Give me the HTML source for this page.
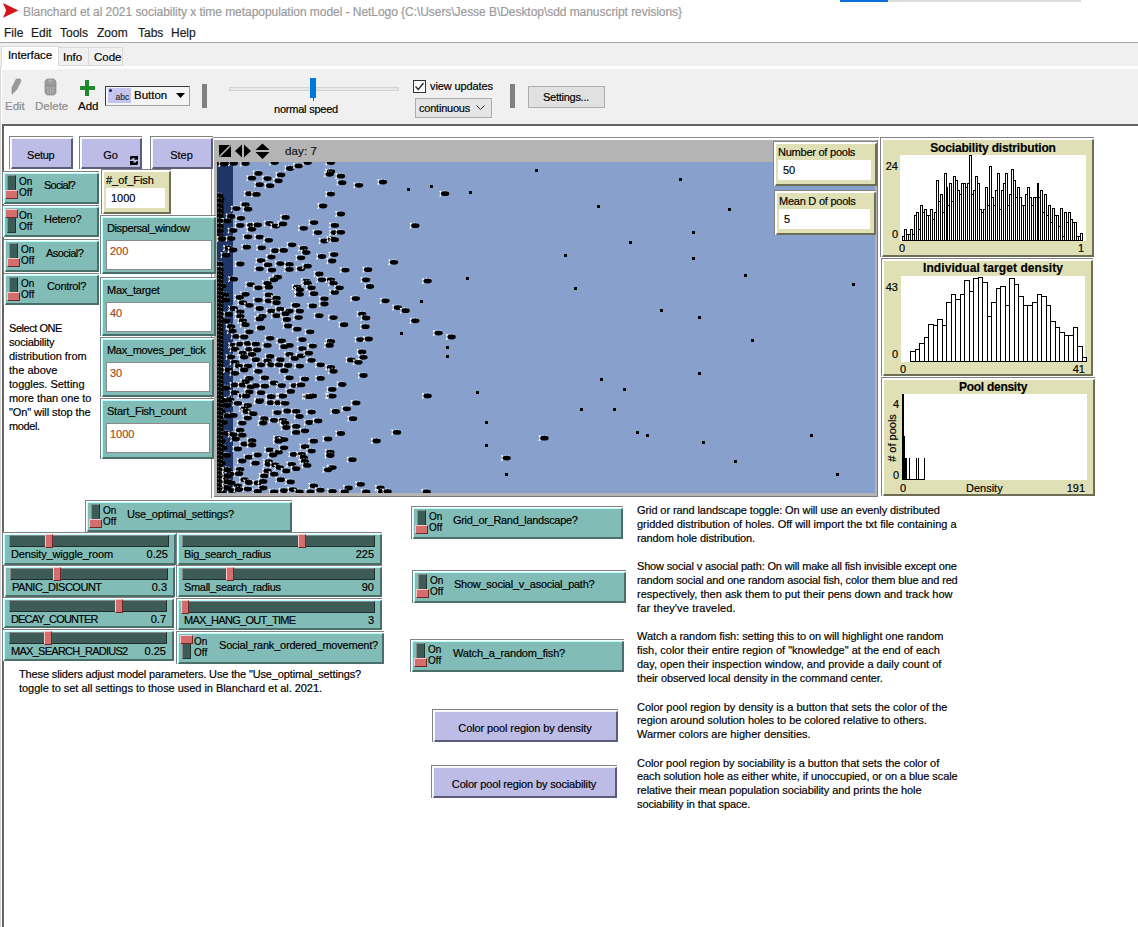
<!DOCTYPE html><html><head><meta charset="utf-8"><style>
*{box-sizing:border-box;margin:0;padding:0}
html,body{width:1138px;height:927px;overflow:hidden;background:#fff;font-family:"Liberation Sans",sans-serif;color:#000}
.a{position:absolute}
.t{position:absolute;white-space:nowrap;line-height:1;-webkit-text-stroke:0.18px currentColor}
.fr{position:absolute;border-top:1px solid #828282;border-left:1px solid #828282;background:#fff}
.fi{position:absolute;left:1px;top:1px;right:0;bottom:0;border-top:1px solid;border-left:1px solid;border-right:2px solid;border-bottom:2px solid}
.lav{background:#bcbce6;border-top-color:#f4f4ff;border-left-color:#f4f4ff;border-right-color:#5c5c7a;border-bottom-color:#5c5c7a}
.tea{background:#82bcb6;border-top-color:#b8ffff;border-left-color:#b8ffff;border-right-color:#4a6e69;border-bottom-color:#4a6e69}
.bei{background:#e0e0b6;border-top-color:#ffffff;border-left-color:#ffffff;border-right-color:#6e6e56;border-bottom-color:#6e6e56}
.f11{font-size:11px}
.fld{position:absolute;background:#fff;border:1px solid #8a8a8a}
.trk{position:absolute;background:#3e5c57;border-top:1px solid #8a8a8a;border-left:1px solid #8a8a8a;border-bottom:1px solid #1e2e2b;border-right:1px solid #1e2e2b}
.thm{position:absolute;background:#d46e6e;border-top:1px solid #ffc8c8;border-left:1px solid #ffc8c8;border-right:1px solid #6e2a2a;border-bottom:1px solid #6e2a2a}
.swt{position:absolute;background:#3e5c57;border:1px solid #8a8a8a;border-right-color:#203430;border-bottom-color:#203430}
</style></head><body><svg class="a" style="left:2px;top:2px" width="18" height="18" viewBox="0 0 18 18"><path d="M1 1 L16.4 8.4 L1 15.8 L4.2 8.4 Z" fill="#d4141c"/></svg><div class="t" id="q1" style="left:23px;top:6.04px;font-size:12px;color:#9a9a9a;font-weight:normal;letter-spacing:-0.049px;">Blanchard et al 2021 sociability x time metapopulation model - NetLogo {C:\Users\Jesse B\Desktop\sdd manuscript revisions}</div><div class="a" style="left:840px;top:0;width:48px;height:2px;background:#0a6ed8"></div><div class="a" style="left:888px;top:0;width:193px;height:2px;background:#dcdcdc"></div><div class="t" style="left:4px;top:26.94px;font-size:12px;color:#1a1a1a;font-weight:normal;">File</div><div class="t" style="left:31px;top:26.94px;font-size:12px;color:#1a1a1a;font-weight:normal;">Edit</div><div class="t" style="left:60px;top:26.94px;font-size:12px;color:#1a1a1a;font-weight:normal;">Tools</div><div class="t" style="left:97px;top:26.94px;font-size:12px;color:#1a1a1a;font-weight:normal;">Zoom</div><div class="t" style="left:138px;top:26.94px;font-size:12px;color:#1a1a1a;font-weight:normal;">Tabs</div><div class="t" style="left:171px;top:26.94px;font-size:12px;color:#1a1a1a;font-weight:normal;">Help</div><div class="a" style="left:0;top:42px;width:1138px;height:1px;background:#a6a6a6"></div><div class="a" style="left:0;top:43px;width:1138px;height:81px;background:#f0f0f0"></div><div class="a" style="left:1px;top:46px;width:58px;height:24px;background:#fff;border:1px solid #d9d9d9;border-bottom:none"></div><div class="a" style="left:58px;top:47px;width:31px;height:19px;background:#f0f0f0;border:1px solid #d9d9d9"></div><div class="a" style="left:88px;top:47px;width:35px;height:19px;background:#f0f0f0;border:1px solid #d9d9d9"></div><div class="t" id="q2" style="left:8px;top:50.07px;font-size:11.5px;color:#000;font-weight:normal;letter-spacing:-0.083px;">Interface</div><div class="t" style="left:63px;top:52.07px;font-size:11.5px;color:#000;font-weight:normal;">Info</div><div class="t" style="left:94px;top:52.07px;font-size:11.5px;color:#000;font-weight:normal;">Code</div><div class="a" style="left:1px;top:66px;width:1137px;height:3px;background:#fff"></div><div class="a" style="left:1px;top:66px;width:1px;height:60px;background:#fff"></div><svg class="a" style="left:0;top:70px" width="70" height="30" viewBox="0 70 70 30"><path d="M16.3 79 L20.3 79 L21 81 L16.6 89.8 L12 94.2 L12 87.4 Z" fill="#9a9a9a" stroke="#888" stroke-width="0.6"/><path d="M45 81 L47 79 L54 79 L56 81 L56 93 L54 95 L47 95 L45 93 Z" fill="#9c9c9c" stroke="#8a8a8a" stroke-width="0.7"/><path d="M45.5 85 Q50.5 86.5 55.5 85" stroke="#888" stroke-width="0.8" fill="none"/><ellipse cx="50.3" cy="80.8" rx="2" ry="1.3" fill="#b0b0b0"/><path d="M48 87 V93.5 M50.5 87 V94 M53 87 V93.5" stroke="#b6b6b6" stroke-width="0.8"/></svg><div class="t" style="left:5px;top:101.07px;font-size:11.5px;color:#8c8c8c;font-weight:normal;">Edit</div><div class="t" style="left:35px;top:101.07px;font-size:11.5px;color:#8c8c8c;font-weight:normal;">Delete</div><div class="a" style="left:80px;top:86px;width:15px;height:4px;background:#1e8a28"></div><div class="a" style="left:85px;top:80px;width:4px;height:16px;background:#1e8a28"></div><div class="t" style="left:78px;top:101.07px;font-size:11.5px;color:#000;font-weight:normal;">Add</div><div class="a" style="left:105px;top:86px;width:85px;height:20px;background:#f4f4f4;border:1px solid #3a3a3a;border-right-color:#a0a0a0;border-bottom-color:#a0a0a0"></div><div class="a" style="left:108px;top:88px;width:23px;height:15px;background:#c4c4ee"></div><div class="t" style="left:115.5px;top:93.1px;font-size:8.5px;color:#333;font-weight:normal;">abc</div><div class="a" style="left:109px;top:89px;width:3px;height:3px;background:#202060;border-radius:50%"></div><div class="t" style="left:134px;top:90.07px;font-size:11.5px;color:#000;font-weight:normal;">Button</div><svg class="a" style="left:176px;top:93px" width="10" height="6"><path d="M0 0 H9 L4.5 5 Z" fill="#000"/></svg><div class="a" style="left:202px;top:84px;width:5px;height:24px;background:#808080"></div><div class="a" style="left:229px;top:87px;width:170px;height:4px;background:#e7e7e7;border:1px solid #d4d4d4"></div><div class="a" style="left:310px;top:78px;width:6px;height:20px;background:#0078d7"></div><div class="a" style="left:313px;top:98px;width:1px;height:3px;background:#555"></div><div class="t" id="q3" style="left:274px;top:104.49px;font-size:11px;color:#000;font-weight:normal;letter-spacing:-0.221px;">normal speed</div><div class="a" style="left:413px;top:80px;width:13px;height:13px;background:#fff;border:1px solid #333"></div><svg class="a" style="left:414px;top:81px" width="11" height="11"><path d="M1.5 5.5 L4.3 8.5 L9.5 2" stroke="#222" stroke-width="1.3" fill="none"/></svg><div class="t" id="q4" style="left:430px;top:81.49px;font-size:11px;color:#000;font-weight:normal;letter-spacing:-0.102px;">view updates</div><div class="a" style="left:415px;top:98px;width:77px;height:20px;background:#e5e5e5;border:1px solid #adadad"></div><div class="t" id="q5" style="left:419px;top:103.49px;font-size:11px;color:#000;font-weight:normal;letter-spacing:-0.222px;">continuous</div><svg class="a" style="left:476px;top:105px" width="10" height="6"><path d="M0.5 0.5 L4.5 4.5 L8.5 0.5" stroke="#333" stroke-width="1" fill="none"/></svg><div class="a" style="left:510px;top:84px;width:5px;height:24px;background:#808080"></div><div class="a" style="left:528px;top:86px;width:77px;height:22px;background:#e1e1e1;border:1px solid #adadad"></div><div class="t" id="q6" style="left:543px;top:91.99px;font-size:11px;color:#000;font-weight:normal;letter-spacing:-0.266px;">Settings...</div><div class="a" style="left:0;top:66px;width:1px;height:861px;background:#d8d8d8"></div><div class="a" style="left:2px;top:124px;width:1136px;height:2px;background:#646464"></div><div class="a" style="left:2px;top:124px;width:2px;height:803px;background:#646464"></div><div class="a" style="left:211px;top:137px;width:668px;height:361px;border-top:1px solid #8e8e8e;border-left:1px solid #8e8e8e;background:#fff"></div><div class="a" style="left:214px;top:140px;width:664px;height:357px;background:#b4b4b4;border-right:1px solid #7a7a7a;border-bottom:1px solid #7a7a7a"></div><svg class="a" style="left:218px;top:143px" width="56" height="17" viewBox="0 0 56 17"><rect x="1" y="2" width="12" height="12" fill="#000"/><path d="M1.5 13.5 L12.5 2.5" stroke="#b4b4b4" stroke-width="1.6"/><path d="M24 1.5 L24 14.5 L17 8 Z M26 1.5 L26 14.5 L33 8 Z" fill="#000"/><path d="M44.5 0.5 L51.5 7 L37.5 7 Z M37.5 9 L51.5 9 L44.5 16 Z" fill="#000"/></svg><div class="t" id="q59" style="left:285px;top:146.07px;font-size:11.5px;color:#111;font-weight:normal;letter-spacing:0.112px;">day: 7</div><svg class="a" style="left:217px;top:162px" width="658" height="331" viewBox="217 162 658 331"><rect x="217" y="162" width="658" height="331" fill="#87a0cc"/><rect x="217" y="162" width="16" height="331" fill="#1e3566"/><path d="M219.4 160.5 L221.4 163.0 L219.4 166.1" stroke="#fff" stroke-width="1.2" fill="none"/><ellipse cx="223.9" cy="162.6" rx="4.2" ry="2.4" fill="none" stroke="#fff" stroke-width="0.7" stroke-dasharray="1.3 1.6"/><ellipse cx="224.8" cy="163.3" rx="4.2" ry="2.4" fill="#000"/><path d="M228.4 160.5 L230.4 163.0 L228.4 166.1" stroke="#fff" stroke-width="1.2" fill="none"/><ellipse cx="232.9" cy="162.6" rx="4.2" ry="2.4" fill="none" stroke="#fff" stroke-width="0.7" stroke-dasharray="1.3 1.6"/><ellipse cx="233.8" cy="163.3" rx="4.2" ry="2.4" fill="#000"/><path d="M240.1 160.8 L242.1 163.3 L240.1 166.4" stroke="#fff" stroke-width="1.2" fill="none"/><ellipse cx="244.6" cy="162.9" rx="4.2" ry="2.4" fill="none" stroke="#fff" stroke-width="0.7" stroke-dasharray="1.3 1.6"/><ellipse cx="245.5" cy="163.6" rx="4.2" ry="2.4" fill="#000"/><path d="M269.2 159.8 L271.2 162.3 L269.2 165.4" stroke="#fff" stroke-width="1.2" fill="none"/><ellipse cx="273.7" cy="161.9" rx="4.2" ry="2.4" fill="none" stroke="#fff" stroke-width="0.7" stroke-dasharray="1.3 1.6"/><ellipse cx="274.6" cy="162.6" rx="4.2" ry="2.4" fill="#000"/><path d="M302.2 159.8 L304.2 162.3 L302.2 165.4" stroke="#fff" stroke-width="1.2" fill="none"/><ellipse cx="306.7" cy="161.9" rx="4.2" ry="2.4" fill="none" stroke="#fff" stroke-width="0.7" stroke-dasharray="1.3 1.6"/><ellipse cx="307.6" cy="162.6" rx="4.2" ry="2.4" fill="#000"/><path d="M325.5 159.8 L327.5 162.3 L325.5 165.4" stroke="#fff" stroke-width="1.2" fill="none"/><ellipse cx="330.0" cy="161.9" rx="4.2" ry="2.4" fill="none" stroke="#fff" stroke-width="0.7" stroke-dasharray="1.3 1.6"/><ellipse cx="330.9" cy="162.6" rx="4.2" ry="2.4" fill="#000"/><path d="M284.7 165.7 L286.7 168.2 L284.7 171.3" stroke="#fff" stroke-width="1.2" fill="none"/><ellipse cx="289.2" cy="167.8" rx="4.2" ry="2.4" fill="none" stroke="#fff" stroke-width="0.7" stroke-dasharray="1.3 1.6"/><ellipse cx="290.1" cy="168.5" rx="4.2" ry="2.4" fill="#000"/><path d="M293.2 163.1 L295.2 165.6 L293.2 168.7" stroke="#fff" stroke-width="1.2" fill="none"/><ellipse cx="297.7" cy="165.2" rx="4.2" ry="2.4" fill="none" stroke="#fff" stroke-width="0.7" stroke-dasharray="1.3 1.6"/><ellipse cx="298.6" cy="165.9" rx="4.2" ry="2.4" fill="#000"/><path d="M253.0 170.6 L255.0 173.1 L253.0 176.2" stroke="#fff" stroke-width="1.2" fill="none"/><ellipse cx="257.5" cy="172.7" rx="4.2" ry="2.4" fill="none" stroke="#fff" stroke-width="0.7" stroke-dasharray="1.3 1.6"/><ellipse cx="258.4" cy="173.4" rx="4.2" ry="2.4" fill="#000"/><path d="M275.7 172.1 L277.7 174.6 L275.7 177.7" stroke="#fff" stroke-width="1.2" fill="none"/><ellipse cx="280.2" cy="174.2" rx="4.2" ry="2.4" fill="none" stroke="#fff" stroke-width="0.7" stroke-dasharray="1.3 1.6"/><ellipse cx="281.1" cy="174.9" rx="4.2" ry="2.4" fill="#000"/><path d="M246.6 175.4 L248.6 177.9 L246.6 181.0" stroke="#fff" stroke-width="1.2" fill="none"/><ellipse cx="251.1" cy="177.5" rx="4.2" ry="2.4" fill="none" stroke="#fff" stroke-width="0.7" stroke-dasharray="1.3 1.6"/><ellipse cx="252.0" cy="178.2" rx="4.2" ry="2.4" fill="#000"/><path d="M262.1 175.8 L264.1 178.3 L262.1 181.4" stroke="#fff" stroke-width="1.2" fill="none"/><ellipse cx="266.6" cy="177.9" rx="4.2" ry="2.4" fill="none" stroke="#fff" stroke-width="0.7" stroke-dasharray="1.3 1.6"/><ellipse cx="267.5" cy="178.6" rx="4.2" ry="2.4" fill="#000"/><path d="M273.1 178.0 L275.1 180.5 L273.1 183.6" stroke="#fff" stroke-width="1.2" fill="none"/><ellipse cx="277.6" cy="180.1" rx="4.2" ry="2.4" fill="none" stroke="#fff" stroke-width="0.7" stroke-dasharray="1.3 1.6"/><ellipse cx="278.5" cy="180.8" rx="4.2" ry="2.4" fill="#000"/><path d="M325.5 168.9 L327.5 171.4 L325.5 174.5" stroke="#fff" stroke-width="1.2" fill="none"/><ellipse cx="330.0" cy="171.0" rx="4.2" ry="2.4" fill="none" stroke="#fff" stroke-width="0.7" stroke-dasharray="1.3 1.6"/><ellipse cx="330.9" cy="171.7" rx="4.2" ry="2.4" fill="#000"/><path d="M324.2 171.5 L326.2 174.0 L324.2 177.1" stroke="#fff" stroke-width="1.2" fill="none"/><ellipse cx="328.7" cy="173.6" rx="4.2" ry="2.4" fill="none" stroke="#fff" stroke-width="0.7" stroke-dasharray="1.3 1.6"/><ellipse cx="329.6" cy="174.3" rx="4.2" ry="2.4" fill="#000"/><path d="M254.3 181.9 L256.3 184.4 L254.3 187.5" stroke="#fff" stroke-width="1.2" fill="none"/><ellipse cx="258.8" cy="184.0" rx="4.2" ry="2.4" fill="none" stroke="#fff" stroke-width="0.7" stroke-dasharray="1.3 1.6"/><ellipse cx="259.7" cy="184.7" rx="4.2" ry="2.4" fill="#000"/><path d="M264.7 182.9 L266.7 185.4 L264.7 188.5" stroke="#fff" stroke-width="1.2" fill="none"/><ellipse cx="269.2" cy="185.0" rx="4.2" ry="2.4" fill="none" stroke="#fff" stroke-width="0.7" stroke-dasharray="1.3 1.6"/><ellipse cx="270.1" cy="185.7" rx="4.2" ry="2.4" fill="#000"/><path d="M244.0 190.9 L246.0 193.4 L244.0 196.5" stroke="#fff" stroke-width="1.2" fill="none"/><ellipse cx="248.5" cy="193.0" rx="4.2" ry="2.4" fill="none" stroke="#fff" stroke-width="0.7" stroke-dasharray="1.3 1.6"/><ellipse cx="249.4" cy="193.7" rx="4.2" ry="2.4" fill="#000"/><path d="M251.1 191.6 L253.1 194.1 L251.1 197.2" stroke="#fff" stroke-width="1.2" fill="none"/><ellipse cx="255.6" cy="193.7" rx="4.2" ry="2.4" fill="none" stroke="#fff" stroke-width="0.7" stroke-dasharray="1.3 1.6"/><ellipse cx="256.5" cy="194.4" rx="4.2" ry="2.4" fill="#000"/><path d="M325.5 191.3 L327.5 193.8 L325.5 196.9" stroke="#fff" stroke-width="1.2" fill="none"/><ellipse cx="330.0" cy="193.4" rx="4.2" ry="2.4" fill="none" stroke="#fff" stroke-width="0.7" stroke-dasharray="1.3 1.6"/><ellipse cx="330.9" cy="194.1" rx="4.2" ry="2.4" fill="#000"/><path d="M214.8 196.7 L216.8 199.2 L214.8 202.3" stroke="#fff" stroke-width="1.2" fill="none"/><ellipse cx="219.3" cy="198.8" rx="4.2" ry="2.4" fill="none" stroke="#fff" stroke-width="0.7" stroke-dasharray="1.3 1.6"/><ellipse cx="220.2" cy="199.5" rx="4.2" ry="2.4" fill="#000"/><path d="M214.2 199.3 L216.2 201.8 L214.2 204.9" stroke="#fff" stroke-width="1.2" fill="none"/><ellipse cx="218.7" cy="201.4" rx="4.2" ry="2.4" fill="none" stroke="#fff" stroke-width="0.7" stroke-dasharray="1.3 1.6"/><ellipse cx="219.6" cy="202.1" rx="4.2" ry="2.4" fill="#000"/><path d="M240.1 201.9 L242.1 204.4 L240.1 207.5" stroke="#fff" stroke-width="1.2" fill="none"/><ellipse cx="244.6" cy="204.0" rx="4.2" ry="2.4" fill="none" stroke="#fff" stroke-width="0.7" stroke-dasharray="1.3 1.6"/><ellipse cx="245.5" cy="204.7" rx="4.2" ry="2.4" fill="#000"/><path d="M231.0 205.8 L233.0 208.3 L231.0 211.4" stroke="#fff" stroke-width="1.2" fill="none"/><ellipse cx="235.5" cy="207.9" rx="4.2" ry="2.4" fill="none" stroke="#fff" stroke-width="0.7" stroke-dasharray="1.3 1.6"/><ellipse cx="236.4" cy="208.6" rx="4.2" ry="2.4" fill="#000"/><path d="M242.7 206.4 L244.7 208.9 L242.7 212.0" stroke="#fff" stroke-width="1.2" fill="none"/><ellipse cx="247.2" cy="208.5" rx="4.2" ry="2.4" fill="none" stroke="#fff" stroke-width="0.7" stroke-dasharray="1.3 1.6"/><ellipse cx="248.1" cy="209.2" rx="4.2" ry="2.4" fill="#000"/><path d="M317.7 203.2 L319.7 205.7 L317.7 208.8" stroke="#fff" stroke-width="1.2" fill="none"/><ellipse cx="322.2" cy="205.3" rx="4.2" ry="2.4" fill="none" stroke="#fff" stroke-width="0.7" stroke-dasharray="1.3 1.6"/><ellipse cx="323.1" cy="206.0" rx="4.2" ry="2.4" fill="#000"/><path d="M214.2 205.2 L216.2 207.7 L214.2 210.8" stroke="#fff" stroke-width="1.2" fill="none"/><ellipse cx="218.7" cy="207.3" rx="4.2" ry="2.4" fill="none" stroke="#fff" stroke-width="0.7" stroke-dasharray="1.3 1.6"/><ellipse cx="219.6" cy="208.0" rx="4.2" ry="2.4" fill="#000"/><path d="M214.2 209.7 L216.2 212.2 L214.2 215.3" stroke="#fff" stroke-width="1.2" fill="none"/><ellipse cx="218.7" cy="211.8" rx="4.2" ry="2.4" fill="none" stroke="#fff" stroke-width="0.7" stroke-dasharray="1.3 1.6"/><ellipse cx="219.6" cy="212.5" rx="4.2" ry="2.4" fill="#000"/><path d="M225.8 213.6 L227.8 216.1 L225.8 219.2" stroke="#fff" stroke-width="1.2" fill="none"/><ellipse cx="230.3" cy="215.7" rx="4.2" ry="2.4" fill="none" stroke="#fff" stroke-width="0.7" stroke-dasharray="1.3 1.6"/><ellipse cx="231.2" cy="216.4" rx="4.2" ry="2.4" fill="#000"/><path d="M235.5 215.5 L237.5 218.0 L235.5 221.1" stroke="#fff" stroke-width="1.2" fill="none"/><ellipse cx="240.0" cy="217.6" rx="4.2" ry="2.4" fill="none" stroke="#fff" stroke-width="0.7" stroke-dasharray="1.3 1.6"/><ellipse cx="240.9" cy="218.3" rx="4.2" ry="2.4" fill="#000"/><path d="M280.2 214.6 L282.2 217.1 L280.2 220.2" stroke="#fff" stroke-width="1.2" fill="none"/><ellipse cx="284.7" cy="216.7" rx="4.2" ry="2.4" fill="none" stroke="#fff" stroke-width="0.7" stroke-dasharray="1.3 1.6"/><ellipse cx="285.6" cy="217.4" rx="4.2" ry="2.4" fill="#000"/><path d="M222.0 218.1 L224.0 220.6 L222.0 223.7" stroke="#fff" stroke-width="1.2" fill="none"/><ellipse cx="226.5" cy="220.2" rx="4.2" ry="2.4" fill="none" stroke="#fff" stroke-width="0.7" stroke-dasharray="1.3 1.6"/><ellipse cx="227.4" cy="220.9" rx="4.2" ry="2.4" fill="#000"/><path d="M234.9 222.6 L236.9 225.1 L234.9 228.2" stroke="#fff" stroke-width="1.2" fill="none"/><ellipse cx="239.4" cy="224.7" rx="4.2" ry="2.4" fill="none" stroke="#fff" stroke-width="0.7" stroke-dasharray="1.3 1.6"/><ellipse cx="240.3" cy="225.4" rx="4.2" ry="2.4" fill="#000"/><path d="M245.9 222.6 L247.9 225.1 L245.9 228.2" stroke="#fff" stroke-width="1.2" fill="none"/><ellipse cx="250.4" cy="224.7" rx="4.2" ry="2.4" fill="none" stroke="#fff" stroke-width="0.7" stroke-dasharray="1.3 1.6"/><ellipse cx="251.3" cy="225.4" rx="4.2" ry="2.4" fill="#000"/><path d="M252.4 222.2 L254.4 224.7 L252.4 227.8" stroke="#fff" stroke-width="1.2" fill="none"/><ellipse cx="256.9" cy="224.3" rx="4.2" ry="2.4" fill="none" stroke="#fff" stroke-width="0.7" stroke-dasharray="1.3 1.6"/><ellipse cx="257.8" cy="225.0" rx="4.2" ry="2.4" fill="#000"/><path d="M264.0 220.7 L266.0 223.2 L264.0 226.3" stroke="#fff" stroke-width="1.2" fill="none"/><ellipse cx="268.5" cy="222.8" rx="4.2" ry="2.4" fill="none" stroke="#fff" stroke-width="0.7" stroke-dasharray="1.3 1.6"/><ellipse cx="269.4" cy="223.5" rx="4.2" ry="2.4" fill="#000"/><path d="M270.5 223.3 L272.5 225.8 L270.5 228.9" stroke="#fff" stroke-width="1.2" fill="none"/><ellipse cx="275.0" cy="225.4" rx="4.2" ry="2.4" fill="none" stroke="#fff" stroke-width="0.7" stroke-dasharray="1.3 1.6"/><ellipse cx="275.9" cy="226.1" rx="4.2" ry="2.4" fill="#000"/><path d="M277.6 221.1 L279.6 223.6 L277.6 226.7" stroke="#fff" stroke-width="1.2" fill="none"/><ellipse cx="282.1" cy="223.2" rx="4.2" ry="2.4" fill="none" stroke="#fff" stroke-width="0.7" stroke-dasharray="1.3 1.6"/><ellipse cx="283.0" cy="223.9" rx="4.2" ry="2.4" fill="#000"/><path d="M308.7 219.8 L310.7 222.3 L308.7 225.4" stroke="#fff" stroke-width="1.2" fill="none"/><ellipse cx="313.2" cy="221.9" rx="4.2" ry="2.4" fill="none" stroke="#fff" stroke-width="0.7" stroke-dasharray="1.3 1.6"/><ellipse cx="314.1" cy="222.6" rx="4.2" ry="2.4" fill="#000"/><path d="M329.4 222.6 L331.4 225.1 L329.4 228.2" stroke="#fff" stroke-width="1.2" fill="none"/><ellipse cx="333.9" cy="224.7" rx="4.2" ry="2.4" fill="none" stroke="#fff" stroke-width="0.7" stroke-dasharray="1.3 1.6"/><ellipse cx="334.8" cy="225.4" rx="4.2" ry="2.4" fill="#000"/><path d="M246.6 226.5 L248.6 229.0 L246.6 232.1" stroke="#fff" stroke-width="1.2" fill="none"/><ellipse cx="251.1" cy="228.6" rx="4.2" ry="2.4" fill="none" stroke="#fff" stroke-width="0.7" stroke-dasharray="1.3 1.6"/><ellipse cx="252.0" cy="229.3" rx="4.2" ry="2.4" fill="#000"/><path d="M227.8 227.8 L229.8 230.3 L227.8 233.4" stroke="#fff" stroke-width="1.2" fill="none"/><ellipse cx="232.3" cy="229.9" rx="4.2" ry="2.4" fill="none" stroke="#fff" stroke-width="0.7" stroke-dasharray="1.3 1.6"/><ellipse cx="233.2" cy="230.6" rx="4.2" ry="2.4" fill="#000"/><path d="M298.3 225.5 L300.3 228.0 L298.3 231.1" stroke="#fff" stroke-width="1.2" fill="none"/><ellipse cx="302.8" cy="227.6" rx="4.2" ry="2.4" fill="none" stroke="#fff" stroke-width="0.7" stroke-dasharray="1.3 1.6"/><ellipse cx="303.7" cy="228.3" rx="4.2" ry="2.4" fill="#000"/><path d="M312.6 229.8 L314.6 232.3 L312.6 235.4" stroke="#fff" stroke-width="1.2" fill="none"/><ellipse cx="317.1" cy="231.9" rx="4.2" ry="2.4" fill="none" stroke="#fff" stroke-width="0.7" stroke-dasharray="1.3 1.6"/><ellipse cx="318.0" cy="232.6" rx="4.2" ry="2.4" fill="#000"/><path d="M329.4 229.8 L331.4 232.3 L329.4 235.4" stroke="#fff" stroke-width="1.2" fill="none"/><ellipse cx="333.9" cy="231.9" rx="4.2" ry="2.4" fill="none" stroke="#fff" stroke-width="0.7" stroke-dasharray="1.3 1.6"/><ellipse cx="334.8" cy="232.6" rx="4.2" ry="2.4" fill="#000"/><path d="M214.2 223.9 L216.2 226.4 L214.2 229.5" stroke="#fff" stroke-width="1.2" fill="none"/><ellipse cx="218.7" cy="226.0" rx="4.2" ry="2.4" fill="none" stroke="#fff" stroke-width="0.7" stroke-dasharray="1.3 1.6"/><ellipse cx="219.6" cy="226.7" rx="4.2" ry="2.4" fill="#000"/><path d="M214.2 227.8 L216.2 230.3 L214.2 233.4" stroke="#fff" stroke-width="1.2" fill="none"/><ellipse cx="218.7" cy="229.9" rx="4.2" ry="2.4" fill="none" stroke="#fff" stroke-width="0.7" stroke-dasharray="1.3 1.6"/><ellipse cx="219.6" cy="230.6" rx="4.2" ry="2.4" fill="#000"/><path d="M214.2 233.0 L216.2 235.5 L214.2 238.6" stroke="#fff" stroke-width="1.2" fill="none"/><ellipse cx="218.7" cy="235.1" rx="4.2" ry="2.4" fill="none" stroke="#fff" stroke-width="0.7" stroke-dasharray="1.3 1.6"/><ellipse cx="219.6" cy="235.8" rx="4.2" ry="2.4" fill="#000"/><path d="M216.8 236.2 L218.8 238.7 L216.8 241.8" stroke="#fff" stroke-width="1.2" fill="none"/><ellipse cx="221.3" cy="238.3" rx="4.2" ry="2.4" fill="none" stroke="#fff" stroke-width="0.7" stroke-dasharray="1.3 1.6"/><ellipse cx="222.2" cy="239.0" rx="4.2" ry="2.4" fill="#000"/><path d="M242.7 234.0 L244.7 236.5 L242.7 239.6" stroke="#fff" stroke-width="1.2" fill="none"/><ellipse cx="247.2" cy="236.1" rx="4.2" ry="2.4" fill="none" stroke="#fff" stroke-width="0.7" stroke-dasharray="1.3 1.6"/><ellipse cx="248.1" cy="236.8" rx="4.2" ry="2.4" fill="#000"/><path d="M254.3 234.3 L256.3 236.8 L254.3 239.9" stroke="#fff" stroke-width="1.2" fill="none"/><ellipse cx="258.8" cy="236.4" rx="4.2" ry="2.4" fill="none" stroke="#fff" stroke-width="0.7" stroke-dasharray="1.3 1.6"/><ellipse cx="259.7" cy="237.1" rx="4.2" ry="2.4" fill="#000"/><path d="M263.4 237.5 L265.4 240.0 L263.4 243.1" stroke="#fff" stroke-width="1.2" fill="none"/><ellipse cx="267.9" cy="239.6" rx="4.2" ry="2.4" fill="none" stroke="#fff" stroke-width="0.7" stroke-dasharray="1.3 1.6"/><ellipse cx="268.8" cy="240.3" rx="4.2" ry="2.4" fill="#000"/><path d="M225.8 235.8 L227.8 238.3 L225.8 241.4" stroke="#fff" stroke-width="1.2" fill="none"/><ellipse cx="230.3" cy="237.9" rx="4.2" ry="2.4" fill="none" stroke="#fff" stroke-width="0.7" stroke-dasharray="1.3 1.6"/><ellipse cx="231.2" cy="238.6" rx="4.2" ry="2.4" fill="#000"/><path d="M319.0 238.2 L321.0 240.7 L319.0 243.8" stroke="#fff" stroke-width="1.2" fill="none"/><ellipse cx="323.5" cy="240.3" rx="4.2" ry="2.4" fill="none" stroke="#fff" stroke-width="0.7" stroke-dasharray="1.3 1.6"/><ellipse cx="324.4" cy="241.0" rx="4.2" ry="2.4" fill="#000"/><path d="M326.8 236.2 L328.8 238.7 L326.8 241.8" stroke="#fff" stroke-width="1.2" fill="none"/><ellipse cx="331.3" cy="238.3" rx="4.2" ry="2.4" fill="none" stroke="#fff" stroke-width="0.7" stroke-dasharray="1.3 1.6"/><ellipse cx="332.2" cy="239.0" rx="4.2" ry="2.4" fill="#000"/><path d="M241.4 244.4 L243.4 246.9 L241.4 250.0" stroke="#fff" stroke-width="1.2" fill="none"/><ellipse cx="245.9" cy="246.5" rx="4.2" ry="2.4" fill="none" stroke="#fff" stroke-width="0.7" stroke-dasharray="1.3 1.6"/><ellipse cx="246.8" cy="247.2" rx="4.2" ry="2.4" fill="#000"/><path d="M256.3 245.0 L258.3 247.5 L256.3 250.6" stroke="#fff" stroke-width="1.2" fill="none"/><ellipse cx="260.8" cy="247.1" rx="4.2" ry="2.4" fill="none" stroke="#fff" stroke-width="0.7" stroke-dasharray="1.3 1.6"/><ellipse cx="261.7" cy="247.8" rx="4.2" ry="2.4" fill="#000"/><path d="M286.7 242.0 L288.7 244.5 L286.7 247.6" stroke="#fff" stroke-width="1.2" fill="none"/><ellipse cx="291.2" cy="244.1" rx="4.2" ry="2.4" fill="none" stroke="#fff" stroke-width="0.7" stroke-dasharray="1.3 1.6"/><ellipse cx="292.1" cy="244.8" rx="4.2" ry="2.4" fill="#000"/><path d="M298.3 245.7 L300.3 248.2 L298.3 251.3" stroke="#fff" stroke-width="1.2" fill="none"/><ellipse cx="302.8" cy="247.8" rx="4.2" ry="2.4" fill="none" stroke="#fff" stroke-width="0.7" stroke-dasharray="1.3 1.6"/><ellipse cx="303.7" cy="248.5" rx="4.2" ry="2.4" fill="#000"/><path d="M223.3 245.3 L225.3 247.8 L223.3 250.9" stroke="#fff" stroke-width="1.2" fill="none"/><ellipse cx="227.8" cy="247.4" rx="4.2" ry="2.4" fill="none" stroke="#fff" stroke-width="0.7" stroke-dasharray="1.3 1.6"/><ellipse cx="228.7" cy="248.1" rx="4.2" ry="2.4" fill="#000"/><path d="M227.8 247.2 L229.8 249.7 L227.8 252.8" stroke="#fff" stroke-width="1.2" fill="none"/><ellipse cx="232.3" cy="249.3" rx="4.2" ry="2.4" fill="none" stroke="#fff" stroke-width="0.7" stroke-dasharray="1.3 1.6"/><ellipse cx="233.2" cy="250.0" rx="4.2" ry="2.4" fill="#000"/><path d="M220.7 252.4 L222.7 254.9 L220.7 258.0" stroke="#fff" stroke-width="1.2" fill="none"/><ellipse cx="225.2" cy="254.5" rx="4.2" ry="2.4" fill="none" stroke="#fff" stroke-width="0.7" stroke-dasharray="1.3 1.6"/><ellipse cx="226.1" cy="255.2" rx="4.2" ry="2.4" fill="#000"/><path d="M329.4 236.9 L331.4 239.4 L329.4 242.5" stroke="#fff" stroke-width="1.2" fill="none"/><ellipse cx="333.9" cy="239.0" rx="4.2" ry="2.4" fill="none" stroke="#fff" stroke-width="0.7" stroke-dasharray="1.3 1.6"/><ellipse cx="334.8" cy="239.7" rx="4.2" ry="2.4" fill="#000"/><path d="M269.9 247.9 L271.9 250.4 L269.9 253.5" stroke="#fff" stroke-width="1.2" fill="none"/><ellipse cx="274.4" cy="250.0" rx="4.2" ry="2.4" fill="none" stroke="#fff" stroke-width="0.7" stroke-dasharray="1.3 1.6"/><ellipse cx="275.3" cy="250.7" rx="4.2" ry="2.4" fill="#000"/><path d="M278.3 247.6 L280.3 250.1 L278.3 253.2" stroke="#fff" stroke-width="1.2" fill="none"/><ellipse cx="282.8" cy="249.7" rx="4.2" ry="2.4" fill="none" stroke="#fff" stroke-width="0.7" stroke-dasharray="1.3 1.6"/><ellipse cx="283.7" cy="250.4" rx="4.2" ry="2.4" fill="#000"/><path d="M300.9 249.8 L302.9 252.3 L300.9 255.4" stroke="#fff" stroke-width="1.2" fill="none"/><ellipse cx="305.4" cy="251.9" rx="4.2" ry="2.4" fill="none" stroke="#fff" stroke-width="0.7" stroke-dasharray="1.3 1.6"/><ellipse cx="306.3" cy="252.6" rx="4.2" ry="2.4" fill="#000"/><path d="M295.7 255.0 L297.7 257.5 L295.7 260.6" stroke="#fff" stroke-width="1.2" fill="none"/><ellipse cx="300.2" cy="257.1" rx="4.2" ry="2.4" fill="none" stroke="#fff" stroke-width="0.7" stroke-dasharray="1.3 1.6"/><ellipse cx="301.1" cy="257.8" rx="4.2" ry="2.4" fill="#000"/><path d="M266.0 254.3 L268.0 256.8 L266.0 259.9" stroke="#fff" stroke-width="1.2" fill="none"/><ellipse cx="270.5" cy="256.4" rx="4.2" ry="2.4" fill="none" stroke="#fff" stroke-width="0.7" stroke-dasharray="1.3 1.6"/><ellipse cx="271.4" cy="257.1" rx="4.2" ry="2.4" fill="#000"/><path d="M316.5 253.7 L318.5 256.2 L316.5 259.3" stroke="#fff" stroke-width="1.2" fill="none"/><ellipse cx="321.0" cy="255.8" rx="4.2" ry="2.4" fill="none" stroke="#fff" stroke-width="0.7" stroke-dasharray="1.3 1.6"/><ellipse cx="321.9" cy="256.5" rx="4.2" ry="2.4" fill="#000"/><path d="M328.8 251.8 L330.8 254.3 L328.8 257.4" stroke="#fff" stroke-width="1.2" fill="none"/><ellipse cx="333.3" cy="253.9" rx="4.2" ry="2.4" fill="none" stroke="#fff" stroke-width="0.7" stroke-dasharray="1.3 1.6"/><ellipse cx="334.2" cy="254.6" rx="4.2" ry="2.4" fill="#000"/><path d="M326.8 258.2 L328.8 260.7 L326.8 263.8" stroke="#fff" stroke-width="1.2" fill="none"/><ellipse cx="331.3" cy="260.3" rx="4.2" ry="2.4" fill="none" stroke="#fff" stroke-width="0.7" stroke-dasharray="1.3 1.6"/><ellipse cx="332.2" cy="261.0" rx="4.2" ry="2.4" fill="#000"/><path d="M234.9 261.2 L236.9 263.7 L234.9 266.8" stroke="#fff" stroke-width="1.2" fill="none"/><ellipse cx="239.4" cy="263.3" rx="4.2" ry="2.4" fill="none" stroke="#fff" stroke-width="0.7" stroke-dasharray="1.3 1.6"/><ellipse cx="240.3" cy="264.0" rx="4.2" ry="2.4" fill="#000"/><path d="M255.6 257.8 L257.6 260.3 L255.6 263.4" stroke="#fff" stroke-width="1.2" fill="none"/><ellipse cx="260.1" cy="259.9" rx="4.2" ry="2.4" fill="none" stroke="#fff" stroke-width="0.7" stroke-dasharray="1.3 1.6"/><ellipse cx="261.0" cy="260.6" rx="4.2" ry="2.4" fill="#000"/><path d="M262.7 262.1 L264.7 264.6 L262.7 267.7" stroke="#fff" stroke-width="1.2" fill="none"/><ellipse cx="267.2" cy="264.2" rx="4.2" ry="2.4" fill="none" stroke="#fff" stroke-width="0.7" stroke-dasharray="1.3 1.6"/><ellipse cx="268.1" cy="264.9" rx="4.2" ry="2.4" fill="#000"/><path d="M275.0 260.8 L277.0 263.3 L275.0 266.4" stroke="#fff" stroke-width="1.2" fill="none"/><ellipse cx="279.5" cy="262.9" rx="4.2" ry="2.4" fill="none" stroke="#fff" stroke-width="0.7" stroke-dasharray="1.3 1.6"/><ellipse cx="280.4" cy="263.6" rx="4.2" ry="2.4" fill="#000"/><path d="M284.1 261.5 L286.1 264.0 L284.1 267.1" stroke="#fff" stroke-width="1.2" fill="none"/><ellipse cx="288.6" cy="263.6" rx="4.2" ry="2.4" fill="none" stroke="#fff" stroke-width="0.7" stroke-dasharray="1.3 1.6"/><ellipse cx="289.5" cy="264.3" rx="4.2" ry="2.4" fill="#000"/><path d="M254.3 266.0 L256.3 268.5 L254.3 271.6" stroke="#fff" stroke-width="1.2" fill="none"/><ellipse cx="258.8" cy="268.1" rx="4.2" ry="2.4" fill="none" stroke="#fff" stroke-width="0.7" stroke-dasharray="1.3 1.6"/><ellipse cx="259.7" cy="268.8" rx="4.2" ry="2.4" fill="#000"/><path d="M284.1 266.6 L286.1 269.1 L284.1 272.2" stroke="#fff" stroke-width="1.2" fill="none"/><ellipse cx="288.6" cy="268.7" rx="4.2" ry="2.4" fill="none" stroke="#fff" stroke-width="0.7" stroke-dasharray="1.3 1.6"/><ellipse cx="289.5" cy="269.4" rx="4.2" ry="2.4" fill="#000"/><path d="M295.7 266.0 L297.7 268.5 L295.7 271.6" stroke="#fff" stroke-width="1.2" fill="none"/><ellipse cx="300.2" cy="268.1" rx="4.2" ry="2.4" fill="none" stroke="#fff" stroke-width="0.7" stroke-dasharray="1.3 1.6"/><ellipse cx="301.1" cy="268.8" rx="4.2" ry="2.4" fill="#000"/><path d="M302.2 263.4 L304.2 265.9 L302.2 269.0" stroke="#fff" stroke-width="1.2" fill="none"/><ellipse cx="306.7" cy="265.5" rx="4.2" ry="2.4" fill="none" stroke="#fff" stroke-width="0.7" stroke-dasharray="1.3 1.6"/><ellipse cx="307.6" cy="266.2" rx="4.2" ry="2.4" fill="#000"/><path d="M266.6 267.3 L268.6 269.8 L266.6 272.9" stroke="#fff" stroke-width="1.2" fill="none"/><ellipse cx="271.1" cy="269.4" rx="4.2" ry="2.4" fill="none" stroke="#fff" stroke-width="0.7" stroke-dasharray="1.3 1.6"/><ellipse cx="272.0" cy="270.1" rx="4.2" ry="2.4" fill="#000"/><path d="M313.9 271.2 L315.9 273.7 L313.9 276.8" stroke="#fff" stroke-width="1.2" fill="none"/><ellipse cx="318.4" cy="273.3" rx="4.2" ry="2.4" fill="none" stroke="#fff" stroke-width="0.7" stroke-dasharray="1.3 1.6"/><ellipse cx="319.3" cy="274.0" rx="4.2" ry="2.4" fill="#000"/><path d="M214.2 261.5 L216.2 264.0 L214.2 267.1" stroke="#fff" stroke-width="1.2" fill="none"/><ellipse cx="218.7" cy="263.6" rx="4.2" ry="2.4" fill="none" stroke="#fff" stroke-width="0.7" stroke-dasharray="1.3 1.6"/><ellipse cx="219.6" cy="264.3" rx="4.2" ry="2.4" fill="#000"/><path d="M214.2 266.6 L216.2 269.1 L214.2 272.2" stroke="#fff" stroke-width="1.2" fill="none"/><ellipse cx="218.7" cy="268.7" rx="4.2" ry="2.4" fill="none" stroke="#fff" stroke-width="0.7" stroke-dasharray="1.3 1.6"/><ellipse cx="219.6" cy="269.4" rx="4.2" ry="2.4" fill="#000"/><path d="M214.2 271.8 L216.2 274.3 L214.2 277.4" stroke="#fff" stroke-width="1.2" fill="none"/><ellipse cx="218.7" cy="273.9" rx="4.2" ry="2.4" fill="none" stroke="#fff" stroke-width="0.7" stroke-dasharray="1.3 1.6"/><ellipse cx="219.6" cy="274.6" rx="4.2" ry="2.4" fill="#000"/><path d="M228.4 276.4 L230.4 278.9 L228.4 282.0" stroke="#fff" stroke-width="1.2" fill="none"/><ellipse cx="232.9" cy="278.5" rx="4.2" ry="2.4" fill="none" stroke="#fff" stroke-width="0.7" stroke-dasharray="1.3 1.6"/><ellipse cx="233.8" cy="279.2" rx="4.2" ry="2.4" fill="#000"/><path d="M272.4 274.4 L274.4 276.9 L272.4 280.0" stroke="#fff" stroke-width="1.2" fill="none"/><ellipse cx="276.9" cy="276.5" rx="4.2" ry="2.4" fill="none" stroke="#fff" stroke-width="0.7" stroke-dasharray="1.3 1.6"/><ellipse cx="277.8" cy="277.2" rx="4.2" ry="2.4" fill="#000"/><path d="M268.6 277.0 L270.6 279.5 L268.6 282.6" stroke="#fff" stroke-width="1.2" fill="none"/><ellipse cx="273.1" cy="279.1" rx="4.2" ry="2.4" fill="none" stroke="#fff" stroke-width="0.7" stroke-dasharray="1.3 1.6"/><ellipse cx="274.0" cy="279.8" rx="4.2" ry="2.4" fill="#000"/><path d="M300.9 278.3 L302.9 280.8 L300.9 283.9" stroke="#fff" stroke-width="1.2" fill="none"/><ellipse cx="305.4" cy="280.4" rx="4.2" ry="2.4" fill="none" stroke="#fff" stroke-width="0.7" stroke-dasharray="1.3 1.6"/><ellipse cx="306.3" cy="281.1" rx="4.2" ry="2.4" fill="#000"/><path d="M325.5 277.0 L327.5 279.5 L325.5 282.6" stroke="#fff" stroke-width="1.2" fill="none"/><ellipse cx="330.0" cy="279.1" rx="4.2" ry="2.4" fill="none" stroke="#fff" stroke-width="0.7" stroke-dasharray="1.3 1.6"/><ellipse cx="330.9" cy="279.8" rx="4.2" ry="2.4" fill="#000"/><path d="M316.5 277.0 L318.5 279.5 L316.5 282.6" stroke="#fff" stroke-width="1.2" fill="none"/><ellipse cx="321.0" cy="279.1" rx="4.2" ry="2.4" fill="none" stroke="#fff" stroke-width="0.7" stroke-dasharray="1.3 1.6"/><ellipse cx="321.9" cy="279.8" rx="4.2" ry="2.4" fill="#000"/><path d="M335.5 173.4 L337.5 175.9 L335.5 179.0" stroke="#fff" stroke-width="1.2" fill="none"/><ellipse cx="340.0" cy="175.5" rx="4.2" ry="2.4" fill="none" stroke="#fff" stroke-width="0.7" stroke-dasharray="1.3 1.6"/><ellipse cx="340.9" cy="176.2" rx="4.2" ry="2.4" fill="#000"/><path d="M336.8 179.9 L338.8 182.4 L336.8 185.5" stroke="#fff" stroke-width="1.2" fill="none"/><ellipse cx="341.3" cy="182.0" rx="4.2" ry="2.4" fill="none" stroke="#fff" stroke-width="0.7" stroke-dasharray="1.3 1.6"/><ellipse cx="342.2" cy="182.7" rx="4.2" ry="2.4" fill="#000"/><path d="M353.6 182.5 L355.6 185.0 L353.6 188.1" stroke="#fff" stroke-width="1.2" fill="none"/><ellipse cx="358.1" cy="184.6" rx="4.2" ry="2.4" fill="none" stroke="#fff" stroke-width="0.7" stroke-dasharray="1.3 1.6"/><ellipse cx="359.0" cy="185.3" rx="4.2" ry="2.4" fill="#000"/><path d="M377.6 179.3 L379.6 181.8 L377.6 184.9" stroke="#fff" stroke-width="1.2" fill="none"/><ellipse cx="382.1" cy="181.4" rx="4.2" ry="2.4" fill="none" stroke="#fff" stroke-width="0.7" stroke-dasharray="1.3 1.6"/><ellipse cx="383.0" cy="182.1" rx="4.2" ry="2.4" fill="#000"/><path d="M439.7 190.9 L441.7 193.4 L439.7 196.5" stroke="#fff" stroke-width="1.2" fill="none"/><ellipse cx="444.2" cy="193.0" rx="4.2" ry="2.4" fill="none" stroke="#fff" stroke-width="0.7" stroke-dasharray="1.3 1.6"/><ellipse cx="445.1" cy="193.7" rx="4.2" ry="2.4" fill="#000"/><path d="M335.5 211.2 L337.5 213.7 L335.5 216.8" stroke="#fff" stroke-width="1.2" fill="none"/><ellipse cx="340.0" cy="213.3" rx="4.2" ry="2.4" fill="none" stroke="#fff" stroke-width="0.7" stroke-dasharray="1.3 1.6"/><ellipse cx="340.9" cy="214.0" rx="4.2" ry="2.4" fill="#000"/><path d="M335.5 229.5 L337.5 232.0 L335.5 235.1" stroke="#fff" stroke-width="1.2" fill="none"/><ellipse cx="340.0" cy="231.6" rx="4.2" ry="2.4" fill="none" stroke="#fff" stroke-width="0.7" stroke-dasharray="1.3 1.6"/><ellipse cx="340.9" cy="232.3" rx="4.2" ry="2.4" fill="#000"/><path d="M409.9 222.9 L411.9 225.4 L409.9 228.5" stroke="#fff" stroke-width="1.2" fill="none"/><ellipse cx="414.4" cy="225.0" rx="4.2" ry="2.4" fill="none" stroke="#fff" stroke-width="0.7" stroke-dasharray="1.3 1.6"/><ellipse cx="415.3" cy="225.7" rx="4.2" ry="2.4" fill="#000"/><path d="M388.6 259.5 L390.6 262.0 L388.6 265.1" stroke="#fff" stroke-width="1.2" fill="none"/><ellipse cx="393.1" cy="261.6" rx="4.2" ry="2.4" fill="none" stroke="#fff" stroke-width="0.7" stroke-dasharray="1.3 1.6"/><ellipse cx="394.0" cy="262.3" rx="4.2" ry="2.4" fill="#000"/><path d="M340.0 267.3 L342.0 269.8 L340.0 272.9" stroke="#fff" stroke-width="1.2" fill="none"/><ellipse cx="344.5" cy="269.4" rx="4.2" ry="2.4" fill="none" stroke="#fff" stroke-width="0.7" stroke-dasharray="1.3 1.6"/><ellipse cx="345.4" cy="270.1" rx="4.2" ry="2.4" fill="#000"/><path d="M362.7 266.9 L364.7 269.4 L362.7 272.5" stroke="#fff" stroke-width="1.2" fill="none"/><ellipse cx="367.2" cy="269.0" rx="4.2" ry="2.4" fill="none" stroke="#fff" stroke-width="0.7" stroke-dasharray="1.3 1.6"/><ellipse cx="368.1" cy="269.7" rx="4.2" ry="2.4" fill="#000"/><path d="M360.7 277.0 L362.7 279.5 L360.7 282.6" stroke="#fff" stroke-width="1.2" fill="none"/><ellipse cx="365.2" cy="279.1" rx="4.2" ry="2.4" fill="none" stroke="#fff" stroke-width="0.7" stroke-dasharray="1.3 1.6"/><ellipse cx="366.1" cy="279.8" rx="4.2" ry="2.4" fill="#000"/><path d="M422.2 278.3 L424.2 280.8 L422.2 283.9" stroke="#fff" stroke-width="1.2" fill="none"/><ellipse cx="426.7" cy="280.4" rx="4.2" ry="2.4" fill="none" stroke="#fff" stroke-width="0.7" stroke-dasharray="1.3 1.6"/><ellipse cx="427.6" cy="281.1" rx="4.2" ry="2.4" fill="#000"/><path d="M216.8 283.1 L218.8 285.6 L216.8 288.7" stroke="#fff" stroke-width="1.2" fill="none"/><ellipse cx="221.3" cy="285.2" rx="4.2" ry="2.4" fill="none" stroke="#fff" stroke-width="0.7" stroke-dasharray="1.3 1.6"/><ellipse cx="222.2" cy="285.9" rx="4.2" ry="2.4" fill="#000"/><path d="M245.3 281.8 L247.3 284.3 L245.3 287.4" stroke="#fff" stroke-width="1.2" fill="none"/><ellipse cx="249.8" cy="283.9" rx="4.2" ry="2.4" fill="none" stroke="#fff" stroke-width="0.7" stroke-dasharray="1.3 1.6"/><ellipse cx="250.7" cy="284.6" rx="4.2" ry="2.4" fill="#000"/><path d="M253.0 285.0 L255.0 287.5 L253.0 290.6" stroke="#fff" stroke-width="1.2" fill="none"/><ellipse cx="257.5" cy="287.1" rx="4.2" ry="2.4" fill="none" stroke="#fff" stroke-width="0.7" stroke-dasharray="1.3 1.6"/><ellipse cx="258.4" cy="287.8" rx="4.2" ry="2.4" fill="#000"/><path d="M263.4 284.4 L265.4 286.9 L263.4 290.0" stroke="#fff" stroke-width="1.2" fill="none"/><ellipse cx="267.9" cy="286.5" rx="4.2" ry="2.4" fill="none" stroke="#fff" stroke-width="0.7" stroke-dasharray="1.3 1.6"/><ellipse cx="268.8" cy="287.2" rx="4.2" ry="2.4" fill="#000"/><path d="M262.1 280.5 L264.1 283.0 L262.1 286.1" stroke="#fff" stroke-width="1.2" fill="none"/><ellipse cx="266.6" cy="282.6" rx="4.2" ry="2.4" fill="none" stroke="#fff" stroke-width="0.7" stroke-dasharray="1.3 1.6"/><ellipse cx="267.5" cy="283.3" rx="4.2" ry="2.4" fill="#000"/><path d="M291.9 284.4 L293.9 286.9 L291.9 290.0" stroke="#fff" stroke-width="1.2" fill="none"/><ellipse cx="296.4" cy="286.5" rx="4.2" ry="2.4" fill="none" stroke="#fff" stroke-width="0.7" stroke-dasharray="1.3 1.6"/><ellipse cx="297.3" cy="287.2" rx="4.2" ry="2.4" fill="#000"/><path d="M302.2 280.5 L304.2 283.0 L302.2 286.1" stroke="#fff" stroke-width="1.2" fill="none"/><ellipse cx="306.7" cy="282.6" rx="4.2" ry="2.4" fill="none" stroke="#fff" stroke-width="0.7" stroke-dasharray="1.3 1.6"/><ellipse cx="307.6" cy="283.3" rx="4.2" ry="2.4" fill="#000"/><path d="M306.1 285.0 L308.1 287.5 L306.1 290.6" stroke="#fff" stroke-width="1.2" fill="none"/><ellipse cx="310.6" cy="287.1" rx="4.2" ry="2.4" fill="none" stroke="#fff" stroke-width="0.7" stroke-dasharray="1.3 1.6"/><ellipse cx="311.5" cy="287.8" rx="4.2" ry="2.4" fill="#000"/><path d="M328.1 280.5 L330.1 283.0 L328.1 286.1" stroke="#fff" stroke-width="1.2" fill="none"/><ellipse cx="332.6" cy="282.6" rx="4.2" ry="2.4" fill="none" stroke="#fff" stroke-width="0.7" stroke-dasharray="1.3 1.6"/><ellipse cx="333.5" cy="283.3" rx="4.2" ry="2.4" fill="#000"/><path d="M329.4 289.6 L331.4 292.1 L329.4 295.2" stroke="#fff" stroke-width="1.2" fill="none"/><ellipse cx="333.9" cy="291.7" rx="4.2" ry="2.4" fill="none" stroke="#fff" stroke-width="0.7" stroke-dasharray="1.3 1.6"/><ellipse cx="334.8" cy="292.4" rx="4.2" ry="2.4" fill="#000"/><path d="M240.1 291.5 L242.1 294.0 L240.1 297.1" stroke="#fff" stroke-width="1.2" fill="none"/><ellipse cx="244.6" cy="293.6" rx="4.2" ry="2.4" fill="none" stroke="#fff" stroke-width="0.7" stroke-dasharray="1.3 1.6"/><ellipse cx="245.5" cy="294.3" rx="4.2" ry="2.4" fill="#000"/><path d="M234.3 294.7 L236.3 297.2 L234.3 300.3" stroke="#fff" stroke-width="1.2" fill="none"/><ellipse cx="238.8" cy="296.8" rx="4.2" ry="2.4" fill="none" stroke="#fff" stroke-width="0.7" stroke-dasharray="1.3 1.6"/><ellipse cx="239.7" cy="297.5" rx="4.2" ry="2.4" fill="#000"/><path d="M263.4 292.1 L265.4 294.6 L263.4 297.7" stroke="#fff" stroke-width="1.2" fill="none"/><ellipse cx="267.9" cy="294.2" rx="4.2" ry="2.4" fill="none" stroke="#fff" stroke-width="0.7" stroke-dasharray="1.3 1.6"/><ellipse cx="268.8" cy="294.9" rx="4.2" ry="2.4" fill="#000"/><path d="M253.0 297.3 L255.0 299.8 L253.0 302.9" stroke="#fff" stroke-width="1.2" fill="none"/><ellipse cx="257.5" cy="299.4" rx="4.2" ry="2.4" fill="none" stroke="#fff" stroke-width="0.7" stroke-dasharray="1.3 1.6"/><ellipse cx="258.4" cy="300.1" rx="4.2" ry="2.4" fill="#000"/><path d="M271.1 295.4 L273.1 297.9 L271.1 301.0" stroke="#fff" stroke-width="1.2" fill="none"/><ellipse cx="275.6" cy="297.5" rx="4.2" ry="2.4" fill="none" stroke="#fff" stroke-width="0.7" stroke-dasharray="1.3 1.6"/><ellipse cx="276.5" cy="298.2" rx="4.2" ry="2.4" fill="#000"/><path d="M294.4 291.5 L296.4 294.0 L294.4 297.1" stroke="#fff" stroke-width="1.2" fill="none"/><ellipse cx="298.9" cy="293.6" rx="4.2" ry="2.4" fill="none" stroke="#fff" stroke-width="0.7" stroke-dasharray="1.3 1.6"/><ellipse cx="299.8" cy="294.3" rx="4.2" ry="2.4" fill="#000"/><path d="M294.4 287.0 L296.4 289.5 L294.4 292.6" stroke="#fff" stroke-width="1.2" fill="none"/><ellipse cx="298.9" cy="289.1" rx="4.2" ry="2.4" fill="none" stroke="#fff" stroke-width="0.7" stroke-dasharray="1.3 1.6"/><ellipse cx="299.8" cy="289.8" rx="4.2" ry="2.4" fill="#000"/><path d="M308.7 290.9 L310.7 293.4 L308.7 296.5" stroke="#fff" stroke-width="1.2" fill="none"/><ellipse cx="313.2" cy="293.0" rx="4.2" ry="2.4" fill="none" stroke="#fff" stroke-width="0.7" stroke-dasharray="1.3 1.6"/><ellipse cx="314.1" cy="293.7" rx="4.2" ry="2.4" fill="#000"/><path d="M319.0 296.0 L321.0 298.5 L319.0 301.6" stroke="#fff" stroke-width="1.2" fill="none"/><ellipse cx="323.5" cy="298.1" rx="4.2" ry="2.4" fill="none" stroke="#fff" stroke-width="0.7" stroke-dasharray="1.3 1.6"/><ellipse cx="324.4" cy="298.8" rx="4.2" ry="2.4" fill="#000"/><path d="M219.4 292.1 L221.4 294.6 L219.4 297.7" stroke="#fff" stroke-width="1.2" fill="none"/><ellipse cx="223.9" cy="294.2" rx="4.2" ry="2.4" fill="none" stroke="#fff" stroke-width="0.7" stroke-dasharray="1.3 1.6"/><ellipse cx="224.8" cy="294.9" rx="4.2" ry="2.4" fill="#000"/><path d="M220.7 297.3 L222.7 299.8 L220.7 302.9" stroke="#fff" stroke-width="1.2" fill="none"/><ellipse cx="225.2" cy="299.4" rx="4.2" ry="2.4" fill="none" stroke="#fff" stroke-width="0.7" stroke-dasharray="1.3 1.6"/><ellipse cx="226.1" cy="300.1" rx="4.2" ry="2.4" fill="#000"/><path d="M237.5 299.9 L239.5 302.4 L237.5 305.5" stroke="#fff" stroke-width="1.2" fill="none"/><ellipse cx="242.0" cy="302.0" rx="4.2" ry="2.4" fill="none" stroke="#fff" stroke-width="0.7" stroke-dasharray="1.3 1.6"/><ellipse cx="242.9" cy="302.7" rx="4.2" ry="2.4" fill="#000"/><path d="M244.0 302.5 L246.0 305.0 L244.0 308.1" stroke="#fff" stroke-width="1.2" fill="none"/><ellipse cx="248.5" cy="304.6" rx="4.2" ry="2.4" fill="none" stroke="#fff" stroke-width="0.7" stroke-dasharray="1.3 1.6"/><ellipse cx="249.4" cy="305.3" rx="4.2" ry="2.4" fill="#000"/><path d="M263.4 298.0 L265.4 300.5 L263.4 303.6" stroke="#fff" stroke-width="1.2" fill="none"/><ellipse cx="267.9" cy="300.1" rx="4.2" ry="2.4" fill="none" stroke="#fff" stroke-width="0.7" stroke-dasharray="1.3 1.6"/><ellipse cx="268.8" cy="300.8" rx="4.2" ry="2.4" fill="#000"/><path d="M271.1 299.9 L273.1 302.4 L271.1 305.5" stroke="#fff" stroke-width="1.2" fill="none"/><ellipse cx="275.6" cy="302.0" rx="4.2" ry="2.4" fill="none" stroke="#fff" stroke-width="0.7" stroke-dasharray="1.3 1.6"/><ellipse cx="276.5" cy="302.7" rx="4.2" ry="2.4" fill="#000"/><path d="M290.6 302.5 L292.6 305.0 L290.6 308.1" stroke="#fff" stroke-width="1.2" fill="none"/><ellipse cx="295.1" cy="304.6" rx="4.2" ry="2.4" fill="none" stroke="#fff" stroke-width="0.7" stroke-dasharray="1.3 1.6"/><ellipse cx="296.0" cy="305.3" rx="4.2" ry="2.4" fill="#000"/><path d="M307.4 303.1 L309.4 305.6 L307.4 308.7" stroke="#fff" stroke-width="1.2" fill="none"/><ellipse cx="311.9" cy="305.2" rx="4.2" ry="2.4" fill="none" stroke="#fff" stroke-width="0.7" stroke-dasharray="1.3 1.6"/><ellipse cx="312.8" cy="305.9" rx="4.2" ry="2.4" fill="#000"/><path d="M319.0 301.2 L321.0 303.7 L319.0 306.8" stroke="#fff" stroke-width="1.2" fill="none"/><ellipse cx="323.5" cy="303.3" rx="4.2" ry="2.4" fill="none" stroke="#fff" stroke-width="0.7" stroke-dasharray="1.3 1.6"/><ellipse cx="324.4" cy="304.0" rx="4.2" ry="2.4" fill="#000"/><path d="M228.4 305.7 L230.4 308.2 L228.4 311.3" stroke="#fff" stroke-width="1.2" fill="none"/><ellipse cx="232.9" cy="307.8" rx="4.2" ry="2.4" fill="none" stroke="#fff" stroke-width="0.7" stroke-dasharray="1.3 1.6"/><ellipse cx="233.8" cy="308.5" rx="4.2" ry="2.4" fill="#000"/><path d="M254.3 305.7 L256.3 308.2 L254.3 311.3" stroke="#fff" stroke-width="1.2" fill="none"/><ellipse cx="258.8" cy="307.8" rx="4.2" ry="2.4" fill="none" stroke="#fff" stroke-width="0.7" stroke-dasharray="1.3 1.6"/><ellipse cx="259.7" cy="308.5" rx="4.2" ry="2.4" fill="#000"/><path d="M266.0 308.3 L268.0 310.8 L266.0 313.9" stroke="#fff" stroke-width="1.2" fill="none"/><ellipse cx="270.5" cy="310.4" rx="4.2" ry="2.4" fill="none" stroke="#fff" stroke-width="0.7" stroke-dasharray="1.3 1.6"/><ellipse cx="271.4" cy="311.1" rx="4.2" ry="2.4" fill="#000"/><path d="M275.0 306.4 L277.0 308.9 L275.0 312.0" stroke="#fff" stroke-width="1.2" fill="none"/><ellipse cx="279.5" cy="308.5" rx="4.2" ry="2.4" fill="none" stroke="#fff" stroke-width="0.7" stroke-dasharray="1.3 1.6"/><ellipse cx="280.4" cy="309.2" rx="4.2" ry="2.4" fill="#000"/><path d="M284.1 308.3 L286.1 310.8 L284.1 313.9" stroke="#fff" stroke-width="1.2" fill="none"/><ellipse cx="288.6" cy="310.4" rx="4.2" ry="2.4" fill="none" stroke="#fff" stroke-width="0.7" stroke-dasharray="1.3 1.6"/><ellipse cx="289.5" cy="311.1" rx="4.2" ry="2.4" fill="#000"/><path d="M294.4 308.3 L296.4 310.8 L294.4 313.9" stroke="#fff" stroke-width="1.2" fill="none"/><ellipse cx="298.9" cy="310.4" rx="4.2" ry="2.4" fill="none" stroke="#fff" stroke-width="0.7" stroke-dasharray="1.3 1.6"/><ellipse cx="299.8" cy="311.1" rx="4.2" ry="2.4" fill="#000"/><path d="M234.9 309.0 L236.9 311.5 L234.9 314.6" stroke="#fff" stroke-width="1.2" fill="none"/><ellipse cx="239.4" cy="311.1" rx="4.2" ry="2.4" fill="none" stroke="#fff" stroke-width="0.7" stroke-dasharray="1.3 1.6"/><ellipse cx="240.3" cy="311.8" rx="4.2" ry="2.4" fill="#000"/><path d="M223.3 311.6 L225.3 314.1 L223.3 317.2" stroke="#fff" stroke-width="1.2" fill="none"/><ellipse cx="227.8" cy="313.7" rx="4.2" ry="2.4" fill="none" stroke="#fff" stroke-width="0.7" stroke-dasharray="1.3 1.6"/><ellipse cx="228.7" cy="314.4" rx="4.2" ry="2.4" fill="#000"/><path d="M234.9 313.5 L236.9 316.0 L234.9 319.1" stroke="#fff" stroke-width="1.2" fill="none"/><ellipse cx="239.4" cy="315.6" rx="4.2" ry="2.4" fill="none" stroke="#fff" stroke-width="0.7" stroke-dasharray="1.3 1.6"/><ellipse cx="240.3" cy="316.3" rx="4.2" ry="2.4" fill="#000"/><path d="M256.9 313.5 L258.9 316.0 L256.9 319.1" stroke="#fff" stroke-width="1.2" fill="none"/><ellipse cx="261.4" cy="315.6" rx="4.2" ry="2.4" fill="none" stroke="#fff" stroke-width="0.7" stroke-dasharray="1.3 1.6"/><ellipse cx="262.3" cy="316.3" rx="4.2" ry="2.4" fill="#000"/><path d="M271.1 312.9 L273.1 315.4 L271.1 318.5" stroke="#fff" stroke-width="1.2" fill="none"/><ellipse cx="275.6" cy="315.0" rx="4.2" ry="2.4" fill="none" stroke="#fff" stroke-width="0.7" stroke-dasharray="1.3 1.6"/><ellipse cx="276.5" cy="315.7" rx="4.2" ry="2.4" fill="#000"/><path d="M280.2 310.9 L282.2 313.4 L280.2 316.5" stroke="#fff" stroke-width="1.2" fill="none"/><ellipse cx="284.7" cy="313.0" rx="4.2" ry="2.4" fill="none" stroke="#fff" stroke-width="0.7" stroke-dasharray="1.3 1.6"/><ellipse cx="285.6" cy="313.7" rx="4.2" ry="2.4" fill="#000"/><path d="M313.9 312.9 L315.9 315.4 L313.9 318.5" stroke="#fff" stroke-width="1.2" fill="none"/><ellipse cx="318.4" cy="315.0" rx="4.2" ry="2.4" fill="none" stroke="#fff" stroke-width="0.7" stroke-dasharray="1.3 1.6"/><ellipse cx="319.3" cy="315.7" rx="4.2" ry="2.4" fill="#000"/><path d="M293.2 314.8 L295.2 317.3 L293.2 320.4" stroke="#fff" stroke-width="1.2" fill="none"/><ellipse cx="297.7" cy="316.9" rx="4.2" ry="2.4" fill="none" stroke="#fff" stroke-width="0.7" stroke-dasharray="1.3 1.6"/><ellipse cx="298.6" cy="317.6" rx="4.2" ry="2.4" fill="#000"/><path d="M328.1 314.8 L330.1 317.3 L328.1 320.4" stroke="#fff" stroke-width="1.2" fill="none"/><ellipse cx="332.6" cy="316.9" rx="4.2" ry="2.4" fill="none" stroke="#fff" stroke-width="0.7" stroke-dasharray="1.3 1.6"/><ellipse cx="333.5" cy="317.6" rx="4.2" ry="2.4" fill="#000"/><path d="M220.7 318.0 L222.7 320.5 L220.7 323.6" stroke="#fff" stroke-width="1.2" fill="none"/><ellipse cx="225.2" cy="320.1" rx="4.2" ry="2.4" fill="none" stroke="#fff" stroke-width="0.7" stroke-dasharray="1.3 1.6"/><ellipse cx="226.1" cy="320.8" rx="4.2" ry="2.4" fill="#000"/><path d="M237.5 318.0 L239.5 320.5 L237.5 323.6" stroke="#fff" stroke-width="1.2" fill="none"/><ellipse cx="242.0" cy="320.1" rx="4.2" ry="2.4" fill="none" stroke="#fff" stroke-width="0.7" stroke-dasharray="1.3 1.6"/><ellipse cx="242.9" cy="320.8" rx="4.2" ry="2.4" fill="#000"/><path d="M240.1 321.9 L242.1 324.4 L240.1 327.5" stroke="#fff" stroke-width="1.2" fill="none"/><ellipse cx="244.6" cy="324.0" rx="4.2" ry="2.4" fill="none" stroke="#fff" stroke-width="0.7" stroke-dasharray="1.3 1.6"/><ellipse cx="245.5" cy="324.7" rx="4.2" ry="2.4" fill="#000"/><path d="M254.3 316.1 L256.3 318.6 L254.3 321.7" stroke="#fff" stroke-width="1.2" fill="none"/><ellipse cx="258.8" cy="318.2" rx="4.2" ry="2.4" fill="none" stroke="#fff" stroke-width="0.7" stroke-dasharray="1.3 1.6"/><ellipse cx="259.7" cy="318.9" rx="4.2" ry="2.4" fill="#000"/><path d="M281.5 316.7 L283.5 319.2 L281.5 322.3" stroke="#fff" stroke-width="1.2" fill="none"/><ellipse cx="286.0" cy="318.8" rx="4.2" ry="2.4" fill="none" stroke="#fff" stroke-width="0.7" stroke-dasharray="1.3 1.6"/><ellipse cx="286.9" cy="319.5" rx="4.2" ry="2.4" fill="#000"/><path d="M282.8 323.2 L284.8 325.7 L282.8 328.8" stroke="#fff" stroke-width="1.2" fill="none"/><ellipse cx="287.3" cy="325.3" rx="4.2" ry="2.4" fill="none" stroke="#fff" stroke-width="0.7" stroke-dasharray="1.3 1.6"/><ellipse cx="288.2" cy="326.0" rx="4.2" ry="2.4" fill="#000"/><path d="M225.8 323.9 L227.8 326.4 L225.8 329.5" stroke="#fff" stroke-width="1.2" fill="none"/><ellipse cx="230.3" cy="326.0" rx="4.2" ry="2.4" fill="none" stroke="#fff" stroke-width="0.7" stroke-dasharray="1.3 1.6"/><ellipse cx="231.2" cy="326.7" rx="4.2" ry="2.4" fill="#000"/><path d="M255.6 325.2 L257.6 327.7 L255.6 330.8" stroke="#fff" stroke-width="1.2" fill="none"/><ellipse cx="260.1" cy="327.3" rx="4.2" ry="2.4" fill="none" stroke="#fff" stroke-width="0.7" stroke-dasharray="1.3 1.6"/><ellipse cx="261.0" cy="328.0" rx="4.2" ry="2.4" fill="#000"/><path d="M291.9 326.4 L293.9 328.9 L291.9 332.0" stroke="#fff" stroke-width="1.2" fill="none"/><ellipse cx="296.4" cy="328.5" rx="4.2" ry="2.4" fill="none" stroke="#fff" stroke-width="0.7" stroke-dasharray="1.3 1.6"/><ellipse cx="297.3" cy="329.2" rx="4.2" ry="2.4" fill="#000"/><path d="M304.8 329.0 L306.8 331.5 L304.8 334.6" stroke="#fff" stroke-width="1.2" fill="none"/><ellipse cx="309.3" cy="331.1" rx="4.2" ry="2.4" fill="none" stroke="#fff" stroke-width="0.7" stroke-dasharray="1.3 1.6"/><ellipse cx="310.2" cy="331.8" rx="4.2" ry="2.4" fill="#000"/><path d="M227.1 328.4 L229.1 330.9 L227.1 334.0" stroke="#fff" stroke-width="1.2" fill="none"/><ellipse cx="231.6" cy="330.5" rx="4.2" ry="2.4" fill="none" stroke="#fff" stroke-width="0.7" stroke-dasharray="1.3 1.6"/><ellipse cx="232.5" cy="331.2" rx="4.2" ry="2.4" fill="#000"/><path d="M244.0 329.0 L246.0 331.5 L244.0 334.6" stroke="#fff" stroke-width="1.2" fill="none"/><ellipse cx="248.5" cy="331.1" rx="4.2" ry="2.4" fill="none" stroke="#fff" stroke-width="0.7" stroke-dasharray="1.3 1.6"/><ellipse cx="249.4" cy="331.8" rx="4.2" ry="2.4" fill="#000"/><path d="M231.0 333.6 L233.0 336.1 L231.0 339.2" stroke="#fff" stroke-width="1.2" fill="none"/><ellipse cx="235.5" cy="335.7" rx="4.2" ry="2.4" fill="none" stroke="#fff" stroke-width="0.7" stroke-dasharray="1.3 1.6"/><ellipse cx="236.4" cy="336.4" rx="4.2" ry="2.4" fill="#000"/><path d="M238.8 334.2 L240.8 336.7 L238.8 339.8" stroke="#fff" stroke-width="1.2" fill="none"/><ellipse cx="243.3" cy="336.3" rx="4.2" ry="2.4" fill="none" stroke="#fff" stroke-width="0.7" stroke-dasharray="1.3 1.6"/><ellipse cx="244.2" cy="337.0" rx="4.2" ry="2.4" fill="#000"/><path d="M264.7 335.5 L266.7 338.0 L264.7 341.1" stroke="#fff" stroke-width="1.2" fill="none"/><ellipse cx="269.2" cy="337.6" rx="4.2" ry="2.4" fill="none" stroke="#fff" stroke-width="0.7" stroke-dasharray="1.3 1.6"/><ellipse cx="270.1" cy="338.3" rx="4.2" ry="2.4" fill="#000"/><path d="M276.3 338.1 L278.3 340.6 L276.3 343.7" stroke="#fff" stroke-width="1.2" fill="none"/><ellipse cx="280.8" cy="340.2" rx="4.2" ry="2.4" fill="none" stroke="#fff" stroke-width="0.7" stroke-dasharray="1.3 1.6"/><ellipse cx="281.7" cy="340.9" rx="4.2" ry="2.4" fill="#000"/><path d="M297.0 336.8 L299.0 339.3 L297.0 342.4" stroke="#fff" stroke-width="1.2" fill="none"/><ellipse cx="301.5" cy="338.9" rx="4.2" ry="2.4" fill="none" stroke="#fff" stroke-width="0.7" stroke-dasharray="1.3 1.6"/><ellipse cx="302.4" cy="339.6" rx="4.2" ry="2.4" fill="#000"/><path d="M325.5 338.7 L327.5 341.2 L325.5 344.3" stroke="#fff" stroke-width="1.2" fill="none"/><ellipse cx="330.0" cy="340.8" rx="4.2" ry="2.4" fill="none" stroke="#fff" stroke-width="0.7" stroke-dasharray="1.3 1.6"/><ellipse cx="330.9" cy="341.5" rx="4.2" ry="2.4" fill="#000"/><path d="M228.4 342.6 L230.4 345.1 L228.4 348.2" stroke="#fff" stroke-width="1.2" fill="none"/><ellipse cx="232.9" cy="344.7" rx="4.2" ry="2.4" fill="none" stroke="#fff" stroke-width="0.7" stroke-dasharray="1.3 1.6"/><ellipse cx="233.8" cy="345.4" rx="4.2" ry="2.4" fill="#000"/><path d="M234.9 341.3 L236.9 343.8 L234.9 346.9" stroke="#fff" stroke-width="1.2" fill="none"/><ellipse cx="239.4" cy="343.4" rx="4.2" ry="2.4" fill="none" stroke="#fff" stroke-width="0.7" stroke-dasharray="1.3 1.6"/><ellipse cx="240.3" cy="344.1" rx="4.2" ry="2.4" fill="#000"/><path d="M242.7 340.7 L244.7 343.2 L242.7 346.3" stroke="#fff" stroke-width="1.2" fill="none"/><ellipse cx="247.2" cy="342.8" rx="4.2" ry="2.4" fill="none" stroke="#fff" stroke-width="0.7" stroke-dasharray="1.3 1.6"/><ellipse cx="248.1" cy="343.5" rx="4.2" ry="2.4" fill="#000"/><path d="M250.4 341.3 L252.4 343.8 L250.4 346.9" stroke="#fff" stroke-width="1.2" fill="none"/><ellipse cx="254.9" cy="343.4" rx="4.2" ry="2.4" fill="none" stroke="#fff" stroke-width="0.7" stroke-dasharray="1.3 1.6"/><ellipse cx="255.8" cy="344.1" rx="4.2" ry="2.4" fill="#000"/><path d="M262.1 342.6 L264.1 345.1 L262.1 348.2" stroke="#fff" stroke-width="1.2" fill="none"/><ellipse cx="266.6" cy="344.7" rx="4.2" ry="2.4" fill="none" stroke="#fff" stroke-width="0.7" stroke-dasharray="1.3 1.6"/><ellipse cx="267.5" cy="345.4" rx="4.2" ry="2.4" fill="#000"/><path d="M284.1 342.6 L286.1 345.1 L284.1 348.2" stroke="#fff" stroke-width="1.2" fill="none"/><ellipse cx="288.6" cy="344.7" rx="4.2" ry="2.4" fill="none" stroke="#fff" stroke-width="0.7" stroke-dasharray="1.3 1.6"/><ellipse cx="289.5" cy="345.4" rx="4.2" ry="2.4" fill="#000"/><path d="M297.0 345.9 L299.0 348.4 L297.0 351.5" stroke="#fff" stroke-width="1.2" fill="none"/><ellipse cx="301.5" cy="348.0" rx="4.2" ry="2.4" fill="none" stroke="#fff" stroke-width="0.7" stroke-dasharray="1.3 1.6"/><ellipse cx="302.4" cy="348.7" rx="4.2" ry="2.4" fill="#000"/><path d="M307.4 343.3 L309.4 345.8 L307.4 348.9" stroke="#fff" stroke-width="1.2" fill="none"/><ellipse cx="311.9" cy="345.4" rx="4.2" ry="2.4" fill="none" stroke="#fff" stroke-width="0.7" stroke-dasharray="1.3 1.6"/><ellipse cx="312.8" cy="346.1" rx="4.2" ry="2.4" fill="#000"/><path d="M324.2 342.6 L326.2 345.1 L324.2 348.2" stroke="#fff" stroke-width="1.2" fill="none"/><ellipse cx="328.7" cy="344.7" rx="4.2" ry="2.4" fill="none" stroke="#fff" stroke-width="0.7" stroke-dasharray="1.3 1.6"/><ellipse cx="329.6" cy="345.4" rx="4.2" ry="2.4" fill="#000"/><path d="M229.7 346.5 L231.7 349.0 L229.7 352.1" stroke="#fff" stroke-width="1.2" fill="none"/><ellipse cx="234.2" cy="348.6" rx="4.2" ry="2.4" fill="none" stroke="#fff" stroke-width="0.7" stroke-dasharray="1.3 1.6"/><ellipse cx="235.1" cy="349.3" rx="4.2" ry="2.4" fill="#000"/><path d="M244.0 346.5 L246.0 349.0 L244.0 352.1" stroke="#fff" stroke-width="1.2" fill="none"/><ellipse cx="248.5" cy="348.6" rx="4.2" ry="2.4" fill="none" stroke="#fff" stroke-width="0.7" stroke-dasharray="1.3 1.6"/><ellipse cx="249.4" cy="349.3" rx="4.2" ry="2.4" fill="#000"/><path d="M251.7 347.2 L253.7 349.7 L251.7 352.8" stroke="#fff" stroke-width="1.2" fill="none"/><ellipse cx="256.2" cy="349.3" rx="4.2" ry="2.4" fill="none" stroke="#fff" stroke-width="0.7" stroke-dasharray="1.3 1.6"/><ellipse cx="257.1" cy="350.0" rx="4.2" ry="2.4" fill="#000"/><path d="M278.9 343.9 L280.9 346.4 L278.9 349.5" stroke="#fff" stroke-width="1.2" fill="none"/><ellipse cx="283.4" cy="346.0" rx="4.2" ry="2.4" fill="none" stroke="#fff" stroke-width="0.7" stroke-dasharray="1.3 1.6"/><ellipse cx="284.3" cy="346.7" rx="4.2" ry="2.4" fill="#000"/><path d="M237.5 350.4 L239.5 352.9 L237.5 356.0" stroke="#fff" stroke-width="1.2" fill="none"/><ellipse cx="242.0" cy="352.5" rx="4.2" ry="2.4" fill="none" stroke="#fff" stroke-width="0.7" stroke-dasharray="1.3 1.6"/><ellipse cx="242.9" cy="353.2" rx="4.2" ry="2.4" fill="#000"/><path d="M246.6 351.7 L248.6 354.2 L246.6 357.3" stroke="#fff" stroke-width="1.2" fill="none"/><ellipse cx="251.1" cy="353.8" rx="4.2" ry="2.4" fill="none" stroke="#fff" stroke-width="0.7" stroke-dasharray="1.3 1.6"/><ellipse cx="252.0" cy="354.5" rx="4.2" ry="2.4" fill="#000"/><path d="M264.7 353.6 L266.7 356.1 L264.7 359.2" stroke="#fff" stroke-width="1.2" fill="none"/><ellipse cx="269.2" cy="355.7" rx="4.2" ry="2.4" fill="none" stroke="#fff" stroke-width="0.7" stroke-dasharray="1.3 1.6"/><ellipse cx="270.1" cy="356.4" rx="4.2" ry="2.4" fill="#000"/><path d="M284.1 351.7 L286.1 354.2 L284.1 357.3" stroke="#fff" stroke-width="1.2" fill="none"/><ellipse cx="288.6" cy="353.8" rx="4.2" ry="2.4" fill="none" stroke="#fff" stroke-width="0.7" stroke-dasharray="1.3 1.6"/><ellipse cx="289.5" cy="354.5" rx="4.2" ry="2.4" fill="#000"/><path d="M295.7 353.0 L297.7 355.5 L295.7 358.6" stroke="#fff" stroke-width="1.2" fill="none"/><ellipse cx="300.2" cy="355.1" rx="4.2" ry="2.4" fill="none" stroke="#fff" stroke-width="0.7" stroke-dasharray="1.3 1.6"/><ellipse cx="301.1" cy="355.8" rx="4.2" ry="2.4" fill="#000"/><path d="M303.5 350.4 L305.5 352.9 L303.5 356.0" stroke="#fff" stroke-width="1.2" fill="none"/><ellipse cx="308.0" cy="352.5" rx="4.2" ry="2.4" fill="none" stroke="#fff" stroke-width="0.7" stroke-dasharray="1.3 1.6"/><ellipse cx="308.9" cy="353.2" rx="4.2" ry="2.4" fill="#000"/><path d="M225.8 354.3 L227.8 356.8 L225.8 359.9" stroke="#fff" stroke-width="1.2" fill="none"/><ellipse cx="230.3" cy="356.4" rx="4.2" ry="2.4" fill="none" stroke="#fff" stroke-width="0.7" stroke-dasharray="1.3 1.6"/><ellipse cx="231.2" cy="357.1" rx="4.2" ry="2.4" fill="#000"/><path d="M238.8 354.3 L240.8 356.8 L238.8 359.9" stroke="#fff" stroke-width="1.2" fill="none"/><ellipse cx="243.3" cy="356.4" rx="4.2" ry="2.4" fill="none" stroke="#fff" stroke-width="0.7" stroke-dasharray="1.3 1.6"/><ellipse cx="244.2" cy="357.1" rx="4.2" ry="2.4" fill="#000"/><path d="M250.4 356.9 L252.4 359.4 L250.4 362.5" stroke="#fff" stroke-width="1.2" fill="none"/><ellipse cx="254.9" cy="359.0" rx="4.2" ry="2.4" fill="none" stroke="#fff" stroke-width="0.7" stroke-dasharray="1.3 1.6"/><ellipse cx="255.8" cy="359.7" rx="4.2" ry="2.4" fill="#000"/><path d="M262.1 358.2 L264.1 360.7 L262.1 363.8" stroke="#fff" stroke-width="1.2" fill="none"/><ellipse cx="266.6" cy="360.3" rx="4.2" ry="2.4" fill="none" stroke="#fff" stroke-width="0.7" stroke-dasharray="1.3 1.6"/><ellipse cx="267.5" cy="361.0" rx="4.2" ry="2.4" fill="#000"/><path d="M275.0 356.9 L277.0 359.4 L275.0 362.5" stroke="#fff" stroke-width="1.2" fill="none"/><ellipse cx="279.5" cy="359.0" rx="4.2" ry="2.4" fill="none" stroke="#fff" stroke-width="0.7" stroke-dasharray="1.3 1.6"/><ellipse cx="280.4" cy="359.7" rx="4.2" ry="2.4" fill="#000"/><path d="M289.3 355.6 L291.3 358.1 L289.3 361.2" stroke="#fff" stroke-width="1.2" fill="none"/><ellipse cx="293.8" cy="357.7" rx="4.2" ry="2.4" fill="none" stroke="#fff" stroke-width="0.7" stroke-dasharray="1.3 1.6"/><ellipse cx="294.7" cy="358.4" rx="4.2" ry="2.4" fill="#000"/><path d="M306.1 357.5 L308.1 360.0 L306.1 363.1" stroke="#fff" stroke-width="1.2" fill="none"/><ellipse cx="310.6" cy="359.6" rx="4.2" ry="2.4" fill="none" stroke="#fff" stroke-width="0.7" stroke-dasharray="1.3 1.6"/><ellipse cx="311.5" cy="360.3" rx="4.2" ry="2.4" fill="#000"/><path d="M229.7 359.5 L231.7 362.0 L229.7 365.1" stroke="#fff" stroke-width="1.2" fill="none"/><ellipse cx="234.2" cy="361.6" rx="4.2" ry="2.4" fill="none" stroke="#fff" stroke-width="0.7" stroke-dasharray="1.3 1.6"/><ellipse cx="235.1" cy="362.3" rx="4.2" ry="2.4" fill="#000"/><path d="M233.6 363.3 L235.6 365.8 L233.6 368.9" stroke="#fff" stroke-width="1.2" fill="none"/><ellipse cx="238.1" cy="365.4" rx="4.2" ry="2.4" fill="none" stroke="#fff" stroke-width="0.7" stroke-dasharray="1.3 1.6"/><ellipse cx="239.0" cy="366.1" rx="4.2" ry="2.4" fill="#000"/><path d="M242.7 363.3 L244.7 365.8 L242.7 368.9" stroke="#fff" stroke-width="1.2" fill="none"/><ellipse cx="247.2" cy="365.4" rx="4.2" ry="2.4" fill="none" stroke="#fff" stroke-width="0.7" stroke-dasharray="1.3 1.6"/><ellipse cx="248.1" cy="366.1" rx="4.2" ry="2.4" fill="#000"/><path d="M255.6 362.0 L257.6 364.5 L255.6 367.6" stroke="#fff" stroke-width="1.2" fill="none"/><ellipse cx="260.1" cy="364.1" rx="4.2" ry="2.4" fill="none" stroke="#fff" stroke-width="0.7" stroke-dasharray="1.3 1.6"/><ellipse cx="261.0" cy="364.8" rx="4.2" ry="2.4" fill="#000"/><path d="M266.0 362.0 L268.0 364.5 L266.0 367.6" stroke="#fff" stroke-width="1.2" fill="none"/><ellipse cx="270.5" cy="364.1" rx="4.2" ry="2.4" fill="none" stroke="#fff" stroke-width="0.7" stroke-dasharray="1.3 1.6"/><ellipse cx="271.4" cy="364.8" rx="4.2" ry="2.4" fill="#000"/><path d="M273.7 362.0 L275.7 364.5 L273.7 367.6" stroke="#fff" stroke-width="1.2" fill="none"/><ellipse cx="278.2" cy="364.1" rx="4.2" ry="2.4" fill="none" stroke="#fff" stroke-width="0.7" stroke-dasharray="1.3 1.6"/><ellipse cx="279.1" cy="364.8" rx="4.2" ry="2.4" fill="#000"/><path d="M282.8 362.7 L284.8 365.2 L282.8 368.3" stroke="#fff" stroke-width="1.2" fill="none"/><ellipse cx="287.3" cy="364.8" rx="4.2" ry="2.4" fill="none" stroke="#fff" stroke-width="0.7" stroke-dasharray="1.3 1.6"/><ellipse cx="288.2" cy="365.5" rx="4.2" ry="2.4" fill="#000"/><path d="M294.4 363.3 L296.4 365.8 L294.4 368.9" stroke="#fff" stroke-width="1.2" fill="none"/><ellipse cx="298.9" cy="365.4" rx="4.2" ry="2.4" fill="none" stroke="#fff" stroke-width="0.7" stroke-dasharray="1.3 1.6"/><ellipse cx="299.8" cy="366.1" rx="4.2" ry="2.4" fill="#000"/><path d="M315.2 362.0 L317.2 364.5 L315.2 367.6" stroke="#fff" stroke-width="1.2" fill="none"/><ellipse cx="319.7" cy="364.1" rx="4.2" ry="2.4" fill="none" stroke="#fff" stroke-width="0.7" stroke-dasharray="1.3 1.6"/><ellipse cx="320.6" cy="364.8" rx="4.2" ry="2.4" fill="#000"/><path d="M325.5 364.6 L327.5 367.1 L325.5 370.2" stroke="#fff" stroke-width="1.2" fill="none"/><ellipse cx="330.0" cy="366.7" rx="4.2" ry="2.4" fill="none" stroke="#fff" stroke-width="0.7" stroke-dasharray="1.3 1.6"/><ellipse cx="330.9" cy="367.4" rx="4.2" ry="2.4" fill="#000"/><path d="M223.3 367.2 L225.3 369.7 L223.3 372.8" stroke="#fff" stroke-width="1.2" fill="none"/><ellipse cx="227.8" cy="369.3" rx="4.2" ry="2.4" fill="none" stroke="#fff" stroke-width="0.7" stroke-dasharray="1.3 1.6"/><ellipse cx="228.7" cy="370.0" rx="4.2" ry="2.4" fill="#000"/><path d="M238.8 367.2 L240.8 369.7 L238.8 372.8" stroke="#fff" stroke-width="1.2" fill="none"/><ellipse cx="243.3" cy="369.3" rx="4.2" ry="2.4" fill="none" stroke="#fff" stroke-width="0.7" stroke-dasharray="1.3 1.6"/><ellipse cx="244.2" cy="370.0" rx="4.2" ry="2.4" fill="#000"/><path d="M253.0 368.5 L255.0 371.0 L253.0 374.1" stroke="#fff" stroke-width="1.2" fill="none"/><ellipse cx="257.5" cy="370.6" rx="4.2" ry="2.4" fill="none" stroke="#fff" stroke-width="0.7" stroke-dasharray="1.3 1.6"/><ellipse cx="258.4" cy="371.3" rx="4.2" ry="2.4" fill="#000"/><path d="M278.9 367.9 L280.9 370.4 L278.9 373.5" stroke="#fff" stroke-width="1.2" fill="none"/><ellipse cx="283.4" cy="370.0" rx="4.2" ry="2.4" fill="none" stroke="#fff" stroke-width="0.7" stroke-dasharray="1.3 1.6"/><ellipse cx="284.3" cy="370.7" rx="4.2" ry="2.4" fill="#000"/><path d="M328.1 368.5 L330.1 371.0 L328.1 374.1" stroke="#fff" stroke-width="1.2" fill="none"/><ellipse cx="332.6" cy="370.6" rx="4.2" ry="2.4" fill="none" stroke="#fff" stroke-width="0.7" stroke-dasharray="1.3 1.6"/><ellipse cx="333.5" cy="371.3" rx="4.2" ry="2.4" fill="#000"/><path d="M229.7 370.5 L231.7 373.0 L229.7 376.1" stroke="#fff" stroke-width="1.2" fill="none"/><ellipse cx="234.2" cy="372.6" rx="4.2" ry="2.4" fill="none" stroke="#fff" stroke-width="0.7" stroke-dasharray="1.3 1.6"/><ellipse cx="235.1" cy="373.3" rx="4.2" ry="2.4" fill="#000"/><path d="M244.0 375.6 L246.0 378.1 L244.0 381.2" stroke="#fff" stroke-width="1.2" fill="none"/><ellipse cx="248.5" cy="377.7" rx="4.2" ry="2.4" fill="none" stroke="#fff" stroke-width="0.7" stroke-dasharray="1.3 1.6"/><ellipse cx="249.4" cy="378.4" rx="4.2" ry="2.4" fill="#000"/><path d="M259.5 375.0 L261.5 377.5 L259.5 380.6" stroke="#fff" stroke-width="1.2" fill="none"/><ellipse cx="264.0" cy="377.1" rx="4.2" ry="2.4" fill="none" stroke="#fff" stroke-width="0.7" stroke-dasharray="1.3 1.6"/><ellipse cx="264.9" cy="377.8" rx="4.2" ry="2.4" fill="#000"/><path d="M284.1 375.0 L286.1 377.5 L284.1 380.6" stroke="#fff" stroke-width="1.2" fill="none"/><ellipse cx="288.6" cy="377.1" rx="4.2" ry="2.4" fill="none" stroke="#fff" stroke-width="0.7" stroke-dasharray="1.3 1.6"/><ellipse cx="289.5" cy="377.8" rx="4.2" ry="2.4" fill="#000"/><path d="M299.6 376.3 L301.6 378.8 L299.6 381.9" stroke="#fff" stroke-width="1.2" fill="none"/><ellipse cx="304.1" cy="378.4" rx="4.2" ry="2.4" fill="none" stroke="#fff" stroke-width="0.7" stroke-dasharray="1.3 1.6"/><ellipse cx="305.0" cy="379.1" rx="4.2" ry="2.4" fill="#000"/><path d="M315.2 375.6 L317.2 378.1 L315.2 381.2" stroke="#fff" stroke-width="1.2" fill="none"/><ellipse cx="319.7" cy="377.7" rx="4.2" ry="2.4" fill="none" stroke="#fff" stroke-width="0.7" stroke-dasharray="1.3 1.6"/><ellipse cx="320.6" cy="378.4" rx="4.2" ry="2.4" fill="#000"/><path d="M240.1 378.9 L242.1 381.4 L240.1 384.5" stroke="#fff" stroke-width="1.2" fill="none"/><ellipse cx="244.6" cy="381.0" rx="4.2" ry="2.4" fill="none" stroke="#fff" stroke-width="0.7" stroke-dasharray="1.3 1.6"/><ellipse cx="245.5" cy="381.7" rx="4.2" ry="2.4" fill="#000"/><path d="M268.6 380.2 L270.6 382.7 L268.6 385.8" stroke="#fff" stroke-width="1.2" fill="none"/><ellipse cx="273.1" cy="382.3" rx="4.2" ry="2.4" fill="none" stroke="#fff" stroke-width="0.7" stroke-dasharray="1.3 1.6"/><ellipse cx="274.0" cy="383.0" rx="4.2" ry="2.4" fill="#000"/><path d="M229.7 382.1 L231.7 384.6 L229.7 387.7" stroke="#fff" stroke-width="1.2" fill="none"/><ellipse cx="234.2" cy="384.2" rx="4.2" ry="2.4" fill="none" stroke="#fff" stroke-width="0.7" stroke-dasharray="1.3 1.6"/><ellipse cx="235.1" cy="384.9" rx="4.2" ry="2.4" fill="#000"/><path d="M250.4 382.8 L252.4 385.3 L250.4 388.4" stroke="#fff" stroke-width="1.2" fill="none"/><ellipse cx="254.9" cy="384.9" rx="4.2" ry="2.4" fill="none" stroke="#fff" stroke-width="0.7" stroke-dasharray="1.3 1.6"/><ellipse cx="255.8" cy="385.6" rx="4.2" ry="2.4" fill="#000"/><path d="M237.5 382.1 L239.5 384.6 L237.5 387.7" stroke="#fff" stroke-width="1.2" fill="none"/><ellipse cx="242.0" cy="384.2" rx="4.2" ry="2.4" fill="none" stroke="#fff" stroke-width="0.7" stroke-dasharray="1.3 1.6"/><ellipse cx="242.9" cy="384.9" rx="4.2" ry="2.4" fill="#000"/><path d="M289.3 382.8 L291.3 385.3 L289.3 388.4" stroke="#fff" stroke-width="1.2" fill="none"/><ellipse cx="293.8" cy="384.9" rx="4.2" ry="2.4" fill="none" stroke="#fff" stroke-width="0.7" stroke-dasharray="1.3 1.6"/><ellipse cx="294.7" cy="385.6" rx="4.2" ry="2.4" fill="#000"/><path d="M295.7 382.1 L297.7 384.6 L295.7 387.7" stroke="#fff" stroke-width="1.2" fill="none"/><ellipse cx="300.2" cy="384.2" rx="4.2" ry="2.4" fill="none" stroke="#fff" stroke-width="0.7" stroke-dasharray="1.3 1.6"/><ellipse cx="301.1" cy="384.9" rx="4.2" ry="2.4" fill="#000"/><path d="M245.3 384.1 L247.3 386.6 L245.3 389.7" stroke="#fff" stroke-width="1.2" fill="none"/><ellipse cx="249.8" cy="386.2" rx="4.2" ry="2.4" fill="none" stroke="#fff" stroke-width="0.7" stroke-dasharray="1.3 1.6"/><ellipse cx="250.7" cy="386.9" rx="4.2" ry="2.4" fill="#000"/><path d="M259.5 383.4 L261.5 385.9 L259.5 389.0" stroke="#fff" stroke-width="1.2" fill="none"/><ellipse cx="264.0" cy="385.5" rx="4.2" ry="2.4" fill="none" stroke="#fff" stroke-width="0.7" stroke-dasharray="1.3 1.6"/><ellipse cx="264.9" cy="386.2" rx="4.2" ry="2.4" fill="#000"/><path d="M220.7 385.3 L222.7 387.8 L220.7 390.9" stroke="#fff" stroke-width="1.2" fill="none"/><ellipse cx="225.2" cy="387.4" rx="4.2" ry="2.4" fill="none" stroke="#fff" stroke-width="0.7" stroke-dasharray="1.3 1.6"/><ellipse cx="226.1" cy="388.1" rx="4.2" ry="2.4" fill="#000"/><path d="M276.3 382.8 L278.3 385.3 L276.3 388.4" stroke="#fff" stroke-width="1.2" fill="none"/><ellipse cx="280.8" cy="384.9" rx="4.2" ry="2.4" fill="none" stroke="#fff" stroke-width="0.7" stroke-dasharray="1.3 1.6"/><ellipse cx="281.7" cy="385.6" rx="4.2" ry="2.4" fill="#000"/><path d="M229.7 389.9 L231.7 392.4 L229.7 395.5" stroke="#fff" stroke-width="1.2" fill="none"/><ellipse cx="234.2" cy="392.0" rx="4.2" ry="2.4" fill="none" stroke="#fff" stroke-width="0.7" stroke-dasharray="1.3 1.6"/><ellipse cx="235.1" cy="392.7" rx="4.2" ry="2.4" fill="#000"/><path d="M244.0 389.2 L246.0 391.7 L244.0 394.8" stroke="#fff" stroke-width="1.2" fill="none"/><ellipse cx="248.5" cy="391.3" rx="4.2" ry="2.4" fill="none" stroke="#fff" stroke-width="0.7" stroke-dasharray="1.3 1.6"/><ellipse cx="249.4" cy="392.0" rx="4.2" ry="2.4" fill="#000"/><path d="M255.6 389.9 L257.6 392.4 L255.6 395.5" stroke="#fff" stroke-width="1.2" fill="none"/><ellipse cx="260.1" cy="392.0" rx="4.2" ry="2.4" fill="none" stroke="#fff" stroke-width="0.7" stroke-dasharray="1.3 1.6"/><ellipse cx="261.0" cy="392.7" rx="4.2" ry="2.4" fill="#000"/><path d="M285.4 388.6 L287.4 391.1 L285.4 394.2" stroke="#fff" stroke-width="1.2" fill="none"/><ellipse cx="289.9" cy="390.7" rx="4.2" ry="2.4" fill="none" stroke="#fff" stroke-width="0.7" stroke-dasharray="1.3 1.6"/><ellipse cx="290.8" cy="391.4" rx="4.2" ry="2.4" fill="#000"/><path d="M326.8 386.6 L328.8 389.1 L326.8 392.2" stroke="#fff" stroke-width="1.2" fill="none"/><ellipse cx="331.3" cy="388.7" rx="4.2" ry="2.4" fill="none" stroke="#fff" stroke-width="0.7" stroke-dasharray="1.3 1.6"/><ellipse cx="332.2" cy="389.4" rx="4.2" ry="2.4" fill="#000"/><path d="M237.5 393.1 L239.5 395.6 L237.5 398.7" stroke="#fff" stroke-width="1.2" fill="none"/><ellipse cx="242.0" cy="395.2" rx="4.2" ry="2.4" fill="none" stroke="#fff" stroke-width="0.7" stroke-dasharray="1.3 1.6"/><ellipse cx="242.9" cy="395.9" rx="4.2" ry="2.4" fill="#000"/><path d="M266.0 393.8 L268.0 396.3 L266.0 399.4" stroke="#fff" stroke-width="1.2" fill="none"/><ellipse cx="270.5" cy="395.9" rx="4.2" ry="2.4" fill="none" stroke="#fff" stroke-width="0.7" stroke-dasharray="1.3 1.6"/><ellipse cx="271.4" cy="396.6" rx="4.2" ry="2.4" fill="#000"/><path d="M276.3 393.1 L278.3 395.6 L276.3 398.7" stroke="#fff" stroke-width="1.2" fill="none"/><ellipse cx="280.8" cy="395.2" rx="4.2" ry="2.4" fill="none" stroke="#fff" stroke-width="0.7" stroke-dasharray="1.3 1.6"/><ellipse cx="281.7" cy="395.9" rx="4.2" ry="2.4" fill="#000"/><path d="M302.2 393.8 L304.2 396.3 L302.2 399.4" stroke="#fff" stroke-width="1.2" fill="none"/><ellipse cx="306.7" cy="395.9" rx="4.2" ry="2.4" fill="none" stroke="#fff" stroke-width="0.7" stroke-dasharray="1.3 1.6"/><ellipse cx="307.6" cy="396.6" rx="4.2" ry="2.4" fill="#000"/><path d="M307.4 393.1 L309.4 395.6 L307.4 398.7" stroke="#fff" stroke-width="1.2" fill="none"/><ellipse cx="311.9" cy="395.2" rx="4.2" ry="2.4" fill="none" stroke="#fff" stroke-width="0.7" stroke-dasharray="1.3 1.6"/><ellipse cx="312.8" cy="395.9" rx="4.2" ry="2.4" fill="#000"/><path d="M325.5 393.1 L327.5 395.6 L325.5 398.7" stroke="#fff" stroke-width="1.2" fill="none"/><ellipse cx="330.0" cy="395.2" rx="4.2" ry="2.4" fill="none" stroke="#fff" stroke-width="0.7" stroke-dasharray="1.3 1.6"/><ellipse cx="330.9" cy="395.9" rx="4.2" ry="2.4" fill="#000"/><path d="M224.5 397.0 L226.5 399.5 L224.5 402.6" stroke="#fff" stroke-width="1.2" fill="none"/><ellipse cx="229.0" cy="399.1" rx="4.2" ry="2.4" fill="none" stroke="#fff" stroke-width="0.7" stroke-dasharray="1.3 1.6"/><ellipse cx="229.9" cy="399.8" rx="4.2" ry="2.4" fill="#000"/><path d="M254.3 397.6 L256.3 400.1 L254.3 403.2" stroke="#fff" stroke-width="1.2" fill="none"/><ellipse cx="258.8" cy="399.7" rx="4.2" ry="2.4" fill="none" stroke="#fff" stroke-width="0.7" stroke-dasharray="1.3 1.6"/><ellipse cx="259.7" cy="400.4" rx="4.2" ry="2.4" fill="#000"/><path d="M334.2 285.0 L336.2 287.5 L334.2 290.6" stroke="#fff" stroke-width="1.2" fill="none"/><ellipse cx="338.7" cy="287.1" rx="4.2" ry="2.4" fill="none" stroke="#fff" stroke-width="0.7" stroke-dasharray="1.3 1.6"/><ellipse cx="339.6" cy="287.8" rx="4.2" ry="2.4" fill="#000"/><path d="M364.6 283.7 L366.6 286.2 L364.6 289.3" stroke="#fff" stroke-width="1.2" fill="none"/><ellipse cx="369.1" cy="285.8" rx="4.2" ry="2.4" fill="none" stroke="#fff" stroke-width="0.7" stroke-dasharray="1.3 1.6"/><ellipse cx="370.0" cy="286.5" rx="4.2" ry="2.4" fill="#000"/><path d="M350.4 295.8 L352.4 298.3 L350.4 301.4" stroke="#fff" stroke-width="1.2" fill="none"/><ellipse cx="354.9" cy="297.9" rx="4.2" ry="2.4" fill="none" stroke="#fff" stroke-width="0.7" stroke-dasharray="1.3 1.6"/><ellipse cx="355.8" cy="298.6" rx="4.2" ry="2.4" fill="#000"/><path d="M380.1 298.0 L382.1 300.5 L380.1 303.6" stroke="#fff" stroke-width="1.2" fill="none"/><ellipse cx="384.6" cy="300.1" rx="4.2" ry="2.4" fill="none" stroke="#fff" stroke-width="0.7" stroke-dasharray="1.3 1.6"/><ellipse cx="385.5" cy="300.8" rx="4.2" ry="2.4" fill="#000"/><path d="M392.4 304.8 L394.4 307.3 L392.4 310.4" stroke="#fff" stroke-width="1.2" fill="none"/><ellipse cx="396.9" cy="306.9" rx="4.2" ry="2.4" fill="none" stroke="#fff" stroke-width="0.7" stroke-dasharray="1.3 1.6"/><ellipse cx="397.8" cy="307.6" rx="4.2" ry="2.4" fill="#000"/><path d="M400.2 307.9 L402.2 310.4 L400.2 313.5" stroke="#fff" stroke-width="1.2" fill="none"/><ellipse cx="404.7" cy="310.0" rx="4.2" ry="2.4" fill="none" stroke="#fff" stroke-width="0.7" stroke-dasharray="1.3 1.6"/><ellipse cx="405.6" cy="310.7" rx="4.2" ry="2.4" fill="#000"/><path d="M409.9 318.0 L411.9 320.5 L409.9 323.6" stroke="#fff" stroke-width="1.2" fill="none"/><ellipse cx="414.4" cy="320.1" rx="4.2" ry="2.4" fill="none" stroke="#fff" stroke-width="0.7" stroke-dasharray="1.3 1.6"/><ellipse cx="415.3" cy="320.8" rx="4.2" ry="2.4" fill="#000"/><path d="M356.8 311.3 L358.8 313.8 L356.8 316.9" stroke="#fff" stroke-width="1.2" fill="none"/><ellipse cx="361.3" cy="313.4" rx="4.2" ry="2.4" fill="none" stroke="#fff" stroke-width="0.7" stroke-dasharray="1.3 1.6"/><ellipse cx="362.2" cy="314.1" rx="4.2" ry="2.4" fill="#000"/><path d="M360.7 315.2 L362.7 317.7 L360.7 320.8" stroke="#fff" stroke-width="1.2" fill="none"/><ellipse cx="365.2" cy="317.3" rx="4.2" ry="2.4" fill="none" stroke="#fff" stroke-width="0.7" stroke-dasharray="1.3 1.6"/><ellipse cx="366.1" cy="318.0" rx="4.2" ry="2.4" fill="#000"/><path d="M338.7 321.9 L340.7 324.4 L338.7 327.5" stroke="#fff" stroke-width="1.2" fill="none"/><ellipse cx="343.2" cy="324.0" rx="4.2" ry="2.4" fill="none" stroke="#fff" stroke-width="0.7" stroke-dasharray="1.3 1.6"/><ellipse cx="344.1" cy="324.7" rx="4.2" ry="2.4" fill="#000"/><path d="M360.1 323.9 L362.1 326.4 L360.1 329.5" stroke="#fff" stroke-width="1.2" fill="none"/><ellipse cx="364.6" cy="326.0" rx="4.2" ry="2.4" fill="none" stroke="#fff" stroke-width="0.7" stroke-dasharray="1.3 1.6"/><ellipse cx="365.5" cy="326.7" rx="4.2" ry="2.4" fill="#000"/><path d="M433.2 330.3 L435.2 332.8 L433.2 335.9" stroke="#fff" stroke-width="1.2" fill="none"/><ellipse cx="437.7" cy="332.4" rx="4.2" ry="2.4" fill="none" stroke="#fff" stroke-width="0.7" stroke-dasharray="1.3 1.6"/><ellipse cx="438.6" cy="333.1" rx="4.2" ry="2.4" fill="#000"/><path d="M446.2 334.2 L448.2 336.7 L446.2 339.8" stroke="#fff" stroke-width="1.2" fill="none"/><ellipse cx="450.7" cy="336.3" rx="4.2" ry="2.4" fill="none" stroke="#fff" stroke-width="0.7" stroke-dasharray="1.3 1.6"/><ellipse cx="451.6" cy="337.0" rx="4.2" ry="2.4" fill="#000"/><path d="M354.9 336.8 L356.9 339.3 L354.9 342.4" stroke="#fff" stroke-width="1.2" fill="none"/><ellipse cx="359.4" cy="338.9" rx="4.2" ry="2.4" fill="none" stroke="#fff" stroke-width="0.7" stroke-dasharray="1.3 1.6"/><ellipse cx="360.3" cy="339.6" rx="4.2" ry="2.4" fill="#000"/><path d="M363.3 336.2 L365.3 338.7 L363.3 341.8" stroke="#fff" stroke-width="1.2" fill="none"/><ellipse cx="367.8" cy="338.3" rx="4.2" ry="2.4" fill="none" stroke="#fff" stroke-width="0.7" stroke-dasharray="1.3 1.6"/><ellipse cx="368.7" cy="339.0" rx="4.2" ry="2.4" fill="#000"/><path d="M356.8 349.1 L358.8 351.6 L356.8 354.7" stroke="#fff" stroke-width="1.2" fill="none"/><ellipse cx="361.3" cy="351.2" rx="4.2" ry="2.4" fill="none" stroke="#fff" stroke-width="0.7" stroke-dasharray="1.3 1.6"/><ellipse cx="362.2" cy="351.9" rx="4.2" ry="2.4" fill="#000"/><path d="M358.1 354.5 L360.1 357.0 L358.1 360.1" stroke="#fff" stroke-width="1.2" fill="none"/><ellipse cx="362.6" cy="356.6" rx="4.2" ry="2.4" fill="none" stroke="#fff" stroke-width="0.7" stroke-dasharray="1.3 1.6"/><ellipse cx="363.5" cy="357.3" rx="4.2" ry="2.4" fill="#000"/><path d="M345.8 357.1 L347.8 359.6 L345.8 362.7" stroke="#fff" stroke-width="1.2" fill="none"/><ellipse cx="350.3" cy="359.2" rx="4.2" ry="2.4" fill="none" stroke="#fff" stroke-width="0.7" stroke-dasharray="1.3 1.6"/><ellipse cx="351.2" cy="359.9" rx="4.2" ry="2.4" fill="#000"/><path d="M353.0 359.5 L355.0 362.0 L353.0 365.1" stroke="#fff" stroke-width="1.2" fill="none"/><ellipse cx="357.5" cy="361.6" rx="4.2" ry="2.4" fill="none" stroke="#fff" stroke-width="0.7" stroke-dasharray="1.3 1.6"/><ellipse cx="358.4" cy="362.3" rx="4.2" ry="2.4" fill="#000"/><path d="M358.1 372.7 L360.1 375.2 L358.1 378.3" stroke="#fff" stroke-width="1.2" fill="none"/><ellipse cx="362.6" cy="374.8" rx="4.2" ry="2.4" fill="none" stroke="#fff" stroke-width="0.7" stroke-dasharray="1.3 1.6"/><ellipse cx="363.5" cy="375.5" rx="4.2" ry="2.4" fill="#000"/><path d="M336.8 381.7 L338.8 384.2 L336.8 387.3" stroke="#fff" stroke-width="1.2" fill="none"/><ellipse cx="341.3" cy="383.8" rx="4.2" ry="2.4" fill="none" stroke="#fff" stroke-width="0.7" stroke-dasharray="1.3 1.6"/><ellipse cx="342.2" cy="384.5" rx="4.2" ry="2.4" fill="#000"/><path d="M422.2 393.1 L424.2 395.6 L422.2 398.7" stroke="#fff" stroke-width="1.2" fill="none"/><ellipse cx="426.7" cy="395.2" rx="4.2" ry="2.4" fill="none" stroke="#fff" stroke-width="0.7" stroke-dasharray="1.3 1.6"/><ellipse cx="427.6" cy="395.9" rx="4.2" ry="2.4" fill="#000"/><path d="M240.8 393.3 L242.8 395.8 L240.8 398.9" stroke="#fff" stroke-width="1.2" fill="none"/><ellipse cx="245.3" cy="395.4" rx="4.2" ry="2.4" fill="none" stroke="#fff" stroke-width="0.7" stroke-dasharray="1.3 1.6"/><ellipse cx="246.2" cy="396.1" rx="4.2" ry="2.4" fill="#000"/><path d="M265.5 393.9 L267.5 396.4 L265.5 399.5" stroke="#fff" stroke-width="1.2" fill="none"/><ellipse cx="270.0" cy="396.0" rx="4.2" ry="2.4" fill="none" stroke="#fff" stroke-width="0.7" stroke-dasharray="1.3 1.6"/><ellipse cx="270.9" cy="396.7" rx="4.2" ry="2.4" fill="#000"/><path d="M277.6 393.3 L279.6 395.8 L277.6 398.9" stroke="#fff" stroke-width="1.2" fill="none"/><ellipse cx="282.1" cy="395.4" rx="4.2" ry="2.4" fill="none" stroke="#fff" stroke-width="0.7" stroke-dasharray="1.3 1.6"/><ellipse cx="283.0" cy="396.1" rx="4.2" ry="2.4" fill="#000"/><path d="M304.0 393.9 L306.0 396.4 L304.0 399.5" stroke="#fff" stroke-width="1.2" fill="none"/><ellipse cx="308.5" cy="396.0" rx="4.2" ry="2.4" fill="none" stroke="#fff" stroke-width="0.7" stroke-dasharray="1.3 1.6"/><ellipse cx="309.4" cy="396.7" rx="4.2" ry="2.4" fill="#000"/><path d="M327.1 393.3 L329.1 395.8 L327.1 398.9" stroke="#fff" stroke-width="1.2" fill="none"/><ellipse cx="331.6" cy="395.4" rx="4.2" ry="2.4" fill="none" stroke="#fff" stroke-width="0.7" stroke-dasharray="1.3 1.6"/><ellipse cx="332.5" cy="396.1" rx="4.2" ry="2.4" fill="#000"/><path d="M224.8 397.2 L226.8 399.7 L224.8 402.8" stroke="#fff" stroke-width="1.2" fill="none"/><ellipse cx="229.3" cy="399.3" rx="4.2" ry="2.4" fill="none" stroke="#fff" stroke-width="0.7" stroke-dasharray="1.3 1.6"/><ellipse cx="230.2" cy="400.0" rx="4.2" ry="2.4" fill="#000"/><path d="M232.5 400.5 L234.5 403.0 L232.5 406.1" stroke="#fff" stroke-width="1.2" fill="none"/><ellipse cx="237.0" cy="402.6" rx="4.2" ry="2.4" fill="none" stroke="#fff" stroke-width="0.7" stroke-dasharray="1.3 1.6"/><ellipse cx="237.9" cy="403.3" rx="4.2" ry="2.4" fill="#000"/><path d="M254.0 398.8 L256.0 401.3 L254.0 404.4" stroke="#fff" stroke-width="1.2" fill="none"/><ellipse cx="258.5" cy="400.9" rx="4.2" ry="2.4" fill="none" stroke="#fff" stroke-width="0.7" stroke-dasharray="1.3 1.6"/><ellipse cx="259.4" cy="401.6" rx="4.2" ry="2.4" fill="#000"/><path d="M265.5 399.9 L267.5 402.4 L265.5 405.5" stroke="#fff" stroke-width="1.2" fill="none"/><ellipse cx="270.0" cy="402.0" rx="4.2" ry="2.4" fill="none" stroke="#fff" stroke-width="0.7" stroke-dasharray="1.3 1.6"/><ellipse cx="270.9" cy="402.7" rx="4.2" ry="2.4" fill="#000"/><path d="M273.2 399.9 L275.2 402.4 L273.2 405.5" stroke="#fff" stroke-width="1.2" fill="none"/><ellipse cx="277.7" cy="402.0" rx="4.2" ry="2.4" fill="none" stroke="#fff" stroke-width="0.7" stroke-dasharray="1.3 1.6"/><ellipse cx="278.6" cy="402.7" rx="4.2" ry="2.4" fill="#000"/><path d="M279.8 400.5 L281.8 403.0 L279.8 406.1" stroke="#fff" stroke-width="1.2" fill="none"/><ellipse cx="284.3" cy="402.6" rx="4.2" ry="2.4" fill="none" stroke="#fff" stroke-width="0.7" stroke-dasharray="1.3 1.6"/><ellipse cx="285.2" cy="403.3" rx="4.2" ry="2.4" fill="#000"/><path d="M242.4 402.7 L244.4 405.2 L242.4 408.3" stroke="#fff" stroke-width="1.2" fill="none"/><ellipse cx="246.9" cy="404.8" rx="4.2" ry="2.4" fill="none" stroke="#fff" stroke-width="0.7" stroke-dasharray="1.3 1.6"/><ellipse cx="247.8" cy="405.5" rx="4.2" ry="2.4" fill="#000"/><path d="M221.5 402.7 L223.5 405.2 L221.5 408.3" stroke="#fff" stroke-width="1.2" fill="none"/><ellipse cx="226.0" cy="404.8" rx="4.2" ry="2.4" fill="none" stroke="#fff" stroke-width="0.7" stroke-dasharray="1.3 1.6"/><ellipse cx="226.9" cy="405.5" rx="4.2" ry="2.4" fill="#000"/><path d="M239.1 406.0 L241.1 408.5 L239.1 411.6" stroke="#fff" stroke-width="1.2" fill="none"/><ellipse cx="243.6" cy="408.1" rx="4.2" ry="2.4" fill="none" stroke="#fff" stroke-width="0.7" stroke-dasharray="1.3 1.6"/><ellipse cx="244.5" cy="408.8" rx="4.2" ry="2.4" fill="#000"/><path d="M241.3 408.7 L243.3 411.2 L241.3 414.3" stroke="#fff" stroke-width="1.2" fill="none"/><ellipse cx="245.8" cy="410.8" rx="4.2" ry="2.4" fill="none" stroke="#fff" stroke-width="0.7" stroke-dasharray="1.3 1.6"/><ellipse cx="246.7" cy="411.5" rx="4.2" ry="2.4" fill="#000"/><path d="M247.9 410.9 L249.9 413.4 L247.9 416.5" stroke="#fff" stroke-width="1.2" fill="none"/><ellipse cx="252.4" cy="413.0" rx="4.2" ry="2.4" fill="none" stroke="#fff" stroke-width="0.7" stroke-dasharray="1.3 1.6"/><ellipse cx="253.3" cy="413.7" rx="4.2" ry="2.4" fill="#000"/><path d="M272.1 409.8 L274.1 412.3 L272.1 415.4" stroke="#fff" stroke-width="1.2" fill="none"/><ellipse cx="276.6" cy="411.9" rx="4.2" ry="2.4" fill="none" stroke="#fff" stroke-width="0.7" stroke-dasharray="1.3 1.6"/><ellipse cx="277.5" cy="412.6" rx="4.2" ry="2.4" fill="#000"/><path d="M282.0 408.2 L284.0 410.7 L282.0 413.8" stroke="#fff" stroke-width="1.2" fill="none"/><ellipse cx="286.5" cy="410.3" rx="4.2" ry="2.4" fill="none" stroke="#fff" stroke-width="0.7" stroke-dasharray="1.3 1.6"/><ellipse cx="287.4" cy="411.0" rx="4.2" ry="2.4" fill="#000"/><path d="M290.8 408.7 L292.8 411.2 L290.8 414.3" stroke="#fff" stroke-width="1.2" fill="none"/><ellipse cx="295.3" cy="410.8" rx="4.2" ry="2.4" fill="none" stroke="#fff" stroke-width="0.7" stroke-dasharray="1.3 1.6"/><ellipse cx="296.2" cy="411.5" rx="4.2" ry="2.4" fill="#000"/><path d="M306.2 409.3 L308.2 411.8 L306.2 414.9" stroke="#fff" stroke-width="1.2" fill="none"/><ellipse cx="310.7" cy="411.4" rx="4.2" ry="2.4" fill="none" stroke="#fff" stroke-width="0.7" stroke-dasharray="1.3 1.6"/><ellipse cx="311.6" cy="412.1" rx="4.2" ry="2.4" fill="#000"/><path d="M228.1 412.6 L230.1 415.1 L228.1 418.2" stroke="#fff" stroke-width="1.2" fill="none"/><ellipse cx="232.6" cy="414.7" rx="4.2" ry="2.4" fill="none" stroke="#fff" stroke-width="0.7" stroke-dasharray="1.3 1.6"/><ellipse cx="233.5" cy="415.4" rx="4.2" ry="2.4" fill="#000"/><path d="M330.4 408.7 L332.4 411.2 L330.4 414.3" stroke="#fff" stroke-width="1.2" fill="none"/><ellipse cx="334.9" cy="410.8" rx="4.2" ry="2.4" fill="none" stroke="#fff" stroke-width="0.7" stroke-dasharray="1.3 1.6"/><ellipse cx="335.8" cy="411.5" rx="4.2" ry="2.4" fill="#000"/><path d="M242.4 415.3 L244.4 417.8 L242.4 420.9" stroke="#fff" stroke-width="1.2" fill="none"/><ellipse cx="246.9" cy="417.4" rx="4.2" ry="2.4" fill="none" stroke="#fff" stroke-width="0.7" stroke-dasharray="1.3 1.6"/><ellipse cx="247.8" cy="418.1" rx="4.2" ry="2.4" fill="#000"/><path d="M258.9 415.9 L260.9 418.4 L258.9 421.5" stroke="#fff" stroke-width="1.2" fill="none"/><ellipse cx="263.4" cy="418.0" rx="4.2" ry="2.4" fill="none" stroke="#fff" stroke-width="0.7" stroke-dasharray="1.3 1.6"/><ellipse cx="264.3" cy="418.7" rx="4.2" ry="2.4" fill="#000"/><path d="M268.8 417.5 L270.8 420.0 L268.8 423.1" stroke="#fff" stroke-width="1.2" fill="none"/><ellipse cx="273.3" cy="419.6" rx="4.2" ry="2.4" fill="none" stroke="#fff" stroke-width="0.7" stroke-dasharray="1.3 1.6"/><ellipse cx="274.2" cy="420.3" rx="4.2" ry="2.4" fill="#000"/><path d="M277.6 417.5 L279.6 420.0 L277.6 423.1" stroke="#fff" stroke-width="1.2" fill="none"/><ellipse cx="282.1" cy="419.6" rx="4.2" ry="2.4" fill="none" stroke="#fff" stroke-width="0.7" stroke-dasharray="1.3 1.6"/><ellipse cx="283.0" cy="420.3" rx="4.2" ry="2.4" fill="#000"/><path d="M294.1 413.7 L296.1 416.2 L294.1 419.3" stroke="#fff" stroke-width="1.2" fill="none"/><ellipse cx="298.6" cy="415.8" rx="4.2" ry="2.4" fill="none" stroke="#fff" stroke-width="0.7" stroke-dasharray="1.3 1.6"/><ellipse cx="299.5" cy="416.5" rx="4.2" ry="2.4" fill="#000"/><path d="M236.9 420.3 L238.9 422.8 L236.9 425.9" stroke="#fff" stroke-width="1.2" fill="none"/><ellipse cx="241.4" cy="422.4" rx="4.2" ry="2.4" fill="none" stroke="#fff" stroke-width="0.7" stroke-dasharray="1.3 1.6"/><ellipse cx="242.3" cy="423.1" rx="4.2" ry="2.4" fill="#000"/><path d="M257.8 420.3 L259.8 422.8 L257.8 425.9" stroke="#fff" stroke-width="1.2" fill="none"/><ellipse cx="262.3" cy="422.4" rx="4.2" ry="2.4" fill="none" stroke="#fff" stroke-width="0.7" stroke-dasharray="1.3 1.6"/><ellipse cx="263.2" cy="423.1" rx="4.2" ry="2.4" fill="#000"/><path d="M279.8 420.3 L281.8 422.8 L279.8 425.9" stroke="#fff" stroke-width="1.2" fill="none"/><ellipse cx="284.3" cy="422.4" rx="4.2" ry="2.4" fill="none" stroke="#fff" stroke-width="0.7" stroke-dasharray="1.3 1.6"/><ellipse cx="285.2" cy="423.1" rx="4.2" ry="2.4" fill="#000"/><path d="M304.0 419.7 L306.0 422.2 L304.0 425.3" stroke="#fff" stroke-width="1.2" fill="none"/><ellipse cx="308.5" cy="421.8" rx="4.2" ry="2.4" fill="none" stroke="#fff" stroke-width="0.7" stroke-dasharray="1.3 1.6"/><ellipse cx="309.4" cy="422.5" rx="4.2" ry="2.4" fill="#000"/><path d="M312.8 418.1 L314.8 420.6 L312.8 423.7" stroke="#fff" stroke-width="1.2" fill="none"/><ellipse cx="317.3" cy="420.2" rx="4.2" ry="2.4" fill="none" stroke="#fff" stroke-width="0.7" stroke-dasharray="1.3 1.6"/><ellipse cx="318.2" cy="420.9" rx="4.2" ry="2.4" fill="#000"/><path d="M280.9 424.7 L282.9 427.2 L280.9 430.3" stroke="#fff" stroke-width="1.2" fill="none"/><ellipse cx="285.4" cy="426.8" rx="4.2" ry="2.4" fill="none" stroke="#fff" stroke-width="0.7" stroke-dasharray="1.3 1.6"/><ellipse cx="286.3" cy="427.5" rx="4.2" ry="2.4" fill="#000"/><path d="M290.8 423.6 L292.8 426.1 L290.8 429.2" stroke="#fff" stroke-width="1.2" fill="none"/><ellipse cx="295.3" cy="425.7" rx="4.2" ry="2.4" fill="none" stroke="#fff" stroke-width="0.7" stroke-dasharray="1.3 1.6"/><ellipse cx="296.2" cy="426.4" rx="4.2" ry="2.4" fill="#000"/><path d="M299.6 428.0 L301.6 430.5 L299.6 433.6" stroke="#fff" stroke-width="1.2" fill="none"/><ellipse cx="304.1" cy="430.1" rx="4.2" ry="2.4" fill="none" stroke="#fff" stroke-width="0.7" stroke-dasharray="1.3 1.6"/><ellipse cx="305.0" cy="430.8" rx="4.2" ry="2.4" fill="#000"/><path d="M290.8 429.6 L292.8 432.1 L290.8 435.2" stroke="#fff" stroke-width="1.2" fill="none"/><ellipse cx="295.3" cy="431.7" rx="4.2" ry="2.4" fill="none" stroke="#fff" stroke-width="0.7" stroke-dasharray="1.3 1.6"/><ellipse cx="296.2" cy="432.4" rx="4.2" ry="2.4" fill="#000"/><path d="M234.7 427.4 L236.7 429.9 L234.7 433.0" stroke="#fff" stroke-width="1.2" fill="none"/><ellipse cx="239.2" cy="429.5" rx="4.2" ry="2.4" fill="none" stroke="#fff" stroke-width="0.7" stroke-dasharray="1.3 1.6"/><ellipse cx="240.1" cy="430.2" rx="4.2" ry="2.4" fill="#000"/><path d="M236.9 432.4 L238.9 434.9 L236.9 438.0" stroke="#fff" stroke-width="1.2" fill="none"/><ellipse cx="241.4" cy="434.5" rx="4.2" ry="2.4" fill="none" stroke="#fff" stroke-width="0.7" stroke-dasharray="1.3 1.6"/><ellipse cx="242.3" cy="435.2" rx="4.2" ry="2.4" fill="#000"/><path d="M230.3 436.2 L232.3 438.7 L230.3 441.8" stroke="#fff" stroke-width="1.2" fill="none"/><ellipse cx="234.8" cy="438.3" rx="4.2" ry="2.4" fill="none" stroke="#fff" stroke-width="0.7" stroke-dasharray="1.3 1.6"/><ellipse cx="235.7" cy="439.0" rx="4.2" ry="2.4" fill="#000"/><path d="M221.5 430.7 L223.5 433.2 L221.5 436.3" stroke="#fff" stroke-width="1.2" fill="none"/><ellipse cx="226.0" cy="432.8" rx="4.2" ry="2.4" fill="none" stroke="#fff" stroke-width="0.7" stroke-dasharray="1.3 1.6"/><ellipse cx="226.9" cy="433.5" rx="4.2" ry="2.4" fill="#000"/><path d="M273.2 435.7 L275.2 438.2 L273.2 441.3" stroke="#fff" stroke-width="1.2" fill="none"/><ellipse cx="277.7" cy="437.8" rx="4.2" ry="2.4" fill="none" stroke="#fff" stroke-width="0.7" stroke-dasharray="1.3 1.6"/><ellipse cx="278.6" cy="438.5" rx="4.2" ry="2.4" fill="#000"/><path d="M278.7 436.8 L280.7 439.3 L278.7 442.4" stroke="#fff" stroke-width="1.2" fill="none"/><ellipse cx="283.2" cy="438.9" rx="4.2" ry="2.4" fill="none" stroke="#fff" stroke-width="0.7" stroke-dasharray="1.3 1.6"/><ellipse cx="284.1" cy="439.6" rx="4.2" ry="2.4" fill="#000"/><path d="M273.2 438.4 L275.2 440.9 L273.2 444.0" stroke="#fff" stroke-width="1.2" fill="none"/><ellipse cx="277.7" cy="440.5" rx="4.2" ry="2.4" fill="none" stroke="#fff" stroke-width="0.7" stroke-dasharray="1.3 1.6"/><ellipse cx="278.6" cy="441.2" rx="4.2" ry="2.4" fill="#000"/><path d="M322.7 436.2 L324.7 438.7 L322.7 441.8" stroke="#fff" stroke-width="1.2" fill="none"/><ellipse cx="327.2" cy="438.3" rx="4.2" ry="2.4" fill="none" stroke="#fff" stroke-width="0.7" stroke-dasharray="1.3 1.6"/><ellipse cx="328.1" cy="439.0" rx="4.2" ry="2.4" fill="#000"/><path d="M308.4 438.4 L310.4 440.9 L308.4 444.0" stroke="#fff" stroke-width="1.2" fill="none"/><ellipse cx="312.9" cy="440.5" rx="4.2" ry="2.4" fill="none" stroke="#fff" stroke-width="0.7" stroke-dasharray="1.3 1.6"/><ellipse cx="313.8" cy="441.2" rx="4.2" ry="2.4" fill="#000"/><path d="M246.8 437.9 L248.8 440.4 L246.8 443.5" stroke="#fff" stroke-width="1.2" fill="none"/><ellipse cx="251.3" cy="440.0" rx="4.2" ry="2.4" fill="none" stroke="#fff" stroke-width="0.7" stroke-dasharray="1.3 1.6"/><ellipse cx="252.2" cy="440.7" rx="4.2" ry="2.4" fill="#000"/><path d="M239.1 441.2 L241.1 443.7 L239.1 446.8" stroke="#fff" stroke-width="1.2" fill="none"/><ellipse cx="243.6" cy="443.3" rx="4.2" ry="2.4" fill="none" stroke="#fff" stroke-width="0.7" stroke-dasharray="1.3 1.6"/><ellipse cx="244.5" cy="444.0" rx="4.2" ry="2.4" fill="#000"/><path d="M246.8 442.3 L248.8 444.8 L246.8 447.9" stroke="#fff" stroke-width="1.2" fill="none"/><ellipse cx="251.3" cy="444.4" rx="4.2" ry="2.4" fill="none" stroke="#fff" stroke-width="0.7" stroke-dasharray="1.3 1.6"/><ellipse cx="252.2" cy="445.1" rx="4.2" ry="2.4" fill="#000"/><path d="M232.5 446.1 L234.5 448.6 L232.5 451.7" stroke="#fff" stroke-width="1.2" fill="none"/><ellipse cx="237.0" cy="448.2" rx="4.2" ry="2.4" fill="none" stroke="#fff" stroke-width="0.7" stroke-dasharray="1.3 1.6"/><ellipse cx="237.9" cy="448.9" rx="4.2" ry="2.4" fill="#000"/><path d="M264.4 447.2 L266.4 449.7 L264.4 452.8" stroke="#fff" stroke-width="1.2" fill="none"/><ellipse cx="268.9" cy="449.3" rx="4.2" ry="2.4" fill="none" stroke="#fff" stroke-width="0.7" stroke-dasharray="1.3 1.6"/><ellipse cx="269.8" cy="450.0" rx="4.2" ry="2.4" fill="#000"/><path d="M273.2 449.4 L275.2 451.9 L273.2 455.0" stroke="#fff" stroke-width="1.2" fill="none"/><ellipse cx="277.7" cy="451.5" rx="4.2" ry="2.4" fill="none" stroke="#fff" stroke-width="0.7" stroke-dasharray="1.3 1.6"/><ellipse cx="278.6" cy="452.2" rx="4.2" ry="2.4" fill="#000"/><path d="M278.7 445.0 L280.7 447.5 L278.7 450.6" stroke="#fff" stroke-width="1.2" fill="none"/><ellipse cx="283.2" cy="447.1" rx="4.2" ry="2.4" fill="none" stroke="#fff" stroke-width="0.7" stroke-dasharray="1.3 1.6"/><ellipse cx="284.1" cy="447.8" rx="4.2" ry="2.4" fill="#000"/><path d="M299.6 443.9 L301.6 446.4 L299.6 449.5" stroke="#fff" stroke-width="1.2" fill="none"/><ellipse cx="304.1" cy="446.0" rx="4.2" ry="2.4" fill="none" stroke="#fff" stroke-width="0.7" stroke-dasharray="1.3 1.6"/><ellipse cx="305.0" cy="446.7" rx="4.2" ry="2.4" fill="#000"/><path d="M306.2 448.3 L308.2 450.8 L306.2 453.9" stroke="#fff" stroke-width="1.2" fill="none"/><ellipse cx="310.7" cy="450.4" rx="4.2" ry="2.4" fill="none" stroke="#fff" stroke-width="0.7" stroke-dasharray="1.3 1.6"/><ellipse cx="311.6" cy="451.1" rx="4.2" ry="2.4" fill="#000"/><path d="M288.6 451.6 L290.6 454.1 L288.6 457.2" stroke="#fff" stroke-width="1.2" fill="none"/><ellipse cx="293.1" cy="453.7" rx="4.2" ry="2.4" fill="none" stroke="#fff" stroke-width="0.7" stroke-dasharray="1.3 1.6"/><ellipse cx="294.0" cy="454.4" rx="4.2" ry="2.4" fill="#000"/><path d="M296.3 451.6 L298.3 454.1 L296.3 457.2" stroke="#fff" stroke-width="1.2" fill="none"/><ellipse cx="300.8" cy="453.7" rx="4.2" ry="2.4" fill="none" stroke="#fff" stroke-width="0.7" stroke-dasharray="1.3 1.6"/><ellipse cx="301.7" cy="454.4" rx="4.2" ry="2.4" fill="#000"/><path d="M324.9 449.4 L326.9 451.9 L324.9 455.0" stroke="#fff" stroke-width="1.2" fill="none"/><ellipse cx="329.4" cy="451.5" rx="4.2" ry="2.4" fill="none" stroke="#fff" stroke-width="0.7" stroke-dasharray="1.3 1.6"/><ellipse cx="330.3" cy="452.2" rx="4.2" ry="2.4" fill="#000"/><path d="M324.9 452.7 L326.9 455.2 L324.9 458.3" stroke="#fff" stroke-width="1.2" fill="none"/><ellipse cx="329.4" cy="454.8" rx="4.2" ry="2.4" fill="none" stroke="#fff" stroke-width="0.7" stroke-dasharray="1.3 1.6"/><ellipse cx="330.3" cy="455.5" rx="4.2" ry="2.4" fill="#000"/><path d="M220.4 452.7 L222.4 455.2 L220.4 458.3" stroke="#fff" stroke-width="1.2" fill="none"/><ellipse cx="224.9" cy="454.8" rx="4.2" ry="2.4" fill="none" stroke="#fff" stroke-width="0.7" stroke-dasharray="1.3 1.6"/><ellipse cx="225.8" cy="455.5" rx="4.2" ry="2.4" fill="#000"/><path d="M243.5 454.4 L245.5 456.9 L243.5 460.0" stroke="#fff" stroke-width="1.2" fill="none"/><ellipse cx="248.0" cy="456.5" rx="4.2" ry="2.4" fill="none" stroke="#fff" stroke-width="0.7" stroke-dasharray="1.3 1.6"/><ellipse cx="248.9" cy="457.2" rx="4.2" ry="2.4" fill="#000"/><path d="M252.3 452.2 L254.3 454.7 L252.3 457.8" stroke="#fff" stroke-width="1.2" fill="none"/><ellipse cx="256.8" cy="454.3" rx="4.2" ry="2.4" fill="none" stroke="#fff" stroke-width="0.7" stroke-dasharray="1.3 1.6"/><ellipse cx="257.7" cy="455.0" rx="4.2" ry="2.4" fill="#000"/><path d="M267.7 452.2 L269.7 454.7 L267.7 457.8" stroke="#fff" stroke-width="1.2" fill="none"/><ellipse cx="272.2" cy="454.3" rx="4.2" ry="2.4" fill="none" stroke="#fff" stroke-width="0.7" stroke-dasharray="1.3 1.6"/><ellipse cx="273.1" cy="455.0" rx="4.2" ry="2.4" fill="#000"/><path d="M298.5 454.9 L300.5 457.4 L298.5 460.5" stroke="#fff" stroke-width="1.2" fill="none"/><ellipse cx="303.0" cy="457.0" rx="4.2" ry="2.4" fill="none" stroke="#fff" stroke-width="0.7" stroke-dasharray="1.3 1.6"/><ellipse cx="303.9" cy="457.7" rx="4.2" ry="2.4" fill="#000"/><path d="M236.9 458.2 L238.9 460.7 L236.9 463.8" stroke="#fff" stroke-width="1.2" fill="none"/><ellipse cx="241.4" cy="460.3" rx="4.2" ry="2.4" fill="none" stroke="#fff" stroke-width="0.7" stroke-dasharray="1.3 1.6"/><ellipse cx="242.3" cy="461.0" rx="4.2" ry="2.4" fill="#000"/><path d="M250.1 460.4 L252.1 462.9 L250.1 466.0" stroke="#fff" stroke-width="1.2" fill="none"/><ellipse cx="254.6" cy="462.5" rx="4.2" ry="2.4" fill="none" stroke="#fff" stroke-width="0.7" stroke-dasharray="1.3 1.6"/><ellipse cx="255.5" cy="463.2" rx="4.2" ry="2.4" fill="#000"/><path d="M263.3 458.8 L265.3 461.3 L263.3 464.4" stroke="#fff" stroke-width="1.2" fill="none"/><ellipse cx="267.8" cy="460.9" rx="4.2" ry="2.4" fill="none" stroke="#fff" stroke-width="0.7" stroke-dasharray="1.3 1.6"/><ellipse cx="268.7" cy="461.6" rx="4.2" ry="2.4" fill="#000"/><path d="M263.3 461.5 L265.3 464.0 L263.3 467.1" stroke="#fff" stroke-width="1.2" fill="none"/><ellipse cx="267.8" cy="463.6" rx="4.2" ry="2.4" fill="none" stroke="#fff" stroke-width="0.7" stroke-dasharray="1.3 1.6"/><ellipse cx="268.7" cy="464.3" rx="4.2" ry="2.4" fill="#000"/><path d="M269.9 462.1 L271.9 464.6 L269.9 467.7" stroke="#fff" stroke-width="1.2" fill="none"/><ellipse cx="274.4" cy="464.2" rx="4.2" ry="2.4" fill="none" stroke="#fff" stroke-width="0.7" stroke-dasharray="1.3 1.6"/><ellipse cx="275.3" cy="464.9" rx="4.2" ry="2.4" fill="#000"/><path d="M286.4 461.5 L288.4 464.0 L286.4 467.1" stroke="#fff" stroke-width="1.2" fill="none"/><ellipse cx="290.9" cy="463.6" rx="4.2" ry="2.4" fill="none" stroke="#fff" stroke-width="0.7" stroke-dasharray="1.3 1.6"/><ellipse cx="291.8" cy="464.3" rx="4.2" ry="2.4" fill="#000"/><path d="M299.6 458.8 L301.6 461.3 L299.6 464.4" stroke="#fff" stroke-width="1.2" fill="none"/><ellipse cx="304.1" cy="460.9" rx="4.2" ry="2.4" fill="none" stroke="#fff" stroke-width="0.7" stroke-dasharray="1.3 1.6"/><ellipse cx="305.0" cy="461.6" rx="4.2" ry="2.4" fill="#000"/><path d="M301.8 462.6 L303.8 465.1 L301.8 468.2" stroke="#fff" stroke-width="1.2" fill="none"/><ellipse cx="306.3" cy="464.7" rx="4.2" ry="2.4" fill="none" stroke="#fff" stroke-width="0.7" stroke-dasharray="1.3 1.6"/><ellipse cx="307.2" cy="465.4" rx="4.2" ry="2.4" fill="#000"/><path d="M274.3 464.8 L276.3 467.3 L274.3 470.4" stroke="#fff" stroke-width="1.2" fill="none"/><ellipse cx="278.8" cy="466.9" rx="4.2" ry="2.4" fill="none" stroke="#fff" stroke-width="0.7" stroke-dasharray="1.3 1.6"/><ellipse cx="279.7" cy="467.6" rx="4.2" ry="2.4" fill="#000"/><path d="M280.9 468.1 L282.9 470.6 L280.9 473.7" stroke="#fff" stroke-width="1.2" fill="none"/><ellipse cx="285.4" cy="470.2" rx="4.2" ry="2.4" fill="none" stroke="#fff" stroke-width="0.7" stroke-dasharray="1.3 1.6"/><ellipse cx="286.3" cy="470.9" rx="4.2" ry="2.4" fill="#000"/><path d="M290.8 465.9 L292.8 468.4 L290.8 471.5" stroke="#fff" stroke-width="1.2" fill="none"/><ellipse cx="295.3" cy="468.0" rx="4.2" ry="2.4" fill="none" stroke="#fff" stroke-width="0.7" stroke-dasharray="1.3 1.6"/><ellipse cx="296.2" cy="468.7" rx="4.2" ry="2.4" fill="#000"/><path d="M327.1 464.8 L329.1 467.3 L327.1 470.4" stroke="#fff" stroke-width="1.2" fill="none"/><ellipse cx="331.6" cy="466.9" rx="4.2" ry="2.4" fill="none" stroke="#fff" stroke-width="0.7" stroke-dasharray="1.3 1.6"/><ellipse cx="332.5" cy="467.6" rx="4.2" ry="2.4" fill="#000"/><path d="M322.7 467.0 L324.7 469.5 L322.7 472.6" stroke="#fff" stroke-width="1.2" fill="none"/><ellipse cx="327.2" cy="469.1" rx="4.2" ry="2.4" fill="none" stroke="#fff" stroke-width="0.7" stroke-dasharray="1.3 1.6"/><ellipse cx="328.1" cy="469.8" rx="4.2" ry="2.4" fill="#000"/><path d="M234.7 466.5 L236.7 469.0 L234.7 472.1" stroke="#fff" stroke-width="1.2" fill="none"/><ellipse cx="239.2" cy="468.6" rx="4.2" ry="2.4" fill="none" stroke="#fff" stroke-width="0.7" stroke-dasharray="1.3 1.6"/><ellipse cx="240.1" cy="469.3" rx="4.2" ry="2.4" fill="#000"/><path d="M233.6 470.9 L235.6 473.4 L233.6 476.5" stroke="#fff" stroke-width="1.2" fill="none"/><ellipse cx="238.1" cy="473.0" rx="4.2" ry="2.4" fill="none" stroke="#fff" stroke-width="0.7" stroke-dasharray="1.3 1.6"/><ellipse cx="239.0" cy="473.7" rx="4.2" ry="2.4" fill="#000"/><path d="M262.2 468.1 L264.2 470.6 L262.2 473.7" stroke="#fff" stroke-width="1.2" fill="none"/><ellipse cx="266.7" cy="470.2" rx="4.2" ry="2.4" fill="none" stroke="#fff" stroke-width="0.7" stroke-dasharray="1.3 1.6"/><ellipse cx="267.6" cy="470.9" rx="4.2" ry="2.4" fill="#000"/><path d="M268.8 471.4 L270.8 473.9 L268.8 477.0" stroke="#fff" stroke-width="1.2" fill="none"/><ellipse cx="273.3" cy="473.5" rx="4.2" ry="2.4" fill="none" stroke="#fff" stroke-width="0.7" stroke-dasharray="1.3 1.6"/><ellipse cx="274.2" cy="474.2" rx="4.2" ry="2.4" fill="#000"/><path d="M258.9 473.1 L260.9 475.6 L258.9 478.7" stroke="#fff" stroke-width="1.2" fill="none"/><ellipse cx="263.4" cy="475.2" rx="4.2" ry="2.4" fill="none" stroke="#fff" stroke-width="0.7" stroke-dasharray="1.3 1.6"/><ellipse cx="264.3" cy="475.9" rx="4.2" ry="2.4" fill="#000"/><path d="M239.1 476.9 L241.1 479.4 L239.1 482.5" stroke="#fff" stroke-width="1.2" fill="none"/><ellipse cx="243.6" cy="479.0" rx="4.2" ry="2.4" fill="none" stroke="#fff" stroke-width="0.7" stroke-dasharray="1.3 1.6"/><ellipse cx="244.5" cy="479.7" rx="4.2" ry="2.4" fill="#000"/><path d="M243.5 479.7 L245.5 482.2 L243.5 485.3" stroke="#fff" stroke-width="1.2" fill="none"/><ellipse cx="248.0" cy="481.8" rx="4.2" ry="2.4" fill="none" stroke="#fff" stroke-width="0.7" stroke-dasharray="1.3 1.6"/><ellipse cx="248.9" cy="482.5" rx="4.2" ry="2.4" fill="#000"/><path d="M252.3 480.2 L254.3 482.7 L252.3 485.8" stroke="#fff" stroke-width="1.2" fill="none"/><ellipse cx="256.8" cy="482.3" rx="4.2" ry="2.4" fill="none" stroke="#fff" stroke-width="0.7" stroke-dasharray="1.3 1.6"/><ellipse cx="257.7" cy="483.0" rx="4.2" ry="2.4" fill="#000"/><path d="M257.8 478.6 L259.8 481.1 L257.8 484.2" stroke="#fff" stroke-width="1.2" fill="none"/><ellipse cx="262.3" cy="480.7" rx="4.2" ry="2.4" fill="none" stroke="#fff" stroke-width="0.7" stroke-dasharray="1.3 1.6"/><ellipse cx="263.2" cy="481.4" rx="4.2" ry="2.4" fill="#000"/><path d="M275.4 476.9 L277.4 479.4 L275.4 482.5" stroke="#fff" stroke-width="1.2" fill="none"/><ellipse cx="279.9" cy="479.0" rx="4.2" ry="2.4" fill="none" stroke="#fff" stroke-width="0.7" stroke-dasharray="1.3 1.6"/><ellipse cx="280.8" cy="479.7" rx="4.2" ry="2.4" fill="#000"/><path d="M285.3 479.1 L287.3 481.6 L285.3 484.7" stroke="#fff" stroke-width="1.2" fill="none"/><ellipse cx="289.8" cy="481.2" rx="4.2" ry="2.4" fill="none" stroke="#fff" stroke-width="0.7" stroke-dasharray="1.3 1.6"/><ellipse cx="290.7" cy="481.9" rx="4.2" ry="2.4" fill="#000"/><path d="M308.4 483.0 L310.4 485.5 L308.4 488.6" stroke="#fff" stroke-width="1.2" fill="none"/><ellipse cx="312.9" cy="485.1" rx="4.2" ry="2.4" fill="none" stroke="#fff" stroke-width="0.7" stroke-dasharray="1.3 1.6"/><ellipse cx="313.8" cy="485.8" rx="4.2" ry="2.4" fill="#000"/><path d="M232.5 483.0 L234.5 485.5 L232.5 488.6" stroke="#fff" stroke-width="1.2" fill="none"/><ellipse cx="237.0" cy="485.1" rx="4.2" ry="2.4" fill="none" stroke="#fff" stroke-width="0.7" stroke-dasharray="1.3 1.6"/><ellipse cx="237.9" cy="485.8" rx="4.2" ry="2.4" fill="#000"/><path d="M242.4 486.3 L244.4 488.8 L242.4 491.9" stroke="#fff" stroke-width="1.2" fill="none"/><ellipse cx="246.9" cy="488.4" rx="4.2" ry="2.4" fill="none" stroke="#fff" stroke-width="0.7" stroke-dasharray="1.3 1.6"/><ellipse cx="247.8" cy="489.1" rx="4.2" ry="2.4" fill="#000"/><path d="M257.8 485.2 L259.8 487.7 L257.8 490.8" stroke="#fff" stroke-width="1.2" fill="none"/><ellipse cx="262.3" cy="487.3" rx="4.2" ry="2.4" fill="none" stroke="#fff" stroke-width="0.7" stroke-dasharray="1.3 1.6"/><ellipse cx="263.2" cy="488.0" rx="4.2" ry="2.4" fill="#000"/><path d="M268.8 489.0 L270.8 491.5 L268.8 494.6" stroke="#fff" stroke-width="1.2" fill="none"/><ellipse cx="273.3" cy="491.1" rx="4.2" ry="2.4" fill="none" stroke="#fff" stroke-width="0.7" stroke-dasharray="1.3 1.6"/><ellipse cx="274.2" cy="491.8" rx="4.2" ry="2.4" fill="#000"/><path d="M278.7 487.9 L280.7 490.4 L278.7 493.5" stroke="#fff" stroke-width="1.2" fill="none"/><ellipse cx="283.2" cy="490.0" rx="4.2" ry="2.4" fill="none" stroke="#fff" stroke-width="0.7" stroke-dasharray="1.3 1.6"/><ellipse cx="284.1" cy="490.7" rx="4.2" ry="2.4" fill="#000"/><path d="M287.5 486.8 L289.5 489.3 L287.5 492.4" stroke="#fff" stroke-width="1.2" fill="none"/><ellipse cx="292.0" cy="488.9" rx="4.2" ry="2.4" fill="none" stroke="#fff" stroke-width="0.7" stroke-dasharray="1.3 1.6"/><ellipse cx="292.9" cy="489.6" rx="4.2" ry="2.4" fill="#000"/><path d="M294.1 489.0 L296.1 491.5 L294.1 494.6" stroke="#fff" stroke-width="1.2" fill="none"/><ellipse cx="298.6" cy="491.1" rx="4.2" ry="2.4" fill="none" stroke="#fff" stroke-width="0.7" stroke-dasharray="1.3 1.6"/><ellipse cx="299.5" cy="491.8" rx="4.2" ry="2.4" fill="#000"/><path d="M305.1 489.0 L307.1 491.5 L305.1 494.6" stroke="#fff" stroke-width="1.2" fill="none"/><ellipse cx="309.6" cy="491.1" rx="4.2" ry="2.4" fill="none" stroke="#fff" stroke-width="0.7" stroke-dasharray="1.3 1.6"/><ellipse cx="310.5" cy="491.8" rx="4.2" ry="2.4" fill="#000"/><path d="M315.0 487.4 L317.0 489.9 L315.0 493.0" stroke="#fff" stroke-width="1.2" fill="none"/><ellipse cx="319.5" cy="489.5" rx="4.2" ry="2.4" fill="none" stroke="#fff" stroke-width="0.7" stroke-dasharray="1.3 1.6"/><ellipse cx="320.4" cy="490.2" rx="4.2" ry="2.4" fill="#000"/><path d="M327.1 488.5 L329.1 491.0 L327.1 494.1" stroke="#fff" stroke-width="1.2" fill="none"/><ellipse cx="331.6" cy="490.6" rx="4.2" ry="2.4" fill="none" stroke="#fff" stroke-width="0.7" stroke-dasharray="1.3 1.6"/><ellipse cx="332.5" cy="491.3" rx="4.2" ry="2.4" fill="#000"/><path d="M252.3 488.5 L254.3 491.0 L252.3 494.1" stroke="#fff" stroke-width="1.2" fill="none"/><ellipse cx="256.8" cy="490.6" rx="4.2" ry="2.4" fill="none" stroke="#fff" stroke-width="0.7" stroke-dasharray="1.3 1.6"/><ellipse cx="257.7" cy="491.3" rx="4.2" ry="2.4" fill="#000"/><path d="M218.2 397.7 L220.2 400.2 L218.2 403.3" stroke="#fff" stroke-width="1.2" fill="none"/><ellipse cx="222.7" cy="399.8" rx="4.2" ry="2.4" fill="none" stroke="#fff" stroke-width="0.7" stroke-dasharray="1.3 1.6"/><ellipse cx="223.6" cy="400.5" rx="4.2" ry="2.4" fill="#000"/><path d="M216.0 408.7 L218.0 411.2 L216.0 414.3" stroke="#fff" stroke-width="1.2" fill="none"/><ellipse cx="220.5" cy="410.8" rx="4.2" ry="2.4" fill="none" stroke="#fff" stroke-width="0.7" stroke-dasharray="1.3 1.6"/><ellipse cx="221.4" cy="411.5" rx="4.2" ry="2.4" fill="#000"/><path d="M222.6 413.1 L224.6 415.6 L222.6 418.7" stroke="#fff" stroke-width="1.2" fill="none"/><ellipse cx="227.1" cy="415.2" rx="4.2" ry="2.4" fill="none" stroke="#fff" stroke-width="0.7" stroke-dasharray="1.3 1.6"/><ellipse cx="228.0" cy="415.9" rx="4.2" ry="2.4" fill="#000"/><path d="M218.2 419.7 L220.2 422.2 L218.2 425.3" stroke="#fff" stroke-width="1.2" fill="none"/><ellipse cx="222.7" cy="421.8" rx="4.2" ry="2.4" fill="none" stroke="#fff" stroke-width="0.7" stroke-dasharray="1.3 1.6"/><ellipse cx="223.6" cy="422.5" rx="4.2" ry="2.4" fill="#000"/><path d="M228.1 431.8 L230.1 434.3 L228.1 437.4" stroke="#fff" stroke-width="1.2" fill="none"/><ellipse cx="232.6" cy="433.9" rx="4.2" ry="2.4" fill="none" stroke="#fff" stroke-width="0.7" stroke-dasharray="1.3 1.6"/><ellipse cx="233.5" cy="434.6" rx="4.2" ry="2.4" fill="#000"/><path d="M216.0 438.4 L218.0 440.9 L216.0 444.0" stroke="#fff" stroke-width="1.2" fill="none"/><ellipse cx="220.5" cy="440.5" rx="4.2" ry="2.4" fill="none" stroke="#fff" stroke-width="0.7" stroke-dasharray="1.3 1.6"/><ellipse cx="221.4" cy="441.2" rx="4.2" ry="2.4" fill="#000"/><path d="M218.2 445.0 L220.2 447.5 L218.2 450.6" stroke="#fff" stroke-width="1.2" fill="none"/><ellipse cx="222.7" cy="447.1" rx="4.2" ry="2.4" fill="none" stroke="#fff" stroke-width="0.7" stroke-dasharray="1.3 1.6"/><ellipse cx="223.6" cy="447.8" rx="4.2" ry="2.4" fill="#000"/><path d="M221.5 452.7 L223.5 455.2 L221.5 458.3" stroke="#fff" stroke-width="1.2" fill="none"/><ellipse cx="226.0" cy="454.8" rx="4.2" ry="2.4" fill="none" stroke="#fff" stroke-width="0.7" stroke-dasharray="1.3 1.6"/><ellipse cx="226.9" cy="455.5" rx="4.2" ry="2.4" fill="#000"/><path d="M216.0 460.4 L218.0 462.9 L216.0 466.0" stroke="#fff" stroke-width="1.2" fill="none"/><ellipse cx="220.5" cy="462.5" rx="4.2" ry="2.4" fill="none" stroke="#fff" stroke-width="0.7" stroke-dasharray="1.3 1.6"/><ellipse cx="221.4" cy="463.2" rx="4.2" ry="2.4" fill="#000"/><path d="M221.5 467.0 L223.5 469.5 L221.5 472.6" stroke="#fff" stroke-width="1.2" fill="none"/><ellipse cx="226.0" cy="469.1" rx="4.2" ry="2.4" fill="none" stroke="#fff" stroke-width="0.7" stroke-dasharray="1.3 1.6"/><ellipse cx="226.9" cy="469.8" rx="4.2" ry="2.4" fill="#000"/><path d="M224.8 471.4 L226.8 473.9 L224.8 477.0" stroke="#fff" stroke-width="1.2" fill="none"/><ellipse cx="229.3" cy="473.5" rx="4.2" ry="2.4" fill="none" stroke="#fff" stroke-width="0.7" stroke-dasharray="1.3 1.6"/><ellipse cx="230.2" cy="474.2" rx="4.2" ry="2.4" fill="#000"/><path d="M218.2 475.8 L220.2 478.3 L218.2 481.4" stroke="#fff" stroke-width="1.2" fill="none"/><ellipse cx="222.7" cy="477.9" rx="4.2" ry="2.4" fill="none" stroke="#fff" stroke-width="0.7" stroke-dasharray="1.3 1.6"/><ellipse cx="223.6" cy="478.6" rx="4.2" ry="2.4" fill="#000"/><path d="M225.9 480.2 L227.9 482.7 L225.9 485.8" stroke="#fff" stroke-width="1.2" fill="none"/><ellipse cx="230.4" cy="482.3" rx="4.2" ry="2.4" fill="none" stroke="#fff" stroke-width="0.7" stroke-dasharray="1.3 1.6"/><ellipse cx="231.3" cy="483.0" rx="4.2" ry="2.4" fill="#000"/><path d="M220.4 484.6 L222.4 487.1 L220.4 490.2" stroke="#fff" stroke-width="1.2" fill="none"/><ellipse cx="224.9" cy="486.7" rx="4.2" ry="2.4" fill="none" stroke="#fff" stroke-width="0.7" stroke-dasharray="1.3 1.6"/><ellipse cx="225.8" cy="487.4" rx="4.2" ry="2.4" fill="#000"/><path d="M227.0 487.9 L229.0 490.4 L227.0 493.5" stroke="#fff" stroke-width="1.2" fill="none"/><ellipse cx="231.5" cy="490.0" rx="4.2" ry="2.4" fill="none" stroke="#fff" stroke-width="0.7" stroke-dasharray="1.3 1.6"/><ellipse cx="232.4" cy="490.7" rx="4.2" ry="2.4" fill="#000"/><path d="M216.0 489.0 L218.0 491.5 L216.0 494.6" stroke="#fff" stroke-width="1.2" fill="none"/><ellipse cx="220.5" cy="491.1" rx="4.2" ry="2.4" fill="none" stroke="#fff" stroke-width="0.7" stroke-dasharray="1.3 1.6"/><ellipse cx="221.4" cy="491.8" rx="4.2" ry="2.4" fill="#000"/><path d="M233.6 486.8 L235.6 489.3 L233.6 492.4" stroke="#fff" stroke-width="1.2" fill="none"/><ellipse cx="238.1" cy="488.9" rx="4.2" ry="2.4" fill="none" stroke="#fff" stroke-width="0.7" stroke-dasharray="1.3 1.6"/><ellipse cx="239.0" cy="489.6" rx="4.2" ry="2.4" fill="#000"/><path d="M350.9 400.1 L352.9 402.6 L350.9 405.7" stroke="#fff" stroke-width="1.2" fill="none"/><ellipse cx="355.4" cy="402.2" rx="4.2" ry="2.4" fill="none" stroke="#fff" stroke-width="0.7" stroke-dasharray="1.3 1.6"/><ellipse cx="356.3" cy="402.9" rx="4.2" ry="2.4" fill="#000"/><path d="M341.5 406.0 L343.5 408.5 L341.5 411.6" stroke="#fff" stroke-width="1.2" fill="none"/><ellipse cx="346.0" cy="408.1" rx="4.2" ry="2.4" fill="none" stroke="#fff" stroke-width="0.7" stroke-dasharray="1.3 1.6"/><ellipse cx="346.9" cy="408.8" rx="4.2" ry="2.4" fill="#000"/><path d="M347.6 415.9 L349.6 418.4 L347.6 421.5" stroke="#fff" stroke-width="1.2" fill="none"/><ellipse cx="352.1" cy="418.0" rx="4.2" ry="2.4" fill="none" stroke="#fff" stroke-width="0.7" stroke-dasharray="1.3 1.6"/><ellipse cx="353.0" cy="418.7" rx="4.2" ry="2.4" fill="#000"/><path d="M335.5 430.7 L337.5 433.2 L335.5 436.3" stroke="#fff" stroke-width="1.2" fill="none"/><ellipse cx="340.0" cy="432.8" rx="4.2" ry="2.4" fill="none" stroke="#fff" stroke-width="0.7" stroke-dasharray="1.3 1.6"/><ellipse cx="340.9" cy="433.5" rx="4.2" ry="2.4" fill="#000"/><path d="M391.6 429.6 L393.6 432.1 L391.6 435.2" stroke="#fff" stroke-width="1.2" fill="none"/><ellipse cx="396.1" cy="431.7" rx="4.2" ry="2.4" fill="none" stroke="#fff" stroke-width="0.7" stroke-dasharray="1.3 1.6"/><ellipse cx="397.0" cy="432.4" rx="4.2" ry="2.4" fill="#000"/><path d="M371.2 438.2 L373.2 440.7 L371.2 443.8" stroke="#fff" stroke-width="1.2" fill="none"/><ellipse cx="375.7" cy="440.3" rx="4.2" ry="2.4" fill="none" stroke="#fff" stroke-width="0.7" stroke-dasharray="1.3 1.6"/><ellipse cx="376.6" cy="441.0" rx="4.2" ry="2.4" fill="#000"/><path d="M347.0 456.9 L349.0 459.4 L347.0 462.5" stroke="#fff" stroke-width="1.2" fill="none"/><ellipse cx="351.5" cy="459.0" rx="4.2" ry="2.4" fill="none" stroke="#fff" stroke-width="0.7" stroke-dasharray="1.3 1.6"/><ellipse cx="352.4" cy="459.7" rx="4.2" ry="2.4" fill="#000"/><path d="M355.3 481.5 L357.3 484.0 L355.3 487.1" stroke="#fff" stroke-width="1.2" fill="none"/><ellipse cx="359.8" cy="483.6" rx="4.2" ry="2.4" fill="none" stroke="#fff" stroke-width="0.7" stroke-dasharray="1.3 1.6"/><ellipse cx="360.7" cy="484.3" rx="4.2" ry="2.4" fill="#000"/><path d="M343.2 485.2 L345.2 487.7 L343.2 490.8" stroke="#fff" stroke-width="1.2" fill="none"/><ellipse cx="347.7" cy="487.3" rx="4.2" ry="2.4" fill="none" stroke="#fff" stroke-width="0.7" stroke-dasharray="1.3 1.6"/><ellipse cx="348.6" cy="488.0" rx="4.2" ry="2.4" fill="#000"/><path d="M339.3 489.0 L341.3 491.5 L339.3 494.6" stroke="#fff" stroke-width="1.2" fill="none"/><ellipse cx="343.8" cy="491.1" rx="4.2" ry="2.4" fill="none" stroke="#fff" stroke-width="0.7" stroke-dasharray="1.3 1.6"/><ellipse cx="344.7" cy="491.8" rx="4.2" ry="2.4" fill="#000"/><path d="M360.8 489.0 L362.8 491.5 L360.8 494.6" stroke="#fff" stroke-width="1.2" fill="none"/><ellipse cx="365.3" cy="491.1" rx="4.2" ry="2.4" fill="none" stroke="#fff" stroke-width="0.7" stroke-dasharray="1.3 1.6"/><ellipse cx="366.2" cy="491.8" rx="4.2" ry="2.4" fill="#000"/><path d="M375.1 485.2 L377.1 487.7 L375.1 490.8" stroke="#fff" stroke-width="1.2" fill="none"/><ellipse cx="379.6" cy="487.3" rx="4.2" ry="2.4" fill="none" stroke="#fff" stroke-width="0.7" stroke-dasharray="1.3 1.6"/><ellipse cx="380.5" cy="488.0" rx="4.2" ry="2.4" fill="#000"/><path d="M376.7 489.0 L378.7 491.5 L376.7 494.6" stroke="#fff" stroke-width="1.2" fill="none"/><ellipse cx="381.2" cy="491.1" rx="4.2" ry="2.4" fill="none" stroke="#fff" stroke-width="0.7" stroke-dasharray="1.3 1.6"/><ellipse cx="382.1" cy="491.8" rx="4.2" ry="2.4" fill="#000"/><path d="M382.2 488.8 L384.2 491.3 L382.2 494.4" stroke="#fff" stroke-width="1.2" fill="none"/><ellipse cx="386.7" cy="490.9" rx="4.2" ry="2.4" fill="none" stroke="#fff" stroke-width="0.7" stroke-dasharray="1.3 1.6"/><ellipse cx="387.6" cy="491.6" rx="4.2" ry="2.4" fill="#000"/><path d="M421.3 489.0 L423.3 491.5 L421.3 494.6" stroke="#fff" stroke-width="1.2" fill="none"/><ellipse cx="425.8" cy="491.1" rx="4.2" ry="2.4" fill="none" stroke="#fff" stroke-width="0.7" stroke-dasharray="1.3 1.6"/><ellipse cx="426.7" cy="491.8" rx="4.2" ry="2.4" fill="#000"/><path d="M539.0 435.4 L541.0 437.9 L539.0 441.0" stroke="#fff" stroke-width="1.2" fill="none"/><ellipse cx="543.5" cy="437.5" rx="4.2" ry="2.4" fill="none" stroke="#fff" stroke-width="0.7" stroke-dasharray="1.3 1.6"/><ellipse cx="544.4" cy="438.2" rx="4.2" ry="2.4" fill="#000"/><path d="M501.3 455.3 L503.3 457.8 L501.3 460.9" stroke="#fff" stroke-width="1.2" fill="none"/><ellipse cx="505.8" cy="457.4" rx="4.2" ry="2.4" fill="none" stroke="#fff" stroke-width="0.7" stroke-dasharray="1.3 1.6"/><ellipse cx="506.7" cy="458.1" rx="4.2" ry="2.4" fill="#000"/><path d="M214.1 193.2 L216.1 195.7 L214.1 198.8" stroke="#fff" stroke-width="1.2" fill="none"/><ellipse cx="218.6" cy="195.3" rx="4.2" ry="2.4" fill="none" stroke="#fff" stroke-width="0.7" stroke-dasharray="1.3 1.6"/><ellipse cx="219.5" cy="196.0" rx="4.2" ry="2.4" fill="#000"/><path d="M214.1 198.2 L216.1 200.7 L214.1 203.8" stroke="#fff" stroke-width="1.2" fill="none"/><ellipse cx="218.6" cy="200.3" rx="4.2" ry="2.4" fill="none" stroke="#fff" stroke-width="0.7" stroke-dasharray="1.3 1.6"/><ellipse cx="219.5" cy="201.0" rx="4.2" ry="2.4" fill="#000"/><path d="M214.1 203.2 L216.1 205.7 L214.1 208.8" stroke="#fff" stroke-width="1.2" fill="none"/><ellipse cx="218.6" cy="205.3" rx="4.2" ry="2.4" fill="none" stroke="#fff" stroke-width="0.7" stroke-dasharray="1.3 1.6"/><ellipse cx="219.5" cy="206.0" rx="4.2" ry="2.4" fill="#000"/><path d="M214.1 208.2 L216.1 210.7 L214.1 213.8" stroke="#fff" stroke-width="1.2" fill="none"/><ellipse cx="218.6" cy="210.3" rx="4.2" ry="2.4" fill="none" stroke="#fff" stroke-width="0.7" stroke-dasharray="1.3 1.6"/><ellipse cx="219.5" cy="211.0" rx="4.2" ry="2.4" fill="#000"/><path d="M214.1 213.2 L216.1 215.7 L214.1 218.8" stroke="#fff" stroke-width="1.2" fill="none"/><ellipse cx="218.6" cy="215.3" rx="4.2" ry="2.4" fill="none" stroke="#fff" stroke-width="0.7" stroke-dasharray="1.3 1.6"/><ellipse cx="219.5" cy="216.0" rx="4.2" ry="2.4" fill="#000"/><path d="M214.1 218.2 L216.1 220.7 L214.1 223.8" stroke="#fff" stroke-width="1.2" fill="none"/><ellipse cx="218.6" cy="220.3" rx="4.2" ry="2.4" fill="none" stroke="#fff" stroke-width="0.7" stroke-dasharray="1.3 1.6"/><ellipse cx="219.5" cy="221.0" rx="4.2" ry="2.4" fill="#000"/><path d="M214.1 223.2 L216.1 225.7 L214.1 228.8" stroke="#fff" stroke-width="1.2" fill="none"/><ellipse cx="218.6" cy="225.3" rx="4.2" ry="2.4" fill="none" stroke="#fff" stroke-width="0.7" stroke-dasharray="1.3 1.6"/><ellipse cx="219.5" cy="226.0" rx="4.2" ry="2.4" fill="#000"/><path d="M214.1 228.2 L216.1 230.7 L214.1 233.8" stroke="#fff" stroke-width="1.2" fill="none"/><ellipse cx="218.6" cy="230.3" rx="4.2" ry="2.4" fill="none" stroke="#fff" stroke-width="0.7" stroke-dasharray="1.3 1.6"/><ellipse cx="219.5" cy="231.0" rx="4.2" ry="2.4" fill="#000"/><path d="M214.1 267.2 L216.1 269.7 L214.1 272.8" stroke="#fff" stroke-width="1.2" fill="none"/><ellipse cx="218.6" cy="269.3" rx="4.2" ry="2.4" fill="none" stroke="#fff" stroke-width="0.7" stroke-dasharray="1.3 1.6"/><ellipse cx="219.5" cy="270.0" rx="4.2" ry="2.4" fill="#000"/><path d="M214.1 271.2 L216.1 273.7 L214.1 276.8" stroke="#fff" stroke-width="1.2" fill="none"/><ellipse cx="218.6" cy="273.3" rx="4.2" ry="2.4" fill="none" stroke="#fff" stroke-width="0.7" stroke-dasharray="1.3 1.6"/><ellipse cx="219.5" cy="274.0" rx="4.2" ry="2.4" fill="#000"/><path d="M214.1 275.2 L216.1 277.7 L214.1 280.8" stroke="#fff" stroke-width="1.2" fill="none"/><ellipse cx="218.6" cy="277.3" rx="4.2" ry="2.4" fill="none" stroke="#fff" stroke-width="0.7" stroke-dasharray="1.3 1.6"/><ellipse cx="219.5" cy="278.0" rx="4.2" ry="2.4" fill="#000"/><path d="M214.1 279.2 L216.1 281.7 L214.1 284.8" stroke="#fff" stroke-width="1.2" fill="none"/><ellipse cx="218.6" cy="281.3" rx="4.2" ry="2.4" fill="none" stroke="#fff" stroke-width="0.7" stroke-dasharray="1.3 1.6"/><ellipse cx="219.5" cy="282.0" rx="4.2" ry="2.4" fill="#000"/><path d="M214.1 283.2 L216.1 285.7 L214.1 288.8" stroke="#fff" stroke-width="1.2" fill="none"/><ellipse cx="218.6" cy="285.3" rx="4.2" ry="2.4" fill="none" stroke="#fff" stroke-width="0.7" stroke-dasharray="1.3 1.6"/><ellipse cx="219.5" cy="286.0" rx="4.2" ry="2.4" fill="#000"/><path d="M214.1 287.2 L216.1 289.7 L214.1 292.8" stroke="#fff" stroke-width="1.2" fill="none"/><ellipse cx="218.6" cy="289.3" rx="4.2" ry="2.4" fill="none" stroke="#fff" stroke-width="0.7" stroke-dasharray="1.3 1.6"/><ellipse cx="219.5" cy="290.0" rx="4.2" ry="2.4" fill="#000"/><path d="M214.1 291.2 L216.1 293.7 L214.1 296.8" stroke="#fff" stroke-width="1.2" fill="none"/><ellipse cx="218.6" cy="293.3" rx="4.2" ry="2.4" fill="none" stroke="#fff" stroke-width="0.7" stroke-dasharray="1.3 1.6"/><ellipse cx="219.5" cy="294.0" rx="4.2" ry="2.4" fill="#000"/><path d="M214.1 295.2 L216.1 297.7 L214.1 300.8" stroke="#fff" stroke-width="1.2" fill="none"/><ellipse cx="218.6" cy="297.3" rx="4.2" ry="2.4" fill="none" stroke="#fff" stroke-width="0.7" stroke-dasharray="1.3 1.6"/><ellipse cx="219.5" cy="298.0" rx="4.2" ry="2.4" fill="#000"/><path d="M214.1 299.2 L216.1 301.7 L214.1 304.8" stroke="#fff" stroke-width="1.2" fill="none"/><ellipse cx="218.6" cy="301.3" rx="4.2" ry="2.4" fill="none" stroke="#fff" stroke-width="0.7" stroke-dasharray="1.3 1.6"/><ellipse cx="219.5" cy="302.0" rx="4.2" ry="2.4" fill="#000"/><path d="M214.1 303.2 L216.1 305.7 L214.1 308.8" stroke="#fff" stroke-width="1.2" fill="none"/><ellipse cx="218.6" cy="305.3" rx="4.2" ry="2.4" fill="none" stroke="#fff" stroke-width="0.7" stroke-dasharray="1.3 1.6"/><ellipse cx="219.5" cy="306.0" rx="4.2" ry="2.4" fill="#000"/><path d="M214.1 307.2 L216.1 309.7 L214.1 312.8" stroke="#fff" stroke-width="1.2" fill="none"/><ellipse cx="218.6" cy="309.3" rx="4.2" ry="2.4" fill="none" stroke="#fff" stroke-width="0.7" stroke-dasharray="1.3 1.6"/><ellipse cx="219.5" cy="310.0" rx="4.2" ry="2.4" fill="#000"/><path d="M214.1 311.2 L216.1 313.7 L214.1 316.8" stroke="#fff" stroke-width="1.2" fill="none"/><ellipse cx="218.6" cy="313.3" rx="4.2" ry="2.4" fill="none" stroke="#fff" stroke-width="0.7" stroke-dasharray="1.3 1.6"/><ellipse cx="219.5" cy="314.0" rx="4.2" ry="2.4" fill="#000"/><path d="M214.1 315.2 L216.1 317.7 L214.1 320.8" stroke="#fff" stroke-width="1.2" fill="none"/><ellipse cx="218.6" cy="317.3" rx="4.2" ry="2.4" fill="none" stroke="#fff" stroke-width="0.7" stroke-dasharray="1.3 1.6"/><ellipse cx="219.5" cy="318.0" rx="4.2" ry="2.4" fill="#000"/><path d="M214.1 319.2 L216.1 321.7 L214.1 324.8" stroke="#fff" stroke-width="1.2" fill="none"/><ellipse cx="218.6" cy="321.3" rx="4.2" ry="2.4" fill="none" stroke="#fff" stroke-width="0.7" stroke-dasharray="1.3 1.6"/><ellipse cx="219.5" cy="322.0" rx="4.2" ry="2.4" fill="#000"/><path d="M214.1 323.2 L216.1 325.7 L214.1 328.8" stroke="#fff" stroke-width="1.2" fill="none"/><ellipse cx="218.6" cy="325.3" rx="4.2" ry="2.4" fill="none" stroke="#fff" stroke-width="0.7" stroke-dasharray="1.3 1.6"/><ellipse cx="219.5" cy="326.0" rx="4.2" ry="2.4" fill="#000"/><path d="M214.1 327.2 L216.1 329.7 L214.1 332.8" stroke="#fff" stroke-width="1.2" fill="none"/><ellipse cx="218.6" cy="329.3" rx="4.2" ry="2.4" fill="none" stroke="#fff" stroke-width="0.7" stroke-dasharray="1.3 1.6"/><ellipse cx="219.5" cy="330.0" rx="4.2" ry="2.4" fill="#000"/><path d="M214.1 331.2 L216.1 333.7 L214.1 336.8" stroke="#fff" stroke-width="1.2" fill="none"/><ellipse cx="218.6" cy="333.3" rx="4.2" ry="2.4" fill="none" stroke="#fff" stroke-width="0.7" stroke-dasharray="1.3 1.6"/><ellipse cx="219.5" cy="334.0" rx="4.2" ry="2.4" fill="#000"/><path d="M214.1 335.2 L216.1 337.7 L214.1 340.8" stroke="#fff" stroke-width="1.2" fill="none"/><ellipse cx="218.6" cy="337.3" rx="4.2" ry="2.4" fill="none" stroke="#fff" stroke-width="0.7" stroke-dasharray="1.3 1.6"/><ellipse cx="219.5" cy="338.0" rx="4.2" ry="2.4" fill="#000"/><path d="M214.1 339.2 L216.1 341.7 L214.1 344.8" stroke="#fff" stroke-width="1.2" fill="none"/><ellipse cx="218.6" cy="341.3" rx="4.2" ry="2.4" fill="none" stroke="#fff" stroke-width="0.7" stroke-dasharray="1.3 1.6"/><ellipse cx="219.5" cy="342.0" rx="4.2" ry="2.4" fill="#000"/><path d="M214.1 343.2 L216.1 345.7 L214.1 348.8" stroke="#fff" stroke-width="1.2" fill="none"/><ellipse cx="218.6" cy="345.3" rx="4.2" ry="2.4" fill="none" stroke="#fff" stroke-width="0.7" stroke-dasharray="1.3 1.6"/><ellipse cx="219.5" cy="346.0" rx="4.2" ry="2.4" fill="#000"/><path d="M214.1 347.2 L216.1 349.7 L214.1 352.8" stroke="#fff" stroke-width="1.2" fill="none"/><ellipse cx="218.6" cy="349.3" rx="4.2" ry="2.4" fill="none" stroke="#fff" stroke-width="0.7" stroke-dasharray="1.3 1.6"/><ellipse cx="219.5" cy="350.0" rx="4.2" ry="2.4" fill="#000"/><path d="M214.1 351.2 L216.1 353.7 L214.1 356.8" stroke="#fff" stroke-width="1.2" fill="none"/><ellipse cx="218.6" cy="353.3" rx="4.2" ry="2.4" fill="none" stroke="#fff" stroke-width="0.7" stroke-dasharray="1.3 1.6"/><ellipse cx="219.5" cy="354.0" rx="4.2" ry="2.4" fill="#000"/><path d="M214.1 355.2 L216.1 357.7 L214.1 360.8" stroke="#fff" stroke-width="1.2" fill="none"/><ellipse cx="218.6" cy="357.3" rx="4.2" ry="2.4" fill="none" stroke="#fff" stroke-width="0.7" stroke-dasharray="1.3 1.6"/><ellipse cx="219.5" cy="358.0" rx="4.2" ry="2.4" fill="#000"/><path d="M214.1 359.2 L216.1 361.7 L214.1 364.8" stroke="#fff" stroke-width="1.2" fill="none"/><ellipse cx="218.6" cy="361.3" rx="4.2" ry="2.4" fill="none" stroke="#fff" stroke-width="0.7" stroke-dasharray="1.3 1.6"/><ellipse cx="219.5" cy="362.0" rx="4.2" ry="2.4" fill="#000"/><path d="M214.1 363.2 L216.1 365.7 L214.1 368.8" stroke="#fff" stroke-width="1.2" fill="none"/><ellipse cx="218.6" cy="365.3" rx="4.2" ry="2.4" fill="none" stroke="#fff" stroke-width="0.7" stroke-dasharray="1.3 1.6"/><ellipse cx="219.5" cy="366.0" rx="4.2" ry="2.4" fill="#000"/><path d="M214.1 367.2 L216.1 369.7 L214.1 372.8" stroke="#fff" stroke-width="1.2" fill="none"/><ellipse cx="218.6" cy="369.3" rx="4.2" ry="2.4" fill="none" stroke="#fff" stroke-width="0.7" stroke-dasharray="1.3 1.6"/><ellipse cx="219.5" cy="370.0" rx="4.2" ry="2.4" fill="#000"/><path d="M214.1 371.2 L216.1 373.7 L214.1 376.8" stroke="#fff" stroke-width="1.2" fill="none"/><ellipse cx="218.6" cy="373.3" rx="4.2" ry="2.4" fill="none" stroke="#fff" stroke-width="0.7" stroke-dasharray="1.3 1.6"/><ellipse cx="219.5" cy="374.0" rx="4.2" ry="2.4" fill="#000"/><path d="M214.1 375.2 L216.1 377.7 L214.1 380.8" stroke="#fff" stroke-width="1.2" fill="none"/><ellipse cx="218.6" cy="377.3" rx="4.2" ry="2.4" fill="none" stroke="#fff" stroke-width="0.7" stroke-dasharray="1.3 1.6"/><ellipse cx="219.5" cy="378.0" rx="4.2" ry="2.4" fill="#000"/><path d="M214.1 379.2 L216.1 381.7 L214.1 384.8" stroke="#fff" stroke-width="1.2" fill="none"/><ellipse cx="218.6" cy="381.3" rx="4.2" ry="2.4" fill="none" stroke="#fff" stroke-width="0.7" stroke-dasharray="1.3 1.6"/><ellipse cx="219.5" cy="382.0" rx="4.2" ry="2.4" fill="#000"/><path d="M214.1 383.2 L216.1 385.7 L214.1 388.8" stroke="#fff" stroke-width="1.2" fill="none"/><ellipse cx="218.6" cy="385.3" rx="4.2" ry="2.4" fill="none" stroke="#fff" stroke-width="0.7" stroke-dasharray="1.3 1.6"/><ellipse cx="219.5" cy="386.0" rx="4.2" ry="2.4" fill="#000"/><path d="M214.1 387.2 L216.1 389.7 L214.1 392.8" stroke="#fff" stroke-width="1.2" fill="none"/><ellipse cx="218.6" cy="389.3" rx="4.2" ry="2.4" fill="none" stroke="#fff" stroke-width="0.7" stroke-dasharray="1.3 1.6"/><ellipse cx="219.5" cy="390.0" rx="4.2" ry="2.4" fill="#000"/><path d="M214.1 391.2 L216.1 393.7 L214.1 396.8" stroke="#fff" stroke-width="1.2" fill="none"/><ellipse cx="218.6" cy="393.3" rx="4.2" ry="2.4" fill="none" stroke="#fff" stroke-width="0.7" stroke-dasharray="1.3 1.6"/><ellipse cx="219.5" cy="394.0" rx="4.2" ry="2.4" fill="#000"/><path d="M214.1 395.2 L216.1 397.7 L214.1 400.8" stroke="#fff" stroke-width="1.2" fill="none"/><ellipse cx="218.6" cy="397.3" rx="4.2" ry="2.4" fill="none" stroke="#fff" stroke-width="0.7" stroke-dasharray="1.3 1.6"/><ellipse cx="219.5" cy="398.0" rx="4.2" ry="2.4" fill="#000"/><path d="M214.1 399.2 L216.1 401.7 L214.1 404.8" stroke="#fff" stroke-width="1.2" fill="none"/><ellipse cx="218.6" cy="401.3" rx="4.2" ry="2.4" fill="none" stroke="#fff" stroke-width="0.7" stroke-dasharray="1.3 1.6"/><ellipse cx="219.5" cy="402.0" rx="4.2" ry="2.4" fill="#000"/><path d="M214.1 403.2 L216.1 405.7 L214.1 408.8" stroke="#fff" stroke-width="1.2" fill="none"/><ellipse cx="218.6" cy="405.3" rx="4.2" ry="2.4" fill="none" stroke="#fff" stroke-width="0.7" stroke-dasharray="1.3 1.6"/><ellipse cx="219.5" cy="406.0" rx="4.2" ry="2.4" fill="#000"/><path d="M214.1 407.2 L216.1 409.7 L214.1 412.8" stroke="#fff" stroke-width="1.2" fill="none"/><ellipse cx="218.6" cy="409.3" rx="4.2" ry="2.4" fill="none" stroke="#fff" stroke-width="0.7" stroke-dasharray="1.3 1.6"/><ellipse cx="219.5" cy="410.0" rx="4.2" ry="2.4" fill="#000"/><path d="M214.1 411.2 L216.1 413.7 L214.1 416.8" stroke="#fff" stroke-width="1.2" fill="none"/><ellipse cx="218.6" cy="413.3" rx="4.2" ry="2.4" fill="none" stroke="#fff" stroke-width="0.7" stroke-dasharray="1.3 1.6"/><ellipse cx="219.5" cy="414.0" rx="4.2" ry="2.4" fill="#000"/><path d="M214.1 415.2 L216.1 417.7 L214.1 420.8" stroke="#fff" stroke-width="1.2" fill="none"/><ellipse cx="218.6" cy="417.3" rx="4.2" ry="2.4" fill="none" stroke="#fff" stroke-width="0.7" stroke-dasharray="1.3 1.6"/><ellipse cx="219.5" cy="418.0" rx="4.2" ry="2.4" fill="#000"/><path d="M214.1 419.2 L216.1 421.7 L214.1 424.8" stroke="#fff" stroke-width="1.2" fill="none"/><ellipse cx="218.6" cy="421.3" rx="4.2" ry="2.4" fill="none" stroke="#fff" stroke-width="0.7" stroke-dasharray="1.3 1.6"/><ellipse cx="219.5" cy="422.0" rx="4.2" ry="2.4" fill="#000"/><path d="M214.1 423.2 L216.1 425.7 L214.1 428.8" stroke="#fff" stroke-width="1.2" fill="none"/><ellipse cx="218.6" cy="425.3" rx="4.2" ry="2.4" fill="none" stroke="#fff" stroke-width="0.7" stroke-dasharray="1.3 1.6"/><ellipse cx="219.5" cy="426.0" rx="4.2" ry="2.4" fill="#000"/><path d="M214.1 427.2 L216.1 429.7 L214.1 432.8" stroke="#fff" stroke-width="1.2" fill="none"/><ellipse cx="218.6" cy="429.3" rx="4.2" ry="2.4" fill="none" stroke="#fff" stroke-width="0.7" stroke-dasharray="1.3 1.6"/><ellipse cx="219.5" cy="430.0" rx="4.2" ry="2.4" fill="#000"/><path d="M214.1 431.2 L216.1 433.7 L214.1 436.8" stroke="#fff" stroke-width="1.2" fill="none"/><ellipse cx="218.6" cy="433.3" rx="4.2" ry="2.4" fill="none" stroke="#fff" stroke-width="0.7" stroke-dasharray="1.3 1.6"/><ellipse cx="219.5" cy="434.0" rx="4.2" ry="2.4" fill="#000"/><path d="M214.1 435.2 L216.1 437.7 L214.1 440.8" stroke="#fff" stroke-width="1.2" fill="none"/><ellipse cx="218.6" cy="437.3" rx="4.2" ry="2.4" fill="none" stroke="#fff" stroke-width="0.7" stroke-dasharray="1.3 1.6"/><ellipse cx="219.5" cy="438.0" rx="4.2" ry="2.4" fill="#000"/><path d="M214.1 439.2 L216.1 441.7 L214.1 444.8" stroke="#fff" stroke-width="1.2" fill="none"/><ellipse cx="218.6" cy="441.3" rx="4.2" ry="2.4" fill="none" stroke="#fff" stroke-width="0.7" stroke-dasharray="1.3 1.6"/><ellipse cx="219.5" cy="442.0" rx="4.2" ry="2.4" fill="#000"/><path d="M214.1 443.2 L216.1 445.7 L214.1 448.8" stroke="#fff" stroke-width="1.2" fill="none"/><ellipse cx="218.6" cy="445.3" rx="4.2" ry="2.4" fill="none" stroke="#fff" stroke-width="0.7" stroke-dasharray="1.3 1.6"/><ellipse cx="219.5" cy="446.0" rx="4.2" ry="2.4" fill="#000"/><path d="M214.1 447.2 L216.1 449.7 L214.1 452.8" stroke="#fff" stroke-width="1.2" fill="none"/><ellipse cx="218.6" cy="449.3" rx="4.2" ry="2.4" fill="none" stroke="#fff" stroke-width="0.7" stroke-dasharray="1.3 1.6"/><ellipse cx="219.5" cy="450.0" rx="4.2" ry="2.4" fill="#000"/><path d="M214.1 451.2 L216.1 453.7 L214.1 456.8" stroke="#fff" stroke-width="1.2" fill="none"/><ellipse cx="218.6" cy="453.3" rx="4.2" ry="2.4" fill="none" stroke="#fff" stroke-width="0.7" stroke-dasharray="1.3 1.6"/><ellipse cx="219.5" cy="454.0" rx="4.2" ry="2.4" fill="#000"/><path d="M214.1 455.2 L216.1 457.7 L214.1 460.8" stroke="#fff" stroke-width="1.2" fill="none"/><ellipse cx="218.6" cy="457.3" rx="4.2" ry="2.4" fill="none" stroke="#fff" stroke-width="0.7" stroke-dasharray="1.3 1.6"/><ellipse cx="219.5" cy="458.0" rx="4.2" ry="2.4" fill="#000"/><path d="M214.1 459.2 L216.1 461.7 L214.1 464.8" stroke="#fff" stroke-width="1.2" fill="none"/><ellipse cx="218.6" cy="461.3" rx="4.2" ry="2.4" fill="none" stroke="#fff" stroke-width="0.7" stroke-dasharray="1.3 1.6"/><ellipse cx="219.5" cy="462.0" rx="4.2" ry="2.4" fill="#000"/><path d="M214.1 463.2 L216.1 465.7 L214.1 468.8" stroke="#fff" stroke-width="1.2" fill="none"/><ellipse cx="218.6" cy="465.3" rx="4.2" ry="2.4" fill="none" stroke="#fff" stroke-width="0.7" stroke-dasharray="1.3 1.6"/><ellipse cx="219.5" cy="466.0" rx="4.2" ry="2.4" fill="#000"/><path d="M214.1 467.2 L216.1 469.7 L214.1 472.8" stroke="#fff" stroke-width="1.2" fill="none"/><ellipse cx="218.6" cy="469.3" rx="4.2" ry="2.4" fill="none" stroke="#fff" stroke-width="0.7" stroke-dasharray="1.3 1.6"/><ellipse cx="219.5" cy="470.0" rx="4.2" ry="2.4" fill="#000"/><path d="M214.1 471.2 L216.1 473.7 L214.1 476.8" stroke="#fff" stroke-width="1.2" fill="none"/><ellipse cx="218.6" cy="473.3" rx="4.2" ry="2.4" fill="none" stroke="#fff" stroke-width="0.7" stroke-dasharray="1.3 1.6"/><ellipse cx="219.5" cy="474.0" rx="4.2" ry="2.4" fill="#000"/><path d="M214.1 475.2 L216.1 477.7 L214.1 480.8" stroke="#fff" stroke-width="1.2" fill="none"/><ellipse cx="218.6" cy="477.3" rx="4.2" ry="2.4" fill="none" stroke="#fff" stroke-width="0.7" stroke-dasharray="1.3 1.6"/><ellipse cx="219.5" cy="478.0" rx="4.2" ry="2.4" fill="#000"/><path d="M214.1 479.2 L216.1 481.7 L214.1 484.8" stroke="#fff" stroke-width="1.2" fill="none"/><ellipse cx="218.6" cy="481.3" rx="4.2" ry="2.4" fill="none" stroke="#fff" stroke-width="0.7" stroke-dasharray="1.3 1.6"/><ellipse cx="219.5" cy="482.0" rx="4.2" ry="2.4" fill="#000"/><path d="M214.1 483.2 L216.1 485.7 L214.1 488.8" stroke="#fff" stroke-width="1.2" fill="none"/><ellipse cx="218.6" cy="485.3" rx="4.2" ry="2.4" fill="none" stroke="#fff" stroke-width="0.7" stroke-dasharray="1.3 1.6"/><ellipse cx="219.5" cy="486.0" rx="4.2" ry="2.4" fill="#000"/><path d="M214.1 487.2 L216.1 489.7 L214.1 492.8" stroke="#fff" stroke-width="1.2" fill="none"/><ellipse cx="218.6" cy="489.3" rx="4.2" ry="2.4" fill="none" stroke="#fff" stroke-width="0.7" stroke-dasharray="1.3 1.6"/><ellipse cx="219.5" cy="490.0" rx="4.2" ry="2.4" fill="#000"/><path d="M214.1 491.2 L216.1 493.7 L214.1 496.8" stroke="#fff" stroke-width="1.2" fill="none"/><ellipse cx="218.6" cy="493.3" rx="4.2" ry="2.4" fill="none" stroke="#fff" stroke-width="0.7" stroke-dasharray="1.3 1.6"/><ellipse cx="219.5" cy="494.0" rx="4.2" ry="2.4" fill="#000"/><path d="M213.6 160.2 L215.6 162.7 L213.6 165.8" stroke="#fff" stroke-width="1.2" fill="none"/><ellipse cx="218.1" cy="162.3" rx="4.2" ry="2.4" fill="none" stroke="#fff" stroke-width="0.7" stroke-dasharray="1.3 1.6"/><ellipse cx="219.0" cy="163.0" rx="4.2" ry="2.4" fill="#000"/><path d="M218.6 161.2 L220.6 163.7 L218.6 166.8" stroke="#fff" stroke-width="1.2" fill="none"/><ellipse cx="223.1" cy="163.3" rx="4.2" ry="2.4" fill="none" stroke="#fff" stroke-width="0.7" stroke-dasharray="1.3 1.6"/><ellipse cx="224.0" cy="164.0" rx="4.2" ry="2.4" fill="#000"/><path d="M222.1 467.2 L224.1 469.7 L222.1 472.8" stroke="#fff" stroke-width="1.2" fill="none"/><ellipse cx="226.6" cy="469.3" rx="4.2" ry="2.4" fill="none" stroke="#fff" stroke-width="0.7" stroke-dasharray="1.3 1.6"/><ellipse cx="227.5" cy="470.0" rx="4.2" ry="2.4" fill="#000"/><path d="M222.1 473.2 L224.1 475.7 L222.1 478.8" stroke="#fff" stroke-width="1.2" fill="none"/><ellipse cx="226.6" cy="475.3" rx="4.2" ry="2.4" fill="none" stroke="#fff" stroke-width="0.7" stroke-dasharray="1.3 1.6"/><ellipse cx="227.5" cy="476.0" rx="4.2" ry="2.4" fill="#000"/><path d="M222.1 479.2 L224.1 481.7 L222.1 484.8" stroke="#fff" stroke-width="1.2" fill="none"/><ellipse cx="226.6" cy="481.3" rx="4.2" ry="2.4" fill="none" stroke="#fff" stroke-width="0.7" stroke-dasharray="1.3 1.6"/><ellipse cx="227.5" cy="482.0" rx="4.2" ry="2.4" fill="#000"/><path d="M222.1 485.2 L224.1 487.7 L222.1 490.8" stroke="#fff" stroke-width="1.2" fill="none"/><ellipse cx="226.6" cy="487.3" rx="4.2" ry="2.4" fill="none" stroke="#fff" stroke-width="0.7" stroke-dasharray="1.3 1.6"/><ellipse cx="227.5" cy="488.0" rx="4.2" ry="2.4" fill="#000"/><rect x="535" y="169" width="3" height="3" fill="#000"/><rect x="469" y="191" width="3" height="3" fill="#000"/><rect x="597" y="205" width="3" height="3" fill="#000"/><rect x="629" y="241" width="3" height="3" fill="#000"/><rect x="564" y="254" width="3" height="3" fill="#000"/><rect x="466" y="277" width="3" height="3" fill="#000"/><rect x="574" y="287" width="3" height="3" fill="#000"/><rect x="679" y="178" width="3" height="3" fill="#000"/><rect x="728" y="208" width="3" height="3" fill="#000"/><rect x="692" y="231" width="3" height="3" fill="#000"/><rect x="692" y="257" width="3" height="3" fill="#000"/><rect x="744" y="274" width="3" height="3" fill="#000"/><rect x="852" y="283" width="3" height="3" fill="#000"/><rect x="660" y="309" width="3" height="3" fill="#000"/><rect x="698" y="316" width="3" height="3" fill="#000"/><rect x="446" y="346" width="3" height="3" fill="#000"/><rect x="446" y="355" width="3" height="3" fill="#000"/><rect x="600" y="378" width="3" height="3" fill="#000"/><rect x="623" y="388" width="3" height="3" fill="#000"/><rect x="476" y="391" width="3" height="3" fill="#000"/><rect x="580" y="408" width="3" height="3" fill="#000"/><rect x="613" y="408" width="3" height="3" fill="#000"/><rect x="485" y="421" width="3" height="3" fill="#000"/><rect x="636" y="431" width="3" height="3" fill="#000"/><rect x="646" y="434" width="3" height="3" fill="#000"/><rect x="485" y="444" width="3" height="3" fill="#000"/><rect x="505" y="473" width="3" height="3" fill="#000"/><rect x="751" y="339" width="3" height="3" fill="#000"/><rect x="698" y="372" width="3" height="3" fill="#000"/><rect x="810" y="434" width="3" height="3" fill="#000"/><rect x="702" y="441" width="3" height="3" fill="#000"/><rect x="734" y="460" width="3" height="3" fill="#000"/><rect x="836" y="473" width="3" height="3" fill="#000"/><rect x="407" y="188" width="3" height="3" fill="#000"/><rect x="430" y="185" width="3" height="3" fill="#000"/><rect x="420" y="300" width="3" height="3" fill="#000"/><rect x="400" y="332" width="3" height="3" fill="#000"/></svg><div class="fr" style="left:773px;top:141px;width:104px;height:45px"><div class="fi bei"></div></div><div class="t" id="q60" style="left:778px;top:147.49px;font-size:11px;color:#000;font-weight:normal;letter-spacing:-0.241px;">Number of pools</div><div class="a" style="left:778px;top:160px;width:93px;height:20px;background:#fff"></div><div class="t" style="left:783px;top:165.49px;font-size:11px;color:#000;font-weight:normal;">50</div><div class="fr" style="left:774px;top:190px;width:102px;height:45px"><div class="fi bei"></div></div><div class="t" id="q61" style="left:779px;top:196.49px;font-size:11px;color:#000;font-weight:normal;letter-spacing:-0.241px;">Mean D of pools</div><div class="a" style="left:779px;top:209px;width:91px;height:20px;background:#fff"></div><div class="t" style="left:784px;top:214.49px;font-size:11px;color:#000;font-weight:normal;">5</div><div class="fr" style="left:880px;top:137px;width:214px;height:120px"><div class="fi bei"></div></div><div class="t" style="left:693px;width:600px;text-align:center;top:141.64px;font-size:12px;color:#000;font-weight:bold"><span id="q62" style="letter-spacing:-0.160px;">Sociability distribution</span></div><div class="a" style="left:900px;top:155px;width:186px;height:86px;background:#fff"></div><div class="t" style="right:240px;top:160.79px;font-size:11px;color:#000;font-weight:normal;">24</div><div class="t" style="right:240px;top:229.49px;font-size:11px;color:#000;font-weight:normal;">0</div><div class="t" style="left:899px;top:242.79px;font-size:11px;color:#000;font-weight:normal;">0</div><div class="t" style="right:54px;top:242.79px;font-size:11px;color:#000;font-weight:normal;">1</div><svg class="a" style="left:0;top:0" width="1138" height="927"><path d="M902.5 241 V236.5 H904.5 V241 M904.5 241 V229.5 H906.5 V241 M906.5 241 V234.5 H908.5 V241 M908.5 241 V234.5 H910.5 V241 M910.5 241 V229.5 H912.5 V241 M912.5 241 V234.5 H914.5 V241 M914.5 241 V215.5 H916.5 V241 M916.5 241 V212.5 H918.5 V241 M918.5 241 V229.5 H920.5 V241 M920.5 241 V205.5 H922.5 V241 M922.5 241 V212.5 H924.5 V241 M924.5 241 V209.5 H926.5 V241 M926.5 241 V215.5 H928.5 V241 M928.5 241 V215.5 H930.5 V241 M930.5 241 V209.5 H932.5 V241 M932.5 241 V219.5 H934.5 V241 M934.5 241 V212.5 H936.5 V241 M936.5 241 V180.5 H938.5 V241 M938.5 241 V201.5 H940.5 V241 M940.5 241 V194.5 H942.5 V241 M942.5 241 V212.5 H944.5 V241 M944.5 241 V173.5 H946.5 V241 M946.5 241 V187.5 H947.5 V241 M947.5 241 V205.5 H949.5 V241 M949.5 241 V183.5 H951.5 V241 M951.5 241 V201.5 H953.5 V241 M953.5 241 V176.5 H955.5 V241 M955.5 241 V180.5 H957.5 V241 M957.5 241 V190.5 H959.5 V241 M959.5 241 V194.5 H961.5 V241 M961.5 241 V183.5 H963.5 V241 M963.5 241 V183.5 H965.5 V241 M965.5 241 V187.5 H967.5 V241 M967.5 241 V183.5 H969.5 V241 M969.5 241 V155.5 H971.5 V241 M971.5 241 V194.5 H973.5 V241 M973.5 241 V190.5 H975.5 V241 M975.5 241 V176.5 H977.5 V241 M977.5 241 V183.5 H979.5 V241 M979.5 241 V209.5 H981.5 V241 M981.5 241 V212.5 H983.5 V241 M983.5 241 V209.5 H985.5 V241 M985.5 241 V187.5 H987.5 V241 M987.5 241 V205.5 H989.5 V241 M989.5 241 V166.5 H991.5 V241 M991.5 241 V197.5 H993.5 V241 M993.5 241 V205.5 H995.5 V241 M995.5 241 V190.5 H997.5 V241 M997.5 241 V173.5 H999.5 V241 M999.5 241 V209.5 H1001.5 V241 M1001.5 241 V190.5 H1003.5 V241 M1003.5 241 V183.5 H1005.5 V241 M1005.5 241 V173.5 H1007.5 V241 M1007.5 241 V205.5 H1009.5 V241 M1009.5 241 V194.5 H1011.5 V241 M1011.5 241 V169.5 H1013.5 V241 M1013.5 241 V180.5 H1015.5 V241 M1015.5 241 V197.5 H1017.5 V241 M1017.5 241 V187.5 H1019.5 V241 M1019.5 241 V197.5 H1021.5 V241 M1021.5 241 V205.5 H1023.5 V241 M1023.5 241 V205.5 H1025.5 V241 M1025.5 241 V194.5 H1027.5 V241 M1027.5 241 V187.5 H1029.5 V241 M1029.5 241 V197.5 H1031.5 V241 M1031.5 241 V205.5 H1033.5 V241 M1033.5 241 V197.5 H1035.5 V241 M1035.5 241 V197.5 H1037.5 V241 M1037.5 241 V183.5 H1038.5 V241 M1038.5 241 V197.5 H1040.5 V241 M1040.5 241 V190.5 H1042.5 V241 M1042.5 241 V212.5 H1044.5 V241 M1044.5 241 V194.5 H1046.5 V241 M1046.5 241 V215.5 H1048.5 V241 M1048.5 241 V205.5 H1050.5 V241 M1050.5 241 V222.5 H1052.5 V241 M1052.5 241 V208.5 H1054.5 V241 M1054.5 241 V215.5 H1056.5 V241 M1056.5 241 V215.5 H1058.5 V241 M1058.5 241 V226.5 H1060.5 V241 M1060.5 241 V208.5 H1062.5 V241 M1062.5 241 V236.5 H1064.5 V241 M1064.5 241 V212.5 H1066.5 V241 M1066.5 241 V222.5 H1068.5 V241 M1068.5 241 V212.5 H1070.5 V241 M1070.5 241 V219.5 H1072.5 V241 M1072.5 241 V222.5 H1074.5 V241 M1074.5 241 V222.5 H1076.5 V241 M1076.5 241 V236.5 H1078.5 V241 M1078.5 241 V236.5 H1080.5 V241 M1080.5 241 V233.5 H1082.5 V241 M902 240.5 H1083" stroke="#000" stroke-width="1" fill="none" shape-rendering="crispEdges"/></svg><div class="fr" style="left:881px;top:258px;width:212px;height:118px"><div class="fi bei"></div></div><div class="t" style="left:693px;width:600px;text-align:center;top:262.24px;font-size:12px;color:#000;font-weight:bold"><span id="q63" style="letter-spacing:0.079px;">Individual target density</span></div><div class="a" style="left:901px;top:276px;width:184px;height:86px;background:#fff"></div><div class="t" style="right:240px;top:281.99px;font-size:11px;color:#000;font-weight:normal;">43</div><div class="t" style="right:240px;top:349.39px;font-size:11px;color:#000;font-weight:normal;">0</div><div class="t" style="left:900px;top:364.19px;font-size:11px;color:#000;font-weight:normal;">0</div><div class="t" style="right:53px;top:364.19px;font-size:11px;color:#000;font-weight:normal;">41</div><svg class="a" style="left:0;top:0" width="1138" height="927"><path d="M910.5 362 V351.5 H915.5 V362 M915.5 362 V349.5 H919.5 V362 M919.5 362 V343.5 H924.5 V362 M924.5 362 V337.5 H928.5 V362 M928.5 362 V324.5 H933.5 V362 M933.5 362 V325.5 H937.5 V362 M937.5 362 V319.5 H942.5 V362 M942.5 362 V325.5 H946.5 V362 M946.5 362 V302.5 H951.5 V362 M951.5 362 V294.5 H955.5 V362 M955.5 362 V299.5 H960.5 V362 M960.5 362 V294.5 H964.5 V362 M964.5 362 V280.5 H969.5 V362 M969.5 362 V291.5 H973.5 V362 M973.5 362 V278.5 H978.5 V362 M978.5 362 V277.5 H982.5 V362 M982.5 362 V282.5 H987.5 V362 M987.5 362 V316.5 H991.5 V362 M991.5 362 V302.5 H996.5 V362 M996.5 362 V288.5 H1000.5 V362 M1000.5 362 V286.5 H1005.5 V362 M1005.5 362 V305.5 H1009.5 V362 M1009.5 362 V278.5 H1014.5 V362 M1014.5 362 V284.5 H1018.5 V362 M1018.5 362 V296.5 H1023.5 V362 M1023.5 362 V305.5 H1027.5 V362 M1027.5 362 V305.5 H1032.5 V362 M1032.5 362 V302.5 H1037.5 V362 M1037.5 362 V294.5 H1041.5 V362 M1041.5 362 V296.5 H1046.5 V362 M1046.5 362 V305.5 H1050.5 V362 M1050.5 362 V321.5 H1055.5 V362 M1055.5 362 V327.5 H1059.5 V362 M1059.5 362 V332.5 H1064.5 V362 M1064.5 362 V335.5 H1068.5 V362 M1068.5 362 V335.5 H1073.5 V362 M1073.5 362 V327.5 H1077.5 V362 M1077.5 362 V346.5 H1082.5 V362 M1082.5 362 V357.5 H1086.5 V362 M910 361.5 H1087" stroke="#000" stroke-width="1" fill="none" shape-rendering="crispEdges"/></svg><div class="fr" style="left:881px;top:377px;width:214px;height:119px"><div class="fi bei"></div></div><div class="t" style="left:693px;width:600px;text-align:center;top:380.84px;font-size:12px;color:#000;font-weight:bold"><span id="q64" style="letter-spacing:-0.262px;">Pool density</span></div><div class="a" style="left:902px;top:394px;width:185px;height:86px;background:#fff"></div><div class="t" style="right:239px;top:399.49px;font-size:11px;color:#000;font-weight:normal;">4</div><div class="t" style="right:239px;top:470.49px;font-size:11px;color:#000;font-weight:normal;">0</div><div class="t" style="left:900px;top:482.89px;font-size:11px;color:#000;font-weight:normal;">0</div><div class="t" style="left:966px;top:482.89px;font-size:11px;color:#000;font-weight:normal;">Density</div><div class="t" style="right:53px;top:482.89px;font-size:11px;color:#000;font-weight:normal;">191</div><div class="t" style="left:867px;top:432px;width:50px;height:12px;font-size:11px;transform:rotate(-90deg);transform-origin:25px 6px;text-align:center;line-height:12px"># of pools</div><svg class="a" style="left:0;top:0" width="1138" height="927"><g fill="#000" shape-rendering="crispEdges"><rect x="902" y="394" width="2" height="86"/><rect x="904" y="436" width="1" height="44"/><rect x="905" y="458" width="2" height="22"/><rect x="909" y="458" width="1" height="22"/><rect x="916" y="458" width="1" height="22"/><rect x="918" y="458" width="1" height="22"/><rect x="924" y="458" width="1" height="22"/><rect x="902" y="479" width="23" height="1"/></g></svg><div class="fr" style="left:9px;top:136px;width:63.5px;height:33px"><div class="fi lav"></div></div><div class="t" style="left:-259.25px;width:600px;text-align:center;top:149.99px;font-size:11px;color:#000;font-weight:normal"><span id="q7" style="letter-spacing:-0.290px;">Setup</span></div><div class="fr" style="left:79px;top:136px;width:63px;height:33px"><div class="fi lav"></div></div><div class="t" style="left:-189.5px;width:600px;text-align:center;top:149.99px;font-size:11px;color:#000;font-weight:normal"><span style="">Go</span></div><svg class="a" style="left:128px;top:154px" width="12" height="13" viewBox="128 154 12 13"><path d="M130 159.8 L130 157 L131 156 L136.5 156 L138 155.7 L138 159.8 L134 159.8 L135.3 158.3 L132.2 158.3 L131.2 159.8 Z M138 161 L138 163.9 L137 165 L131.5 165 L130 165.2 L130 161 L134 161 L132.7 162.6 L135.8 162.6 L136.8 161 Z" fill="#000"/></svg><div class="fr" style="left:150px;top:136px;width:63px;height:33px"><div class="fi lav"></div></div><div class="t" style="left:-118.5px;width:600px;text-align:center;top:149.99px;font-size:11px;color:#000;font-weight:normal"><span style="">Step</span></div><div class="fr" style="left:2px;top:171px;width:97px;height:33px"><div class="fi tea"></div></div><div class="swt" style="left:7px;top:175px;width:9px;height:24px"></div><div class="thm" style="left:5px;top:190px;width:13px;height:9px"></div><div class="t" style="left:19px;top:177.34px;font-size:10px;color:#000;font-weight:normal;">On</div><div class="t" style="left:19px;top:188.34px;font-size:10px;color:#000;font-weight:normal;">Off</div><div class="t" id="q8" style="left:44px;top:180.49px;font-size:11px;color:#000;font-weight:normal;letter-spacing:-0.725px;">Social?</div><div class="fr" style="left:2px;top:205px;width:97px;height:32px"><div class="fi tea"></div></div><div class="swt" style="left:7px;top:209px;width:9px;height:24px"></div><div class="thm" style="left:5px;top:209px;width:13px;height:9px"></div><div class="t" style="left:19px;top:211.34px;font-size:10px;color:#000;font-weight:normal;">On</div><div class="t" style="left:19px;top:222.34px;font-size:10px;color:#000;font-weight:normal;">Off</div><div class="t" id="q9" style="left:44px;top:214.49px;font-size:11px;color:#000;font-weight:normal;letter-spacing:-0.249px;">Hetero?</div><div class="fr" style="left:3px;top:239px;width:96px;height:33px"><div class="fi tea"></div></div><div class="swt" style="left:9px;top:243px;width:9px;height:24px"></div><div class="thm" style="left:7px;top:258px;width:13px;height:9px"></div><div class="t" style="left:21px;top:245.34px;font-size:10px;color:#000;font-weight:normal;">On</div><div class="t" style="left:21px;top:256.33px;font-size:10px;color:#000;font-weight:normal;">Off</div><div class="t" id="q10" style="left:46px;top:248.49px;font-size:11px;color:#000;font-weight:normal;letter-spacing:-0.547px;">Asocial?</div><div class="fr" style="left:3px;top:273px;width:96px;height:32px"><div class="fi tea"></div></div><div class="swt" style="left:9px;top:277px;width:9px;height:24px"></div><div class="thm" style="left:7px;top:292px;width:13px;height:9px"></div><div class="t" style="left:21px;top:279.34px;font-size:10px;color:#000;font-weight:normal;">On</div><div class="t" style="left:21px;top:290.34px;font-size:10px;color:#000;font-weight:normal;">Off</div><div class="t" id="q11" style="left:47px;top:281.49px;font-size:11px;color:#000;font-weight:normal;letter-spacing:-0.322px;">Control?</div><div class="fr" style="left:101px;top:169px;width:70px;height:45px"><div class="fi bei"></div></div><div class="t" id="q12" style="left:106px;top:175.49px;font-size:11px;color:#000;font-weight:normal;letter-spacing:-0.046px;">#_of_Fish</div><div class="a" style="left:106px;top:188px;width:59px;height:20px;background:#fff"></div><div class="t" style="left:111px;top:193.49px;font-size:11px;color:#000;font-weight:normal;">1000</div><div class="fr" style="left:100px;top:215px;width:116px;height:59px"><div class="fi tea"></div></div><div class="t" id="q13" style="left:107px;top:223.29px;font-size:11px;color:#000;font-weight:normal;letter-spacing:-0.385px;">Dispersal_window</div><div class="fld" style="left:106px;top:240px;width:106px;height:30px"></div><div class="t" style="left:110px;top:245.89px;font-size:11px;color:#a34a1a;font-weight:normal;">200</div><div class="fr" style="left:100px;top:277px;width:116px;height:59px"><div class="fi tea"></div></div><div class="t" id="q14" style="left:107px;top:285.29px;font-size:11px;color:#000;font-weight:normal;letter-spacing:-0.233px;">Max_target</div><div class="fld" style="left:106px;top:302px;width:106px;height:30px"></div><div class="t" style="left:110px;top:307.89px;font-size:11px;color:#a34a1a;font-weight:normal;">40</div><div class="fr" style="left:100px;top:337px;width:114px;height:60px"><div class="fi tea"></div></div><div class="t" id="q15" style="left:107px;top:345.29px;font-size:11px;color:#000;font-weight:normal;letter-spacing:-0.302px;">Max_moves_per_tick</div><div class="fld" style="left:106px;top:362px;width:104px;height:30px"></div><div class="t" style="left:110px;top:367.89px;font-size:11px;color:#a34a1a;font-weight:normal;">30</div><div class="fr" style="left:100px;top:398px;width:114px;height:61px"><div class="fi tea"></div></div><div class="t" id="q16" style="left:107px;top:406.29px;font-size:11px;color:#000;font-weight:normal;letter-spacing:-0.241px;">Start_Fish_count</div><div class="fld" style="left:106px;top:423px;width:104px;height:30px"></div><div class="t" style="left:110px;top:428.89px;font-size:11px;color:#a34a1a;font-weight:normal;">1000</div><div class="t" id="q17" style="left:9px;top:322.79px;font-size:11px;color:#000;font-weight:normal;letter-spacing:-0.447px;">Select ONE</div><div class="t" id="q18" style="left:9px;top:336.79px;font-size:11px;color:#000;font-weight:normal;letter-spacing:-0.217px;">sociability</div><div class="t" id="q19" style="left:9px;top:350.79px;font-size:11px;color:#000;font-weight:normal;letter-spacing:-0.033px;">distribution from</div><div class="t" id="q20" style="left:9px;top:364.79px;font-size:11px;color:#000;font-weight:normal;letter-spacing:0.019px;">the above</div><div class="t" id="q21" style="left:9px;top:378.79px;font-size:11px;color:#000;font-weight:normal;letter-spacing:-0.021px;">toggles. Setting</div><div class="t" id="q22" style="left:9px;top:392.79px;font-size:11px;color:#000;font-weight:normal;letter-spacing:-0.048px;">more than one to</div><div class="t" id="q23" style="left:9px;top:406.79px;font-size:11px;color:#000;font-weight:normal;letter-spacing:-0.084px;">"On" will stop the</div><div class="t" id="q24" style="left:9px;top:420.79px;font-size:11px;color:#000;font-weight:normal;letter-spacing:-0.372px;">model.</div><div class="fr" style="left:2px;top:532px;width:174px;height:33px"><div class="fi tea"></div></div><div class="trk" style="left:9px;top:535px;width:160px;height:12px"></div><div class="thm" style="left:45px;top:534px;width:8px;height:14px"></div><div class="t" id="q25" style="left:11px;top:549.49px;font-size:11px;color:#000;font-weight:normal;letter-spacing:-0.167px;">Density_wiggle_room</div><div class="t" style="right:970px;top:549.49px;font-size:11px;color:#000;font-weight:normal;">0.25</div><div class="fr" style="left:3px;top:565px;width:172px;height:32px"><div class="fi tea"></div></div><div class="trk" style="left:10px;top:568px;width:158px;height:12px"></div><div class="thm" style="left:53px;top:567px;width:8px;height:14px"></div><div class="t" id="q26" style="left:12px;top:582.49px;font-size:11px;color:#000;font-weight:normal;letter-spacing:-0.484px;">PANIC_DISCOUNT</div><div class="t" style="right:971px;top:582.49px;font-size:11px;color:#000;font-weight:normal;">0.3</div><div class="fr" style="left:2px;top:597px;width:172px;height:31px"><div class="fi tea"></div></div><div class="trk" style="left:9px;top:600px;width:158px;height:12px"></div><div class="thm" style="left:115px;top:599px;width:8px;height:14px"></div><div class="t" id="q27" style="left:11px;top:614.49px;font-size:11px;color:#000;font-weight:normal;letter-spacing:-0.853px;">DECAY_COUNTER</div><div class="t" style="right:972px;top:614.49px;font-size:11px;color:#000;font-weight:normal;">0.7</div><div class="fr" style="left:2px;top:629px;width:172px;height:32px"><div class="fi tea"></div></div><div class="trk" style="left:9px;top:632px;width:158px;height:12px"></div><div class="thm" style="left:44px;top:631px;width:8px;height:14px"></div><div class="t" id="q28" style="left:11px;top:646.49px;font-size:11px;color:#000;font-weight:normal;letter-spacing:-0.727px;">MAX_SEARCH_RADIUS2</div><div class="t" style="right:972px;top:646.49px;font-size:11px;color:#000;font-weight:normal;">0.25</div><div class="fr" style="left:176px;top:532px;width:206px;height:33px"><div class="fi tea"></div></div><div class="trk" style="left:182px;top:535px;width:193px;height:12px"></div><div class="thm" style="left:298px;top:534px;width:8px;height:14px"></div><div class="t" id="q29" style="left:184px;top:549.49px;font-size:11px;color:#000;font-weight:normal;letter-spacing:-0.254px;">Big_search_radius</div><div class="t" style="right:764px;top:549.49px;font-size:11px;color:#000;font-weight:normal;">225</div><div class="fr" style="left:176px;top:565px;width:206px;height:32px"><div class="fi tea"></div></div><div class="trk" style="left:182px;top:568px;width:193px;height:12px"></div><div class="thm" style="left:226px;top:567px;width:8px;height:14px"></div><div class="t" id="q30" style="left:184px;top:582.49px;font-size:11px;color:#000;font-weight:normal;letter-spacing:-0.317px;">Small_search_radius</div><div class="t" style="right:764px;top:582.49px;font-size:11px;color:#000;font-weight:normal;">90</div><div class="fr" style="left:176px;top:598px;width:206px;height:32px"><div class="fi tea"></div></div><div class="trk" style="left:182px;top:601px;width:193px;height:12px"></div><div class="thm" style="left:181px;top:600px;width:8px;height:14px"></div><div class="t" id="q31" style="left:184px;top:615.49px;font-size:11px;color:#000;font-weight:normal;letter-spacing:-0.710px;">MAX_HANG_OUT_TIME</div><div class="t" style="right:764px;top:615.49px;font-size:11px;color:#000;font-weight:normal;">3</div><div class="fr" style="left:176px;top:631px;width:208px;height:33px"><div class="fi tea"></div></div><div class="swt" style="left:182px;top:635px;width:9px;height:24px"></div><div class="thm" style="left:180px;top:635px;width:13px;height:9px"></div><div class="t" style="left:194px;top:637.33px;font-size:10px;color:#000;font-weight:normal;">On</div><div class="t" style="left:194px;top:648.33px;font-size:10px;color:#000;font-weight:normal;">Off</div><div class="t" id="q32" style="left:219px;top:640.49px;font-size:11px;color:#000;font-weight:normal;letter-spacing:-0.211px;">Social_rank_ordered_movement?</div><div class="fr" style="left:85px;top:500px;width:207px;height:32px"><div class="fi tea"></div></div><div class="swt" style="left:91px;top:504px;width:9px;height:24px"></div><div class="thm" style="left:89px;top:519px;width:13px;height:9px"></div><div class="t" style="left:103px;top:506.34px;font-size:10px;color:#000;font-weight:normal;">On</div><div class="t" style="left:103px;top:517.33px;font-size:10px;color:#000;font-weight:normal;">Off</div><div class="t" id="q33" style="left:127px;top:509.49px;font-size:11px;color:#000;font-weight:normal;letter-spacing:-0.205px;">Use_optimal_settings?</div><div class="t" id="q34" style="left:19px;top:669.49px;font-size:11px;color:#000;font-weight:normal;letter-spacing:-0.142px;">These sliders adjust model parameters. Use the "Use_optimal_settings?</div><div class="t" id="q35" style="left:19px;top:682.99px;font-size:11px;color:#000;font-weight:normal;letter-spacing:-0.042px;">toggle to set all settings to those used in Blanchard et al. 2021.</div><div class="fr" style="left:411px;top:506px;width:212px;height:33px"><div class="fi tea"></div></div><div class="swt" style="left:417px;top:510px;width:9px;height:24px"></div><div class="thm" style="left:415px;top:525px;width:13px;height:9px"></div><div class="t" style="left:429px;top:512.34px;font-size:10px;color:#000;font-weight:normal;">On</div><div class="t" style="left:429px;top:523.33px;font-size:10px;color:#000;font-weight:normal;">Off</div><div class="t" id="q36" style="left:453px;top:515.49px;font-size:11px;color:#000;font-weight:normal;letter-spacing:-0.299px;">Grid_or_Rand_landscape?</div><div class="fr" style="left:412px;top:570px;width:214px;height:33px"><div class="fi tea"></div></div><div class="swt" style="left:418px;top:574px;width:9px;height:24px"></div><div class="thm" style="left:416px;top:589px;width:13px;height:9px"></div><div class="t" style="left:430px;top:576.33px;font-size:10px;color:#000;font-weight:normal;">On</div><div class="t" style="left:430px;top:587.33px;font-size:10px;color:#000;font-weight:normal;">Off</div><div class="t" id="q37" style="left:454px;top:579.49px;font-size:11px;color:#000;font-weight:normal;letter-spacing:-0.259px;">Show_social_v_asocial_path?</div><div class="fr" style="left:410px;top:639px;width:214px;height:33px"><div class="fi tea"></div></div><div class="swt" style="left:416px;top:643px;width:9px;height:24px"></div><div class="thm" style="left:414px;top:658px;width:13px;height:9px"></div><div class="t" style="left:428px;top:645.33px;font-size:10px;color:#000;font-weight:normal;">On</div><div class="t" style="left:428px;top:656.33px;font-size:10px;color:#000;font-weight:normal;">Off</div><div class="t" id="q38" style="left:453px;top:648.49px;font-size:11px;color:#000;font-weight:normal;letter-spacing:-0.189px;">Watch_a_random_fish?</div><div class="fr" style="left:432px;top:709px;width:186px;height:33px"><div class="fi lav"></div></div><div class="t" style="left:225.0px;width:600px;text-align:center;top:723.49px;font-size:11px;color:#000;font-weight:normal"><span id="q39" style="letter-spacing:-0.106px;">Color pool region by density</span></div><div class="fr" style="left:431px;top:765px;width:186px;height:33px"><div class="fi lav"></div></div><div class="t" style="left:224.0px;width:600px;text-align:center;top:779.49px;font-size:11px;color:#000;font-weight:normal"><span id="q40" style="letter-spacing:-0.153px;">Color pool region by sociability</span></div><div class="t" id="q41" style="left:637px;top:505.29px;font-size:11px;color:#000;font-weight:normal;letter-spacing:-0.094px;">Grid or rand landscape toggle: On will use an evenly distributed</div><div class="t" id="q42" style="left:637px;top:519.14px;font-size:11px;color:#000;font-weight:normal;letter-spacing:0.000px;">gridded distribution of holes. Off will import the txt file containing a</div><div class="t" id="q43" style="left:637px;top:532.99px;font-size:11px;color:#000;font-weight:normal;letter-spacing:-0.099px;">random hole distribution.</div><div class="t" id="q44" style="left:637px;top:560.99px;font-size:11px;color:#000;font-weight:normal;letter-spacing:-0.168px;">Show social v asocial path: On will make all fish invisible except one</div><div class="t" id="q45" style="left:637px;top:574.84px;font-size:11px;color:#000;font-weight:normal;letter-spacing:-0.155px;">random social and one random asocial fish, color them blue and red</div><div class="t" id="q46" style="left:637px;top:588.69px;font-size:11px;color:#000;font-weight:normal;letter-spacing:0.003px;">respectively, then ask them to put their pens down and track how</div><div class="t" id="q47" style="left:637px;top:602.54px;font-size:11px;color:#000;font-weight:normal;letter-spacing:0.145px;">far they've traveled.</div><div class="t" id="q48" style="left:637px;top:631.29px;font-size:11px;color:#000;font-weight:normal;letter-spacing:-0.068px;">Watch a random fish: setting this to on will highlight one random</div><div class="t" id="q49" style="left:637px;top:645.14px;font-size:11px;color:#000;font-weight:normal;letter-spacing:0.004px;">fish, color their entire region of "knowledge" at the end of each</div><div class="t" id="q50" style="left:637px;top:658.99px;font-size:11px;color:#000;font-weight:normal;letter-spacing:0.001px;">day, open their inspection window, and provide a daily count of</div><div class="t" id="q51" style="left:637px;top:672.84px;font-size:11px;color:#000;font-weight:normal;letter-spacing:-0.096px;">their observed local density in the command center.</div><div class="t" id="q52" style="left:637px;top:701.59px;font-size:11px;color:#000;font-weight:normal;letter-spacing:-0.004px;">Color pool region by density is a button that sets the color of the</div><div class="t" id="q53" style="left:637px;top:715.44px;font-size:11px;color:#000;font-weight:normal;letter-spacing:-0.042px;">region around solution holes to be colored relative to others.</div><div class="t" id="q54" style="left:637px;top:729.29px;font-size:11px;color:#000;font-weight:normal;letter-spacing:0.011px;">Warmer colors are higher densities.</div><div class="t" id="q55" style="left:637px;top:757.59px;font-size:11px;color:#000;font-weight:normal;letter-spacing:-0.044px;">Color pool region by sociability is a button that sets the color of</div><div class="t" id="q56" style="left:637px;top:771.44px;font-size:11px;color:#000;font-weight:normal;letter-spacing:-0.086px;">each solution hole as either white, if unoccupied, or on a blue scale</div><div class="t" id="q57" style="left:637px;top:785.29px;font-size:11px;color:#000;font-weight:normal;letter-spacing:-0.067px;">relative their mean population sociability and prints the hole</div><div class="t" id="q58" style="left:637px;top:799.14px;font-size:11px;color:#000;font-weight:normal;letter-spacing:-0.110px;">sociability in that space.</div></body></html>
